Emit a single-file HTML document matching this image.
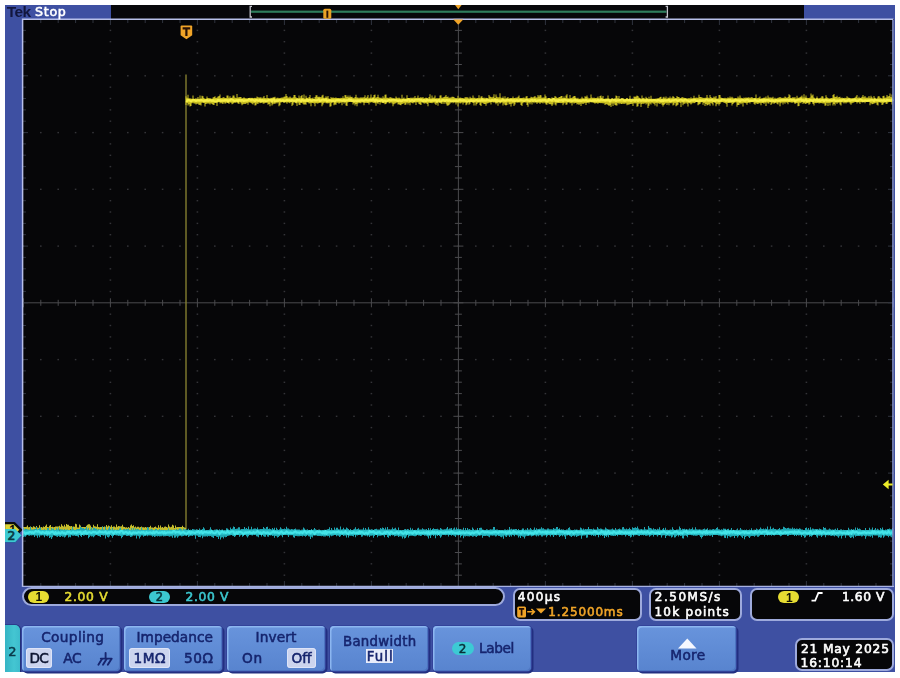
<!DOCTYPE html>
<html><head><meta charset="utf-8"><title>Tek Scope</title>
<style>
html,body{margin:0;padding:0;background:#fff;}
body{width:900px;height:678px;position:relative;overflow:hidden;font-family:"DejaVu Sans","Liberation Sans",sans-serif;}
.abs{position:absolute;}
#frame{left:5px;top:5px;width:890px;height:667px;background:#3e50a2;}
#topblack{left:111px;top:5px;width:693px;height:14px;background:#07070a;}
.plot{position:absolute;left:0;top:0;}
.t{position:absolute;white-space:nowrap;font-weight:normal;line-height:1;-webkit-text-stroke:0.5px currentColor;}
.btn{position:absolute;top:625.6px;height:45.4px;background:linear-gradient(#6894dc,#5884cf);border-radius:4px;box-shadow:inset 1.5px 1.5px 0 #8cb6f0, inset -1px -1px 0 #4c74c0, 0 0 0 1px #33439a, 1.5px 1.5px 0 1px #222f80;box-sizing:border-box;}
.lab{color:#16246a;font-size:14.5px;}
.ro{position:absolute;background:#060608;border:2px solid #9eaadc;box-sizing:border-box;}
.sel{position:absolute;background:#ccd4ee;border-radius:3.5px;box-shadow:inset 0 0 0 1px #dde4f8;}
</style></head><body>
<div class="abs" id="frame"></div>
<div class="abs" id="topblack"></div>

<!-- readout bars -->
<div class="ro" style="left:22px;top:587px;width:483px;height:19px;border-radius:9.5px;"></div>
<div class="ro" style="left:512.8px;top:587.6px;width:129.4px;height:33.2px;border-radius:7px;"></div>
<div class="ro" style="left:648.8px;top:587.6px;width:93px;height:33.2px;border-radius:7px;"></div>
<div class="ro" style="left:749.8px;top:587.6px;width:144px;height:33.2px;border-radius:7px;"></div>
<div class="ro" style="left:794.6px;top:638.2px;width:99.4px;height:32.6px;border-radius:7px;"></div>

<div class="abs" style="left:27.5px;top:591px;width:21.5px;height:12.2px;border-radius:6.1px;background:#e6dc32;"></div>
<div class="abs" style="left:148.7px;top:591px;width:21.5px;height:12.2px;border-radius:6.1px;background:#3cc8d0;"></div>



<div class="abs" style="left:777.8px;top:591.2px;width:21.7px;height:12.2px;border-radius:6.1px;background:#e6dc32;"></div>


<!-- bottom menu -->
<div class="abs" style="left:5px;top:624.6px;width:14.6px;height:47.4px;background:linear-gradient(90deg,#34b4c4,#44c6d2 60%,#3cbccc);border-radius:0 5px 0 0;box-shadow:1.2px 0 0 #22307a, 0 -1px 0 #2c3c8c;"></div>

<div class="btn" style="left:22px;width:98px;"></div>
<div class="btn" style="left:124px;width:98px;"></div>
<div class="btn" style="left:227px;width:98px;"></div>
<div class="btn" style="left:330px;width:98px;"></div>
<div class="btn" style="left:433px;width:98px;"></div>
<div class="btn" style="left:637px;width:99px;"></div>

<div class="sel" style="left:26.2px;top:647.6px;width:26px;height:20.8px;"></div>

<div class="sel" style="left:128.8px;top:647.6px;width:41.4px;height:20.8px;"></div>

<div class="sel" style="left:287.4px;top:647.6px;width:28.6px;height:20.8px;"></div>

<div class="abs" style="left:366px;top:649px;width:27px;height:14px;background:#e8ecfa;"></div>

<div class="abs" style="left:451.5px;top:642px;width:22.5px;height:13.4px;border-radius:6.7px;background:#3ccad4;"></div>

<svg class="abs" style="left:676px;top:636px;" width="24" height="14" viewBox="676 636 24 14"><polygon points="678,648.4 687.3,638.6 696.5,648.4" fill="#f6f8ff"/></svg>

<svg class="abs" style="left:94px;top:650px;" width="22" height="18" viewBox="94 650 22 18"><g stroke="#16256e" stroke-width="1.9" fill="none" stroke-linecap="round"><path d="M105.6 653V658"/><path d="M100.8 658.6H111.6"/><path d="M102 659L98.4 664.8"/><path d="M106.6 659L103 664.8"/><path d="M111.4 659L107.8 664.8"/></g></svg>
<svg class="abs" style="left:808px;top:588px;" width="18" height="16" viewBox="808 588 18 16"><path d="M811.5 600.6H815.2L818.4 593H822.6" stroke="#fff" stroke-width="1.8" fill="none"/></svg>
<svg class="plot" width="900" height="678" viewBox="0 0 900 678">
<rect x="22" y="19" width="872" height="568" fill="#060608"/>
<g fill="#343438"><rect x="22.6" y="75.1" width="1.6" height="1.4" /><rect x="40.0" y="75.1" width="1.6" height="1.4" /><rect x="57.4" y="75.1" width="1.6" height="1.4" /><rect x="74.8" y="75.1" width="1.6" height="1.4" /><rect x="92.2" y="75.1" width="1.6" height="1.4" /><rect x="109.6" y="75.1" width="1.6" height="1.4" /><rect x="127.0" y="75.1" width="1.6" height="1.4" /><rect x="144.4" y="75.1" width="1.6" height="1.4" /><rect x="161.8" y="75.1" width="1.6" height="1.4" /><rect x="179.2" y="75.1" width="1.6" height="1.4" /><rect x="196.6" y="75.1" width="1.6" height="1.4" /><rect x="214.0" y="75.1" width="1.6" height="1.4" /><rect x="231.4" y="75.1" width="1.6" height="1.4" /><rect x="248.8" y="75.1" width="1.6" height="1.4" /><rect x="266.2" y="75.1" width="1.6" height="1.4" /><rect x="283.6" y="75.1" width="1.6" height="1.4" /><rect x="301.0" y="75.1" width="1.6" height="1.4" /><rect x="318.4" y="75.1" width="1.6" height="1.4" /><rect x="335.8" y="75.1" width="1.6" height="1.4" /><rect x="353.2" y="75.1" width="1.6" height="1.4" /><rect x="370.6" y="75.1" width="1.6" height="1.4" /><rect x="388.0" y="75.1" width="1.6" height="1.4" /><rect x="405.4" y="75.1" width="1.6" height="1.4" /><rect x="422.8" y="75.1" width="1.6" height="1.4" /><rect x="440.2" y="75.1" width="1.6" height="1.4" /><rect x="457.6" y="75.1" width="1.6" height="1.4" /><rect x="475.0" y="75.1" width="1.6" height="1.4" /><rect x="492.4" y="75.1" width="1.6" height="1.4" /><rect x="509.8" y="75.1" width="1.6" height="1.4" /><rect x="527.2" y="75.1" width="1.6" height="1.4" /><rect x="544.6" y="75.1" width="1.6" height="1.4" /><rect x="562.0" y="75.1" width="1.6" height="1.4" /><rect x="579.4" y="75.1" width="1.6" height="1.4" /><rect x="596.8" y="75.1" width="1.6" height="1.4" /><rect x="614.2" y="75.1" width="1.6" height="1.4" /><rect x="631.6" y="75.1" width="1.6" height="1.4" /><rect x="649.0" y="75.1" width="1.6" height="1.4" /><rect x="666.4" y="75.1" width="1.6" height="1.4" /><rect x="683.8" y="75.1" width="1.6" height="1.4" /><rect x="701.2" y="75.1" width="1.6" height="1.4" /><rect x="718.6" y="75.1" width="1.6" height="1.4" /><rect x="736.0" y="75.1" width="1.6" height="1.4" /><rect x="753.4" y="75.1" width="1.6" height="1.4" /><rect x="770.8" y="75.1" width="1.6" height="1.4" /><rect x="788.2" y="75.1" width="1.6" height="1.4" /><rect x="805.6" y="75.1" width="1.6" height="1.4" /><rect x="823.0" y="75.1" width="1.6" height="1.4" /><rect x="840.4" y="75.1" width="1.6" height="1.4" /><rect x="857.8" y="75.1" width="1.6" height="1.4" /><rect x="875.2" y="75.1" width="1.6" height="1.4" /><rect x="892.6" y="75.1" width="1.6" height="1.4" /><rect x="22.6" y="131.9" width="1.6" height="1.4" /><rect x="40.0" y="131.9" width="1.6" height="1.4" /><rect x="57.4" y="131.9" width="1.6" height="1.4" /><rect x="74.8" y="131.9" width="1.6" height="1.4" /><rect x="92.2" y="131.9" width="1.6" height="1.4" /><rect x="109.6" y="131.9" width="1.6" height="1.4" /><rect x="127.0" y="131.9" width="1.6" height="1.4" /><rect x="144.4" y="131.9" width="1.6" height="1.4" /><rect x="161.8" y="131.9" width="1.6" height="1.4" /><rect x="179.2" y="131.9" width="1.6" height="1.4" /><rect x="196.6" y="131.9" width="1.6" height="1.4" /><rect x="214.0" y="131.9" width="1.6" height="1.4" /><rect x="231.4" y="131.9" width="1.6" height="1.4" /><rect x="248.8" y="131.9" width="1.6" height="1.4" /><rect x="266.2" y="131.9" width="1.6" height="1.4" /><rect x="283.6" y="131.9" width="1.6" height="1.4" /><rect x="301.0" y="131.9" width="1.6" height="1.4" /><rect x="318.4" y="131.9" width="1.6" height="1.4" /><rect x="335.8" y="131.9" width="1.6" height="1.4" /><rect x="353.2" y="131.9" width="1.6" height="1.4" /><rect x="370.6" y="131.9" width="1.6" height="1.4" /><rect x="388.0" y="131.9" width="1.6" height="1.4" /><rect x="405.4" y="131.9" width="1.6" height="1.4" /><rect x="422.8" y="131.9" width="1.6" height="1.4" /><rect x="440.2" y="131.9" width="1.6" height="1.4" /><rect x="457.6" y="131.9" width="1.6" height="1.4" /><rect x="475.0" y="131.9" width="1.6" height="1.4" /><rect x="492.4" y="131.9" width="1.6" height="1.4" /><rect x="509.8" y="131.9" width="1.6" height="1.4" /><rect x="527.2" y="131.9" width="1.6" height="1.4" /><rect x="544.6" y="131.9" width="1.6" height="1.4" /><rect x="562.0" y="131.9" width="1.6" height="1.4" /><rect x="579.4" y="131.9" width="1.6" height="1.4" /><rect x="596.8" y="131.9" width="1.6" height="1.4" /><rect x="614.2" y="131.9" width="1.6" height="1.4" /><rect x="631.6" y="131.9" width="1.6" height="1.4" /><rect x="649.0" y="131.9" width="1.6" height="1.4" /><rect x="666.4" y="131.9" width="1.6" height="1.4" /><rect x="683.8" y="131.9" width="1.6" height="1.4" /><rect x="701.2" y="131.9" width="1.6" height="1.4" /><rect x="718.6" y="131.9" width="1.6" height="1.4" /><rect x="736.0" y="131.9" width="1.6" height="1.4" /><rect x="753.4" y="131.9" width="1.6" height="1.4" /><rect x="770.8" y="131.9" width="1.6" height="1.4" /><rect x="788.2" y="131.9" width="1.6" height="1.4" /><rect x="805.6" y="131.9" width="1.6" height="1.4" /><rect x="823.0" y="131.9" width="1.6" height="1.4" /><rect x="840.4" y="131.9" width="1.6" height="1.4" /><rect x="857.8" y="131.9" width="1.6" height="1.4" /><rect x="875.2" y="131.9" width="1.6" height="1.4" /><rect x="892.6" y="131.9" width="1.6" height="1.4" /><rect x="22.6" y="188.6" width="1.6" height="1.4" /><rect x="40.0" y="188.6" width="1.6" height="1.4" /><rect x="57.4" y="188.6" width="1.6" height="1.4" /><rect x="74.8" y="188.6" width="1.6" height="1.4" /><rect x="92.2" y="188.6" width="1.6" height="1.4" /><rect x="109.6" y="188.6" width="1.6" height="1.4" /><rect x="127.0" y="188.6" width="1.6" height="1.4" /><rect x="144.4" y="188.6" width="1.6" height="1.4" /><rect x="161.8" y="188.6" width="1.6" height="1.4" /><rect x="179.2" y="188.6" width="1.6" height="1.4" /><rect x="196.6" y="188.6" width="1.6" height="1.4" /><rect x="214.0" y="188.6" width="1.6" height="1.4" /><rect x="231.4" y="188.6" width="1.6" height="1.4" /><rect x="248.8" y="188.6" width="1.6" height="1.4" /><rect x="266.2" y="188.6" width="1.6" height="1.4" /><rect x="283.6" y="188.6" width="1.6" height="1.4" /><rect x="301.0" y="188.6" width="1.6" height="1.4" /><rect x="318.4" y="188.6" width="1.6" height="1.4" /><rect x="335.8" y="188.6" width="1.6" height="1.4" /><rect x="353.2" y="188.6" width="1.6" height="1.4" /><rect x="370.6" y="188.6" width="1.6" height="1.4" /><rect x="388.0" y="188.6" width="1.6" height="1.4" /><rect x="405.4" y="188.6" width="1.6" height="1.4" /><rect x="422.8" y="188.6" width="1.6" height="1.4" /><rect x="440.2" y="188.6" width="1.6" height="1.4" /><rect x="457.6" y="188.6" width="1.6" height="1.4" /><rect x="475.0" y="188.6" width="1.6" height="1.4" /><rect x="492.4" y="188.6" width="1.6" height="1.4" /><rect x="509.8" y="188.6" width="1.6" height="1.4" /><rect x="527.2" y="188.6" width="1.6" height="1.4" /><rect x="544.6" y="188.6" width="1.6" height="1.4" /><rect x="562.0" y="188.6" width="1.6" height="1.4" /><rect x="579.4" y="188.6" width="1.6" height="1.4" /><rect x="596.8" y="188.6" width="1.6" height="1.4" /><rect x="614.2" y="188.6" width="1.6" height="1.4" /><rect x="631.6" y="188.6" width="1.6" height="1.4" /><rect x="649.0" y="188.6" width="1.6" height="1.4" /><rect x="666.4" y="188.6" width="1.6" height="1.4" /><rect x="683.8" y="188.6" width="1.6" height="1.4" /><rect x="701.2" y="188.6" width="1.6" height="1.4" /><rect x="718.6" y="188.6" width="1.6" height="1.4" /><rect x="736.0" y="188.6" width="1.6" height="1.4" /><rect x="753.4" y="188.6" width="1.6" height="1.4" /><rect x="770.8" y="188.6" width="1.6" height="1.4" /><rect x="788.2" y="188.6" width="1.6" height="1.4" /><rect x="805.6" y="188.6" width="1.6" height="1.4" /><rect x="823.0" y="188.6" width="1.6" height="1.4" /><rect x="840.4" y="188.6" width="1.6" height="1.4" /><rect x="857.8" y="188.6" width="1.6" height="1.4" /><rect x="875.2" y="188.6" width="1.6" height="1.4" /><rect x="892.6" y="188.6" width="1.6" height="1.4" /><rect x="22.6" y="245.4" width="1.6" height="1.4" /><rect x="40.0" y="245.4" width="1.6" height="1.4" /><rect x="57.4" y="245.4" width="1.6" height="1.4" /><rect x="74.8" y="245.4" width="1.6" height="1.4" /><rect x="92.2" y="245.4" width="1.6" height="1.4" /><rect x="109.6" y="245.4" width="1.6" height="1.4" /><rect x="127.0" y="245.4" width="1.6" height="1.4" /><rect x="144.4" y="245.4" width="1.6" height="1.4" /><rect x="161.8" y="245.4" width="1.6" height="1.4" /><rect x="179.2" y="245.4" width="1.6" height="1.4" /><rect x="196.6" y="245.4" width="1.6" height="1.4" /><rect x="214.0" y="245.4" width="1.6" height="1.4" /><rect x="231.4" y="245.4" width="1.6" height="1.4" /><rect x="248.8" y="245.4" width="1.6" height="1.4" /><rect x="266.2" y="245.4" width="1.6" height="1.4" /><rect x="283.6" y="245.4" width="1.6" height="1.4" /><rect x="301.0" y="245.4" width="1.6" height="1.4" /><rect x="318.4" y="245.4" width="1.6" height="1.4" /><rect x="335.8" y="245.4" width="1.6" height="1.4" /><rect x="353.2" y="245.4" width="1.6" height="1.4" /><rect x="370.6" y="245.4" width="1.6" height="1.4" /><rect x="388.0" y="245.4" width="1.6" height="1.4" /><rect x="405.4" y="245.4" width="1.6" height="1.4" /><rect x="422.8" y="245.4" width="1.6" height="1.4" /><rect x="440.2" y="245.4" width="1.6" height="1.4" /><rect x="457.6" y="245.4" width="1.6" height="1.4" /><rect x="475.0" y="245.4" width="1.6" height="1.4" /><rect x="492.4" y="245.4" width="1.6" height="1.4" /><rect x="509.8" y="245.4" width="1.6" height="1.4" /><rect x="527.2" y="245.4" width="1.6" height="1.4" /><rect x="544.6" y="245.4" width="1.6" height="1.4" /><rect x="562.0" y="245.4" width="1.6" height="1.4" /><rect x="579.4" y="245.4" width="1.6" height="1.4" /><rect x="596.8" y="245.4" width="1.6" height="1.4" /><rect x="614.2" y="245.4" width="1.6" height="1.4" /><rect x="631.6" y="245.4" width="1.6" height="1.4" /><rect x="649.0" y="245.4" width="1.6" height="1.4" /><rect x="666.4" y="245.4" width="1.6" height="1.4" /><rect x="683.8" y="245.4" width="1.6" height="1.4" /><rect x="701.2" y="245.4" width="1.6" height="1.4" /><rect x="718.6" y="245.4" width="1.6" height="1.4" /><rect x="736.0" y="245.4" width="1.6" height="1.4" /><rect x="753.4" y="245.4" width="1.6" height="1.4" /><rect x="770.8" y="245.4" width="1.6" height="1.4" /><rect x="788.2" y="245.4" width="1.6" height="1.4" /><rect x="805.6" y="245.4" width="1.6" height="1.4" /><rect x="823.0" y="245.4" width="1.6" height="1.4" /><rect x="840.4" y="245.4" width="1.6" height="1.4" /><rect x="857.8" y="245.4" width="1.6" height="1.4" /><rect x="875.2" y="245.4" width="1.6" height="1.4" /><rect x="892.6" y="245.4" width="1.6" height="1.4" /><rect x="22.6" y="358.9" width="1.6" height="1.4" /><rect x="40.0" y="358.9" width="1.6" height="1.4" /><rect x="57.4" y="358.9" width="1.6" height="1.4" /><rect x="74.8" y="358.9" width="1.6" height="1.4" /><rect x="92.2" y="358.9" width="1.6" height="1.4" /><rect x="109.6" y="358.9" width="1.6" height="1.4" /><rect x="127.0" y="358.9" width="1.6" height="1.4" /><rect x="144.4" y="358.9" width="1.6" height="1.4" /><rect x="161.8" y="358.9" width="1.6" height="1.4" /><rect x="179.2" y="358.9" width="1.6" height="1.4" /><rect x="196.6" y="358.9" width="1.6" height="1.4" /><rect x="214.0" y="358.9" width="1.6" height="1.4" /><rect x="231.4" y="358.9" width="1.6" height="1.4" /><rect x="248.8" y="358.9" width="1.6" height="1.4" /><rect x="266.2" y="358.9" width="1.6" height="1.4" /><rect x="283.6" y="358.9" width="1.6" height="1.4" /><rect x="301.0" y="358.9" width="1.6" height="1.4" /><rect x="318.4" y="358.9" width="1.6" height="1.4" /><rect x="335.8" y="358.9" width="1.6" height="1.4" /><rect x="353.2" y="358.9" width="1.6" height="1.4" /><rect x="370.6" y="358.9" width="1.6" height="1.4" /><rect x="388.0" y="358.9" width="1.6" height="1.4" /><rect x="405.4" y="358.9" width="1.6" height="1.4" /><rect x="422.8" y="358.9" width="1.6" height="1.4" /><rect x="440.2" y="358.9" width="1.6" height="1.4" /><rect x="457.6" y="358.9" width="1.6" height="1.4" /><rect x="475.0" y="358.9" width="1.6" height="1.4" /><rect x="492.4" y="358.9" width="1.6" height="1.4" /><rect x="509.8" y="358.9" width="1.6" height="1.4" /><rect x="527.2" y="358.9" width="1.6" height="1.4" /><rect x="544.6" y="358.9" width="1.6" height="1.4" /><rect x="562.0" y="358.9" width="1.6" height="1.4" /><rect x="579.4" y="358.9" width="1.6" height="1.4" /><rect x="596.8" y="358.9" width="1.6" height="1.4" /><rect x="614.2" y="358.9" width="1.6" height="1.4" /><rect x="631.6" y="358.9" width="1.6" height="1.4" /><rect x="649.0" y="358.9" width="1.6" height="1.4" /><rect x="666.4" y="358.9" width="1.6" height="1.4" /><rect x="683.8" y="358.9" width="1.6" height="1.4" /><rect x="701.2" y="358.9" width="1.6" height="1.4" /><rect x="718.6" y="358.9" width="1.6" height="1.4" /><rect x="736.0" y="358.9" width="1.6" height="1.4" /><rect x="753.4" y="358.9" width="1.6" height="1.4" /><rect x="770.8" y="358.9" width="1.6" height="1.4" /><rect x="788.2" y="358.9" width="1.6" height="1.4" /><rect x="805.6" y="358.9" width="1.6" height="1.4" /><rect x="823.0" y="358.9" width="1.6" height="1.4" /><rect x="840.4" y="358.9" width="1.6" height="1.4" /><rect x="857.8" y="358.9" width="1.6" height="1.4" /><rect x="875.2" y="358.9" width="1.6" height="1.4" /><rect x="892.6" y="358.9" width="1.6" height="1.4" /><rect x="22.6" y="415.6" width="1.6" height="1.4" /><rect x="40.0" y="415.6" width="1.6" height="1.4" /><rect x="57.4" y="415.6" width="1.6" height="1.4" /><rect x="74.8" y="415.6" width="1.6" height="1.4" /><rect x="92.2" y="415.6" width="1.6" height="1.4" /><rect x="109.6" y="415.6" width="1.6" height="1.4" /><rect x="127.0" y="415.6" width="1.6" height="1.4" /><rect x="144.4" y="415.6" width="1.6" height="1.4" /><rect x="161.8" y="415.6" width="1.6" height="1.4" /><rect x="179.2" y="415.6" width="1.6" height="1.4" /><rect x="196.6" y="415.6" width="1.6" height="1.4" /><rect x="214.0" y="415.6" width="1.6" height="1.4" /><rect x="231.4" y="415.6" width="1.6" height="1.4" /><rect x="248.8" y="415.6" width="1.6" height="1.4" /><rect x="266.2" y="415.6" width="1.6" height="1.4" /><rect x="283.6" y="415.6" width="1.6" height="1.4" /><rect x="301.0" y="415.6" width="1.6" height="1.4" /><rect x="318.4" y="415.6" width="1.6" height="1.4" /><rect x="335.8" y="415.6" width="1.6" height="1.4" /><rect x="353.2" y="415.6" width="1.6" height="1.4" /><rect x="370.6" y="415.6" width="1.6" height="1.4" /><rect x="388.0" y="415.6" width="1.6" height="1.4" /><rect x="405.4" y="415.6" width="1.6" height="1.4" /><rect x="422.8" y="415.6" width="1.6" height="1.4" /><rect x="440.2" y="415.6" width="1.6" height="1.4" /><rect x="457.6" y="415.6" width="1.6" height="1.4" /><rect x="475.0" y="415.6" width="1.6" height="1.4" /><rect x="492.4" y="415.6" width="1.6" height="1.4" /><rect x="509.8" y="415.6" width="1.6" height="1.4" /><rect x="527.2" y="415.6" width="1.6" height="1.4" /><rect x="544.6" y="415.6" width="1.6" height="1.4" /><rect x="562.0" y="415.6" width="1.6" height="1.4" /><rect x="579.4" y="415.6" width="1.6" height="1.4" /><rect x="596.8" y="415.6" width="1.6" height="1.4" /><rect x="614.2" y="415.6" width="1.6" height="1.4" /><rect x="631.6" y="415.6" width="1.6" height="1.4" /><rect x="649.0" y="415.6" width="1.6" height="1.4" /><rect x="666.4" y="415.6" width="1.6" height="1.4" /><rect x="683.8" y="415.6" width="1.6" height="1.4" /><rect x="701.2" y="415.6" width="1.6" height="1.4" /><rect x="718.6" y="415.6" width="1.6" height="1.4" /><rect x="736.0" y="415.6" width="1.6" height="1.4" /><rect x="753.4" y="415.6" width="1.6" height="1.4" /><rect x="770.8" y="415.6" width="1.6" height="1.4" /><rect x="788.2" y="415.6" width="1.6" height="1.4" /><rect x="805.6" y="415.6" width="1.6" height="1.4" /><rect x="823.0" y="415.6" width="1.6" height="1.4" /><rect x="840.4" y="415.6" width="1.6" height="1.4" /><rect x="857.8" y="415.6" width="1.6" height="1.4" /><rect x="875.2" y="415.6" width="1.6" height="1.4" /><rect x="892.6" y="415.6" width="1.6" height="1.4" /><rect x="22.6" y="472.4" width="1.6" height="1.4" /><rect x="40.0" y="472.4" width="1.6" height="1.4" /><rect x="57.4" y="472.4" width="1.6" height="1.4" /><rect x="74.8" y="472.4" width="1.6" height="1.4" /><rect x="92.2" y="472.4" width="1.6" height="1.4" /><rect x="109.6" y="472.4" width="1.6" height="1.4" /><rect x="127.0" y="472.4" width="1.6" height="1.4" /><rect x="144.4" y="472.4" width="1.6" height="1.4" /><rect x="161.8" y="472.4" width="1.6" height="1.4" /><rect x="179.2" y="472.4" width="1.6" height="1.4" /><rect x="196.6" y="472.4" width="1.6" height="1.4" /><rect x="214.0" y="472.4" width="1.6" height="1.4" /><rect x="231.4" y="472.4" width="1.6" height="1.4" /><rect x="248.8" y="472.4" width="1.6" height="1.4" /><rect x="266.2" y="472.4" width="1.6" height="1.4" /><rect x="283.6" y="472.4" width="1.6" height="1.4" /><rect x="301.0" y="472.4" width="1.6" height="1.4" /><rect x="318.4" y="472.4" width="1.6" height="1.4" /><rect x="335.8" y="472.4" width="1.6" height="1.4" /><rect x="353.2" y="472.4" width="1.6" height="1.4" /><rect x="370.6" y="472.4" width="1.6" height="1.4" /><rect x="388.0" y="472.4" width="1.6" height="1.4" /><rect x="405.4" y="472.4" width="1.6" height="1.4" /><rect x="422.8" y="472.4" width="1.6" height="1.4" /><rect x="440.2" y="472.4" width="1.6" height="1.4" /><rect x="457.6" y="472.4" width="1.6" height="1.4" /><rect x="475.0" y="472.4" width="1.6" height="1.4" /><rect x="492.4" y="472.4" width="1.6" height="1.4" /><rect x="509.8" y="472.4" width="1.6" height="1.4" /><rect x="527.2" y="472.4" width="1.6" height="1.4" /><rect x="544.6" y="472.4" width="1.6" height="1.4" /><rect x="562.0" y="472.4" width="1.6" height="1.4" /><rect x="579.4" y="472.4" width="1.6" height="1.4" /><rect x="596.8" y="472.4" width="1.6" height="1.4" /><rect x="614.2" y="472.4" width="1.6" height="1.4" /><rect x="631.6" y="472.4" width="1.6" height="1.4" /><rect x="649.0" y="472.4" width="1.6" height="1.4" /><rect x="666.4" y="472.4" width="1.6" height="1.4" /><rect x="683.8" y="472.4" width="1.6" height="1.4" /><rect x="701.2" y="472.4" width="1.6" height="1.4" /><rect x="718.6" y="472.4" width="1.6" height="1.4" /><rect x="736.0" y="472.4" width="1.6" height="1.4" /><rect x="753.4" y="472.4" width="1.6" height="1.4" /><rect x="770.8" y="472.4" width="1.6" height="1.4" /><rect x="788.2" y="472.4" width="1.6" height="1.4" /><rect x="805.6" y="472.4" width="1.6" height="1.4" /><rect x="823.0" y="472.4" width="1.6" height="1.4" /><rect x="840.4" y="472.4" width="1.6" height="1.4" /><rect x="857.8" y="472.4" width="1.6" height="1.4" /><rect x="875.2" y="472.4" width="1.6" height="1.4" /><rect x="892.6" y="472.4" width="1.6" height="1.4" /><rect x="22.6" y="529.1" width="1.6" height="1.4" /><rect x="40.0" y="529.1" width="1.6" height="1.4" /><rect x="57.4" y="529.1" width="1.6" height="1.4" /><rect x="74.8" y="529.1" width="1.6" height="1.4" /><rect x="92.2" y="529.1" width="1.6" height="1.4" /><rect x="109.6" y="529.1" width="1.6" height="1.4" /><rect x="127.0" y="529.1" width="1.6" height="1.4" /><rect x="144.4" y="529.1" width="1.6" height="1.4" /><rect x="161.8" y="529.1" width="1.6" height="1.4" /><rect x="179.2" y="529.1" width="1.6" height="1.4" /><rect x="196.6" y="529.1" width="1.6" height="1.4" /><rect x="214.0" y="529.1" width="1.6" height="1.4" /><rect x="231.4" y="529.1" width="1.6" height="1.4" /><rect x="248.8" y="529.1" width="1.6" height="1.4" /><rect x="266.2" y="529.1" width="1.6" height="1.4" /><rect x="283.6" y="529.1" width="1.6" height="1.4" /><rect x="301.0" y="529.1" width="1.6" height="1.4" /><rect x="318.4" y="529.1" width="1.6" height="1.4" /><rect x="335.8" y="529.1" width="1.6" height="1.4" /><rect x="353.2" y="529.1" width="1.6" height="1.4" /><rect x="370.6" y="529.1" width="1.6" height="1.4" /><rect x="388.0" y="529.1" width="1.6" height="1.4" /><rect x="405.4" y="529.1" width="1.6" height="1.4" /><rect x="422.8" y="529.1" width="1.6" height="1.4" /><rect x="440.2" y="529.1" width="1.6" height="1.4" /><rect x="457.6" y="529.1" width="1.6" height="1.4" /><rect x="475.0" y="529.1" width="1.6" height="1.4" /><rect x="492.4" y="529.1" width="1.6" height="1.4" /><rect x="509.8" y="529.1" width="1.6" height="1.4" /><rect x="527.2" y="529.1" width="1.6" height="1.4" /><rect x="544.6" y="529.1" width="1.6" height="1.4" /><rect x="562.0" y="529.1" width="1.6" height="1.4" /><rect x="579.4" y="529.1" width="1.6" height="1.4" /><rect x="596.8" y="529.1" width="1.6" height="1.4" /><rect x="614.2" y="529.1" width="1.6" height="1.4" /><rect x="631.6" y="529.1" width="1.6" height="1.4" /><rect x="649.0" y="529.1" width="1.6" height="1.4" /><rect x="666.4" y="529.1" width="1.6" height="1.4" /><rect x="683.8" y="529.1" width="1.6" height="1.4" /><rect x="701.2" y="529.1" width="1.6" height="1.4" /><rect x="718.6" y="529.1" width="1.6" height="1.4" /><rect x="736.0" y="529.1" width="1.6" height="1.4" /><rect x="753.4" y="529.1" width="1.6" height="1.4" /><rect x="770.8" y="529.1" width="1.6" height="1.4" /><rect x="788.2" y="529.1" width="1.6" height="1.4" /><rect x="805.6" y="529.1" width="1.6" height="1.4" /><rect x="823.0" y="529.1" width="1.6" height="1.4" /><rect x="840.4" y="529.1" width="1.6" height="1.4" /><rect x="857.8" y="529.1" width="1.6" height="1.4" /><rect x="875.2" y="529.1" width="1.6" height="1.4" /><rect x="892.6" y="529.1" width="1.6" height="1.4" /><rect x="109.6" y="29.7" width="1.6" height="1.4" /><rect x="109.6" y="41.0" width="1.6" height="1.4" /><rect x="109.6" y="52.4" width="1.6" height="1.4" /><rect x="109.6" y="63.8" width="1.6" height="1.4" /><rect x="109.6" y="86.5" width="1.6" height="1.4" /><rect x="109.6" y="97.8" width="1.6" height="1.4" /><rect x="109.6" y="109.2" width="1.6" height="1.4" /><rect x="109.6" y="120.5" width="1.6" height="1.4" /><rect x="109.6" y="143.2" width="1.6" height="1.4" /><rect x="109.6" y="154.6" width="1.6" height="1.4" /><rect x="109.6" y="165.9" width="1.6" height="1.4" /><rect x="109.6" y="177.3" width="1.6" height="1.4" /><rect x="109.6" y="200.0" width="1.6" height="1.4" /><rect x="109.6" y="211.3" width="1.6" height="1.4" /><rect x="109.6" y="222.7" width="1.6" height="1.4" /><rect x="109.6" y="234.0" width="1.6" height="1.4" /><rect x="109.6" y="256.7" width="1.6" height="1.4" /><rect x="109.6" y="268.1" width="1.6" height="1.4" /><rect x="109.6" y="279.4" width="1.6" height="1.4" /><rect x="109.6" y="290.8" width="1.6" height="1.4" /><rect x="109.6" y="313.5" width="1.6" height="1.4" /><rect x="109.6" y="324.8" width="1.6" height="1.4" /><rect x="109.6" y="336.2" width="1.6" height="1.4" /><rect x="109.6" y="347.5" width="1.6" height="1.4" /><rect x="109.6" y="370.2" width="1.6" height="1.4" /><rect x="109.6" y="381.6" width="1.6" height="1.4" /><rect x="109.6" y="392.9" width="1.6" height="1.4" /><rect x="109.6" y="404.3" width="1.6" height="1.4" /><rect x="109.6" y="426.9" width="1.6" height="1.4" /><rect x="109.6" y="438.3" width="1.6" height="1.4" /><rect x="109.6" y="449.7" width="1.6" height="1.4" /><rect x="109.6" y="461.0" width="1.6" height="1.4" /><rect x="109.6" y="483.7" width="1.6" height="1.4" /><rect x="109.6" y="495.1" width="1.6" height="1.4" /><rect x="109.6" y="506.4" width="1.6" height="1.4" /><rect x="109.6" y="517.8" width="1.6" height="1.4" /><rect x="109.6" y="540.4" width="1.6" height="1.4" /><rect x="109.6" y="551.8" width="1.6" height="1.4" /><rect x="109.6" y="563.1" width="1.6" height="1.4" /><rect x="109.6" y="574.5" width="1.6" height="1.4" /><rect x="196.6" y="29.7" width="1.6" height="1.4" /><rect x="196.6" y="41.0" width="1.6" height="1.4" /><rect x="196.6" y="52.4" width="1.6" height="1.4" /><rect x="196.6" y="63.8" width="1.6" height="1.4" /><rect x="196.6" y="86.5" width="1.6" height="1.4" /><rect x="196.6" y="97.8" width="1.6" height="1.4" /><rect x="196.6" y="109.2" width="1.6" height="1.4" /><rect x="196.6" y="120.5" width="1.6" height="1.4" /><rect x="196.6" y="143.2" width="1.6" height="1.4" /><rect x="196.6" y="154.6" width="1.6" height="1.4" /><rect x="196.6" y="165.9" width="1.6" height="1.4" /><rect x="196.6" y="177.3" width="1.6" height="1.4" /><rect x="196.6" y="200.0" width="1.6" height="1.4" /><rect x="196.6" y="211.3" width="1.6" height="1.4" /><rect x="196.6" y="222.7" width="1.6" height="1.4" /><rect x="196.6" y="234.0" width="1.6" height="1.4" /><rect x="196.6" y="256.7" width="1.6" height="1.4" /><rect x="196.6" y="268.1" width="1.6" height="1.4" /><rect x="196.6" y="279.4" width="1.6" height="1.4" /><rect x="196.6" y="290.8" width="1.6" height="1.4" /><rect x="196.6" y="313.5" width="1.6" height="1.4" /><rect x="196.6" y="324.8" width="1.6" height="1.4" /><rect x="196.6" y="336.2" width="1.6" height="1.4" /><rect x="196.6" y="347.5" width="1.6" height="1.4" /><rect x="196.6" y="370.2" width="1.6" height="1.4" /><rect x="196.6" y="381.6" width="1.6" height="1.4" /><rect x="196.6" y="392.9" width="1.6" height="1.4" /><rect x="196.6" y="404.3" width="1.6" height="1.4" /><rect x="196.6" y="426.9" width="1.6" height="1.4" /><rect x="196.6" y="438.3" width="1.6" height="1.4" /><rect x="196.6" y="449.7" width="1.6" height="1.4" /><rect x="196.6" y="461.0" width="1.6" height="1.4" /><rect x="196.6" y="483.7" width="1.6" height="1.4" /><rect x="196.6" y="495.1" width="1.6" height="1.4" /><rect x="196.6" y="506.4" width="1.6" height="1.4" /><rect x="196.6" y="517.8" width="1.6" height="1.4" /><rect x="196.6" y="540.4" width="1.6" height="1.4" /><rect x="196.6" y="551.8" width="1.6" height="1.4" /><rect x="196.6" y="563.1" width="1.6" height="1.4" /><rect x="196.6" y="574.5" width="1.6" height="1.4" /><rect x="283.6" y="29.7" width="1.6" height="1.4" /><rect x="283.6" y="41.0" width="1.6" height="1.4" /><rect x="283.6" y="52.4" width="1.6" height="1.4" /><rect x="283.6" y="63.8" width="1.6" height="1.4" /><rect x="283.6" y="86.5" width="1.6" height="1.4" /><rect x="283.6" y="97.8" width="1.6" height="1.4" /><rect x="283.6" y="109.2" width="1.6" height="1.4" /><rect x="283.6" y="120.5" width="1.6" height="1.4" /><rect x="283.6" y="143.2" width="1.6" height="1.4" /><rect x="283.6" y="154.6" width="1.6" height="1.4" /><rect x="283.6" y="165.9" width="1.6" height="1.4" /><rect x="283.6" y="177.3" width="1.6" height="1.4" /><rect x="283.6" y="200.0" width="1.6" height="1.4" /><rect x="283.6" y="211.3" width="1.6" height="1.4" /><rect x="283.6" y="222.7" width="1.6" height="1.4" /><rect x="283.6" y="234.0" width="1.6" height="1.4" /><rect x="283.6" y="256.7" width="1.6" height="1.4" /><rect x="283.6" y="268.1" width="1.6" height="1.4" /><rect x="283.6" y="279.4" width="1.6" height="1.4" /><rect x="283.6" y="290.8" width="1.6" height="1.4" /><rect x="283.6" y="313.5" width="1.6" height="1.4" /><rect x="283.6" y="324.8" width="1.6" height="1.4" /><rect x="283.6" y="336.2" width="1.6" height="1.4" /><rect x="283.6" y="347.5" width="1.6" height="1.4" /><rect x="283.6" y="370.2" width="1.6" height="1.4" /><rect x="283.6" y="381.6" width="1.6" height="1.4" /><rect x="283.6" y="392.9" width="1.6" height="1.4" /><rect x="283.6" y="404.3" width="1.6" height="1.4" /><rect x="283.6" y="426.9" width="1.6" height="1.4" /><rect x="283.6" y="438.3" width="1.6" height="1.4" /><rect x="283.6" y="449.7" width="1.6" height="1.4" /><rect x="283.6" y="461.0" width="1.6" height="1.4" /><rect x="283.6" y="483.7" width="1.6" height="1.4" /><rect x="283.6" y="495.1" width="1.6" height="1.4" /><rect x="283.6" y="506.4" width="1.6" height="1.4" /><rect x="283.6" y="517.8" width="1.6" height="1.4" /><rect x="283.6" y="540.4" width="1.6" height="1.4" /><rect x="283.6" y="551.8" width="1.6" height="1.4" /><rect x="283.6" y="563.1" width="1.6" height="1.4" /><rect x="283.6" y="574.5" width="1.6" height="1.4" /><rect x="370.6" y="29.7" width="1.6" height="1.4" /><rect x="370.6" y="41.0" width="1.6" height="1.4" /><rect x="370.6" y="52.4" width="1.6" height="1.4" /><rect x="370.6" y="63.8" width="1.6" height="1.4" /><rect x="370.6" y="86.5" width="1.6" height="1.4" /><rect x="370.6" y="97.8" width="1.6" height="1.4" /><rect x="370.6" y="109.2" width="1.6" height="1.4" /><rect x="370.6" y="120.5" width="1.6" height="1.4" /><rect x="370.6" y="143.2" width="1.6" height="1.4" /><rect x="370.6" y="154.6" width="1.6" height="1.4" /><rect x="370.6" y="165.9" width="1.6" height="1.4" /><rect x="370.6" y="177.3" width="1.6" height="1.4" /><rect x="370.6" y="200.0" width="1.6" height="1.4" /><rect x="370.6" y="211.3" width="1.6" height="1.4" /><rect x="370.6" y="222.7" width="1.6" height="1.4" /><rect x="370.6" y="234.0" width="1.6" height="1.4" /><rect x="370.6" y="256.7" width="1.6" height="1.4" /><rect x="370.6" y="268.1" width="1.6" height="1.4" /><rect x="370.6" y="279.4" width="1.6" height="1.4" /><rect x="370.6" y="290.8" width="1.6" height="1.4" /><rect x="370.6" y="313.5" width="1.6" height="1.4" /><rect x="370.6" y="324.8" width="1.6" height="1.4" /><rect x="370.6" y="336.2" width="1.6" height="1.4" /><rect x="370.6" y="347.5" width="1.6" height="1.4" /><rect x="370.6" y="370.2" width="1.6" height="1.4" /><rect x="370.6" y="381.6" width="1.6" height="1.4" /><rect x="370.6" y="392.9" width="1.6" height="1.4" /><rect x="370.6" y="404.3" width="1.6" height="1.4" /><rect x="370.6" y="426.9" width="1.6" height="1.4" /><rect x="370.6" y="438.3" width="1.6" height="1.4" /><rect x="370.6" y="449.7" width="1.6" height="1.4" /><rect x="370.6" y="461.0" width="1.6" height="1.4" /><rect x="370.6" y="483.7" width="1.6" height="1.4" /><rect x="370.6" y="495.1" width="1.6" height="1.4" /><rect x="370.6" y="506.4" width="1.6" height="1.4" /><rect x="370.6" y="517.8" width="1.6" height="1.4" /><rect x="370.6" y="540.4" width="1.6" height="1.4" /><rect x="370.6" y="551.8" width="1.6" height="1.4" /><rect x="370.6" y="563.1" width="1.6" height="1.4" /><rect x="370.6" y="574.5" width="1.6" height="1.4" /><rect x="544.6" y="29.7" width="1.6" height="1.4" /><rect x="544.6" y="41.0" width="1.6" height="1.4" /><rect x="544.6" y="52.4" width="1.6" height="1.4" /><rect x="544.6" y="63.8" width="1.6" height="1.4" /><rect x="544.6" y="86.5" width="1.6" height="1.4" /><rect x="544.6" y="97.8" width="1.6" height="1.4" /><rect x="544.6" y="109.2" width="1.6" height="1.4" /><rect x="544.6" y="120.5" width="1.6" height="1.4" /><rect x="544.6" y="143.2" width="1.6" height="1.4" /><rect x="544.6" y="154.6" width="1.6" height="1.4" /><rect x="544.6" y="165.9" width="1.6" height="1.4" /><rect x="544.6" y="177.3" width="1.6" height="1.4" /><rect x="544.6" y="200.0" width="1.6" height="1.4" /><rect x="544.6" y="211.3" width="1.6" height="1.4" /><rect x="544.6" y="222.7" width="1.6" height="1.4" /><rect x="544.6" y="234.0" width="1.6" height="1.4" /><rect x="544.6" y="256.7" width="1.6" height="1.4" /><rect x="544.6" y="268.1" width="1.6" height="1.4" /><rect x="544.6" y="279.4" width="1.6" height="1.4" /><rect x="544.6" y="290.8" width="1.6" height="1.4" /><rect x="544.6" y="313.5" width="1.6" height="1.4" /><rect x="544.6" y="324.8" width="1.6" height="1.4" /><rect x="544.6" y="336.2" width="1.6" height="1.4" /><rect x="544.6" y="347.5" width="1.6" height="1.4" /><rect x="544.6" y="370.2" width="1.6" height="1.4" /><rect x="544.6" y="381.6" width="1.6" height="1.4" /><rect x="544.6" y="392.9" width="1.6" height="1.4" /><rect x="544.6" y="404.3" width="1.6" height="1.4" /><rect x="544.6" y="426.9" width="1.6" height="1.4" /><rect x="544.6" y="438.3" width="1.6" height="1.4" /><rect x="544.6" y="449.7" width="1.6" height="1.4" /><rect x="544.6" y="461.0" width="1.6" height="1.4" /><rect x="544.6" y="483.7" width="1.6" height="1.4" /><rect x="544.6" y="495.1" width="1.6" height="1.4" /><rect x="544.6" y="506.4" width="1.6" height="1.4" /><rect x="544.6" y="517.8" width="1.6" height="1.4" /><rect x="544.6" y="540.4" width="1.6" height="1.4" /><rect x="544.6" y="551.8" width="1.6" height="1.4" /><rect x="544.6" y="563.1" width="1.6" height="1.4" /><rect x="544.6" y="574.5" width="1.6" height="1.4" /><rect x="631.6" y="29.7" width="1.6" height="1.4" /><rect x="631.6" y="41.0" width="1.6" height="1.4" /><rect x="631.6" y="52.4" width="1.6" height="1.4" /><rect x="631.6" y="63.8" width="1.6" height="1.4" /><rect x="631.6" y="86.5" width="1.6" height="1.4" /><rect x="631.6" y="97.8" width="1.6" height="1.4" /><rect x="631.6" y="109.2" width="1.6" height="1.4" /><rect x="631.6" y="120.5" width="1.6" height="1.4" /><rect x="631.6" y="143.2" width="1.6" height="1.4" /><rect x="631.6" y="154.6" width="1.6" height="1.4" /><rect x="631.6" y="165.9" width="1.6" height="1.4" /><rect x="631.6" y="177.3" width="1.6" height="1.4" /><rect x="631.6" y="200.0" width="1.6" height="1.4" /><rect x="631.6" y="211.3" width="1.6" height="1.4" /><rect x="631.6" y="222.7" width="1.6" height="1.4" /><rect x="631.6" y="234.0" width="1.6" height="1.4" /><rect x="631.6" y="256.7" width="1.6" height="1.4" /><rect x="631.6" y="268.1" width="1.6" height="1.4" /><rect x="631.6" y="279.4" width="1.6" height="1.4" /><rect x="631.6" y="290.8" width="1.6" height="1.4" /><rect x="631.6" y="313.5" width="1.6" height="1.4" /><rect x="631.6" y="324.8" width="1.6" height="1.4" /><rect x="631.6" y="336.2" width="1.6" height="1.4" /><rect x="631.6" y="347.5" width="1.6" height="1.4" /><rect x="631.6" y="370.2" width="1.6" height="1.4" /><rect x="631.6" y="381.6" width="1.6" height="1.4" /><rect x="631.6" y="392.9" width="1.6" height="1.4" /><rect x="631.6" y="404.3" width="1.6" height="1.4" /><rect x="631.6" y="426.9" width="1.6" height="1.4" /><rect x="631.6" y="438.3" width="1.6" height="1.4" /><rect x="631.6" y="449.7" width="1.6" height="1.4" /><rect x="631.6" y="461.0" width="1.6" height="1.4" /><rect x="631.6" y="483.7" width="1.6" height="1.4" /><rect x="631.6" y="495.1" width="1.6" height="1.4" /><rect x="631.6" y="506.4" width="1.6" height="1.4" /><rect x="631.6" y="517.8" width="1.6" height="1.4" /><rect x="631.6" y="540.4" width="1.6" height="1.4" /><rect x="631.6" y="551.8" width="1.6" height="1.4" /><rect x="631.6" y="563.1" width="1.6" height="1.4" /><rect x="631.6" y="574.5" width="1.6" height="1.4" /><rect x="718.6" y="29.7" width="1.6" height="1.4" /><rect x="718.6" y="41.0" width="1.6" height="1.4" /><rect x="718.6" y="52.4" width="1.6" height="1.4" /><rect x="718.6" y="63.8" width="1.6" height="1.4" /><rect x="718.6" y="86.5" width="1.6" height="1.4" /><rect x="718.6" y="97.8" width="1.6" height="1.4" /><rect x="718.6" y="109.2" width="1.6" height="1.4" /><rect x="718.6" y="120.5" width="1.6" height="1.4" /><rect x="718.6" y="143.2" width="1.6" height="1.4" /><rect x="718.6" y="154.6" width="1.6" height="1.4" /><rect x="718.6" y="165.9" width="1.6" height="1.4" /><rect x="718.6" y="177.3" width="1.6" height="1.4" /><rect x="718.6" y="200.0" width="1.6" height="1.4" /><rect x="718.6" y="211.3" width="1.6" height="1.4" /><rect x="718.6" y="222.7" width="1.6" height="1.4" /><rect x="718.6" y="234.0" width="1.6" height="1.4" /><rect x="718.6" y="256.7" width="1.6" height="1.4" /><rect x="718.6" y="268.1" width="1.6" height="1.4" /><rect x="718.6" y="279.4" width="1.6" height="1.4" /><rect x="718.6" y="290.8" width="1.6" height="1.4" /><rect x="718.6" y="313.5" width="1.6" height="1.4" /><rect x="718.6" y="324.8" width="1.6" height="1.4" /><rect x="718.6" y="336.2" width="1.6" height="1.4" /><rect x="718.6" y="347.5" width="1.6" height="1.4" /><rect x="718.6" y="370.2" width="1.6" height="1.4" /><rect x="718.6" y="381.6" width="1.6" height="1.4" /><rect x="718.6" y="392.9" width="1.6" height="1.4" /><rect x="718.6" y="404.3" width="1.6" height="1.4" /><rect x="718.6" y="426.9" width="1.6" height="1.4" /><rect x="718.6" y="438.3" width="1.6" height="1.4" /><rect x="718.6" y="449.7" width="1.6" height="1.4" /><rect x="718.6" y="461.0" width="1.6" height="1.4" /><rect x="718.6" y="483.7" width="1.6" height="1.4" /><rect x="718.6" y="495.1" width="1.6" height="1.4" /><rect x="718.6" y="506.4" width="1.6" height="1.4" /><rect x="718.6" y="517.8" width="1.6" height="1.4" /><rect x="718.6" y="540.4" width="1.6" height="1.4" /><rect x="718.6" y="551.8" width="1.6" height="1.4" /><rect x="718.6" y="563.1" width="1.6" height="1.4" /><rect x="718.6" y="574.5" width="1.6" height="1.4" /><rect x="805.6" y="29.7" width="1.6" height="1.4" /><rect x="805.6" y="41.0" width="1.6" height="1.4" /><rect x="805.6" y="52.4" width="1.6" height="1.4" /><rect x="805.6" y="63.8" width="1.6" height="1.4" /><rect x="805.6" y="86.5" width="1.6" height="1.4" /><rect x="805.6" y="97.8" width="1.6" height="1.4" /><rect x="805.6" y="109.2" width="1.6" height="1.4" /><rect x="805.6" y="120.5" width="1.6" height="1.4" /><rect x="805.6" y="143.2" width="1.6" height="1.4" /><rect x="805.6" y="154.6" width="1.6" height="1.4" /><rect x="805.6" y="165.9" width="1.6" height="1.4" /><rect x="805.6" y="177.3" width="1.6" height="1.4" /><rect x="805.6" y="200.0" width="1.6" height="1.4" /><rect x="805.6" y="211.3" width="1.6" height="1.4" /><rect x="805.6" y="222.7" width="1.6" height="1.4" /><rect x="805.6" y="234.0" width="1.6" height="1.4" /><rect x="805.6" y="256.7" width="1.6" height="1.4" /><rect x="805.6" y="268.1" width="1.6" height="1.4" /><rect x="805.6" y="279.4" width="1.6" height="1.4" /><rect x="805.6" y="290.8" width="1.6" height="1.4" /><rect x="805.6" y="313.5" width="1.6" height="1.4" /><rect x="805.6" y="324.8" width="1.6" height="1.4" /><rect x="805.6" y="336.2" width="1.6" height="1.4" /><rect x="805.6" y="347.5" width="1.6" height="1.4" /><rect x="805.6" y="370.2" width="1.6" height="1.4" /><rect x="805.6" y="381.6" width="1.6" height="1.4" /><rect x="805.6" y="392.9" width="1.6" height="1.4" /><rect x="805.6" y="404.3" width="1.6" height="1.4" /><rect x="805.6" y="426.9" width="1.6" height="1.4" /><rect x="805.6" y="438.3" width="1.6" height="1.4" /><rect x="805.6" y="449.7" width="1.6" height="1.4" /><rect x="805.6" y="461.0" width="1.6" height="1.4" /><rect x="805.6" y="483.7" width="1.6" height="1.4" /><rect x="805.6" y="495.1" width="1.6" height="1.4" /><rect x="805.6" y="506.4" width="1.6" height="1.4" /><rect x="805.6" y="517.8" width="1.6" height="1.4" /><rect x="805.6" y="540.4" width="1.6" height="1.4" /><rect x="805.6" y="551.8" width="1.6" height="1.4" /><rect x="805.6" y="563.1" width="1.6" height="1.4" /><rect x="805.6" y="574.5" width="1.6" height="1.4" /></g>
<g stroke="#4a4a4e" stroke-width="1"><line x1="23" y1="302.8" x2="893" y2="302.8"/><line x1="458.4" y1="20" x2="458.4" y2="586"/><line x1="23.4" y1="298.3" x2="23.4" y2="307.3"/><line x1="40.8" y1="299.8" x2="40.8" y2="305.8"/><line x1="58.2" y1="299.8" x2="58.2" y2="305.8"/><line x1="75.6" y1="299.8" x2="75.6" y2="305.8"/><line x1="93.0" y1="299.8" x2="93.0" y2="305.8"/><line x1="110.4" y1="298.3" x2="110.4" y2="307.3"/><line x1="127.8" y1="299.8" x2="127.8" y2="305.8"/><line x1="145.2" y1="299.8" x2="145.2" y2="305.8"/><line x1="162.6" y1="299.8" x2="162.6" y2="305.8"/><line x1="180.0" y1="299.8" x2="180.0" y2="305.8"/><line x1="197.4" y1="298.3" x2="197.4" y2="307.3"/><line x1="214.8" y1="299.8" x2="214.8" y2="305.8"/><line x1="232.2" y1="299.8" x2="232.2" y2="305.8"/><line x1="249.6" y1="299.8" x2="249.6" y2="305.8"/><line x1="267.0" y1="299.8" x2="267.0" y2="305.8"/><line x1="284.4" y1="298.3" x2="284.4" y2="307.3"/><line x1="301.8" y1="299.8" x2="301.8" y2="305.8"/><line x1="319.2" y1="299.8" x2="319.2" y2="305.8"/><line x1="336.6" y1="299.8" x2="336.6" y2="305.8"/><line x1="354.0" y1="299.8" x2="354.0" y2="305.8"/><line x1="371.4" y1="298.3" x2="371.4" y2="307.3"/><line x1="388.8" y1="299.8" x2="388.8" y2="305.8"/><line x1="406.2" y1="299.8" x2="406.2" y2="305.8"/><line x1="423.6" y1="299.8" x2="423.6" y2="305.8"/><line x1="441.0" y1="299.8" x2="441.0" y2="305.8"/><line x1="458.4" y1="298.3" x2="458.4" y2="307.3"/><line x1="475.8" y1="299.8" x2="475.8" y2="305.8"/><line x1="493.2" y1="299.8" x2="493.2" y2="305.8"/><line x1="510.6" y1="299.8" x2="510.6" y2="305.8"/><line x1="528.0" y1="299.8" x2="528.0" y2="305.8"/><line x1="545.4" y1="298.3" x2="545.4" y2="307.3"/><line x1="562.8" y1="299.8" x2="562.8" y2="305.8"/><line x1="580.2" y1="299.8" x2="580.2" y2="305.8"/><line x1="597.6" y1="299.8" x2="597.6" y2="305.8"/><line x1="615.0" y1="299.8" x2="615.0" y2="305.8"/><line x1="632.4" y1="298.3" x2="632.4" y2="307.3"/><line x1="649.8" y1="299.8" x2="649.8" y2="305.8"/><line x1="667.2" y1="299.8" x2="667.2" y2="305.8"/><line x1="684.6" y1="299.8" x2="684.6" y2="305.8"/><line x1="702.0" y1="299.8" x2="702.0" y2="305.8"/><line x1="719.4" y1="298.3" x2="719.4" y2="307.3"/><line x1="736.8" y1="299.8" x2="736.8" y2="305.8"/><line x1="754.2" y1="299.8" x2="754.2" y2="305.8"/><line x1="771.6" y1="299.8" x2="771.6" y2="305.8"/><line x1="789.0" y1="299.8" x2="789.0" y2="305.8"/><line x1="806.4" y1="298.3" x2="806.4" y2="307.3"/><line x1="823.8" y1="299.8" x2="823.8" y2="305.8"/><line x1="841.2" y1="299.8" x2="841.2" y2="305.8"/><line x1="858.6" y1="299.8" x2="858.6" y2="305.8"/><line x1="876.0" y1="299.8" x2="876.0" y2="305.8"/><line x1="893.4" y1="298.3" x2="893.4" y2="307.3"/><line x1="453.4" y1="19.1" x2="463.4" y2="19.1"/><line x1="454.9" y1="30.4" x2="461.9" y2="30.4"/><line x1="454.9" y1="41.8" x2="461.9" y2="41.8"/><line x1="454.9" y1="53.1" x2="461.9" y2="53.1"/><line x1="454.9" y1="64.5" x2="461.9" y2="64.5"/><line x1="453.4" y1="75.8" x2="463.4" y2="75.8"/><line x1="454.9" y1="87.2" x2="461.9" y2="87.2"/><line x1="454.9" y1="98.5" x2="461.9" y2="98.5"/><line x1="454.9" y1="109.9" x2="461.9" y2="109.9"/><line x1="454.9" y1="121.2" x2="461.9" y2="121.2"/><line x1="453.4" y1="132.6" x2="463.4" y2="132.6"/><line x1="454.9" y1="143.9" x2="461.9" y2="143.9"/><line x1="454.9" y1="155.2" x2="461.9" y2="155.2"/><line x1="454.9" y1="166.6" x2="461.9" y2="166.6"/><line x1="454.9" y1="178.0" x2="461.9" y2="178.0"/><line x1="453.4" y1="189.3" x2="463.4" y2="189.3"/><line x1="454.9" y1="200.7" x2="461.9" y2="200.7"/><line x1="454.9" y1="212.0" x2="461.9" y2="212.0"/><line x1="454.9" y1="223.4" x2="461.9" y2="223.4"/><line x1="454.9" y1="234.7" x2="461.9" y2="234.7"/><line x1="453.4" y1="246.1" x2="463.4" y2="246.1"/><line x1="454.9" y1="257.4" x2="461.9" y2="257.4"/><line x1="454.9" y1="268.8" x2="461.9" y2="268.8"/><line x1="454.9" y1="280.1" x2="461.9" y2="280.1"/><line x1="454.9" y1="291.4" x2="461.9" y2="291.4"/><line x1="453.4" y1="302.8" x2="463.4" y2="302.8"/><line x1="454.9" y1="314.2" x2="461.9" y2="314.2"/><line x1="454.9" y1="325.5" x2="461.9" y2="325.5"/><line x1="454.9" y1="336.9" x2="461.9" y2="336.9"/><line x1="454.9" y1="348.2" x2="461.9" y2="348.2"/><line x1="453.4" y1="359.6" x2="463.4" y2="359.6"/><line x1="454.9" y1="370.9" x2="461.9" y2="370.9"/><line x1="454.9" y1="382.2" x2="461.9" y2="382.2"/><line x1="454.9" y1="393.6" x2="461.9" y2="393.6"/><line x1="454.9" y1="405.0" x2="461.9" y2="405.0"/><line x1="453.4" y1="416.3" x2="463.4" y2="416.3"/><line x1="454.9" y1="427.6" x2="461.9" y2="427.6"/><line x1="454.9" y1="439.0" x2="461.9" y2="439.0"/><line x1="454.9" y1="450.4" x2="461.9" y2="450.4"/><line x1="454.9" y1="461.7" x2="461.9" y2="461.7"/><line x1="453.4" y1="473.1" x2="463.4" y2="473.1"/><line x1="454.9" y1="484.4" x2="461.9" y2="484.4"/><line x1="454.9" y1="495.8" x2="461.9" y2="495.8"/><line x1="454.9" y1="507.1" x2="461.9" y2="507.1"/><line x1="454.9" y1="518.5" x2="461.9" y2="518.5"/><line x1="453.4" y1="529.8" x2="463.4" y2="529.8"/><line x1="454.9" y1="541.1" x2="461.9" y2="541.1"/><line x1="454.9" y1="552.5" x2="461.9" y2="552.5"/><line x1="454.9" y1="563.9" x2="461.9" y2="563.9"/><line x1="454.9" y1="575.2" x2="461.9" y2="575.2"/><line x1="453.4" y1="586.5" x2="463.4" y2="586.5"/></g>
<g stroke="#30343f" stroke-width="1"><line x1="40.8" y1="20" x2="40.8" y2="23.0"/><line x1="40.8" y1="586" x2="40.8" y2="583.0"/><line x1="58.2" y1="20" x2="58.2" y2="23.0"/><line x1="58.2" y1="586" x2="58.2" y2="583.0"/><line x1="75.6" y1="20" x2="75.6" y2="23.0"/><line x1="75.6" y1="586" x2="75.6" y2="583.0"/><line x1="93.0" y1="20" x2="93.0" y2="23.0"/><line x1="93.0" y1="586" x2="93.0" y2="583.0"/><line x1="110.4" y1="20" x2="110.4" y2="25.0"/><line x1="110.4" y1="586" x2="110.4" y2="581.0"/><line x1="127.8" y1="20" x2="127.8" y2="23.0"/><line x1="127.8" y1="586" x2="127.8" y2="583.0"/><line x1="145.2" y1="20" x2="145.2" y2="23.0"/><line x1="145.2" y1="586" x2="145.2" y2="583.0"/><line x1="162.6" y1="20" x2="162.6" y2="23.0"/><line x1="162.6" y1="586" x2="162.6" y2="583.0"/><line x1="180.0" y1="20" x2="180.0" y2="23.0"/><line x1="180.0" y1="586" x2="180.0" y2="583.0"/><line x1="197.4" y1="20" x2="197.4" y2="25.0"/><line x1="197.4" y1="586" x2="197.4" y2="581.0"/><line x1="214.8" y1="20" x2="214.8" y2="23.0"/><line x1="214.8" y1="586" x2="214.8" y2="583.0"/><line x1="232.2" y1="20" x2="232.2" y2="23.0"/><line x1="232.2" y1="586" x2="232.2" y2="583.0"/><line x1="249.6" y1="20" x2="249.6" y2="23.0"/><line x1="249.6" y1="586" x2="249.6" y2="583.0"/><line x1="267.0" y1="20" x2="267.0" y2="23.0"/><line x1="267.0" y1="586" x2="267.0" y2="583.0"/><line x1="284.4" y1="20" x2="284.4" y2="25.0"/><line x1="284.4" y1="586" x2="284.4" y2="581.0"/><line x1="301.8" y1="20" x2="301.8" y2="23.0"/><line x1="301.8" y1="586" x2="301.8" y2="583.0"/><line x1="319.2" y1="20" x2="319.2" y2="23.0"/><line x1="319.2" y1="586" x2="319.2" y2="583.0"/><line x1="336.6" y1="20" x2="336.6" y2="23.0"/><line x1="336.6" y1="586" x2="336.6" y2="583.0"/><line x1="354.0" y1="20" x2="354.0" y2="23.0"/><line x1="354.0" y1="586" x2="354.0" y2="583.0"/><line x1="371.4" y1="20" x2="371.4" y2="25.0"/><line x1="371.4" y1="586" x2="371.4" y2="581.0"/><line x1="388.8" y1="20" x2="388.8" y2="23.0"/><line x1="388.8" y1="586" x2="388.8" y2="583.0"/><line x1="406.2" y1="20" x2="406.2" y2="23.0"/><line x1="406.2" y1="586" x2="406.2" y2="583.0"/><line x1="423.6" y1="20" x2="423.6" y2="23.0"/><line x1="423.6" y1="586" x2="423.6" y2="583.0"/><line x1="441.0" y1="20" x2="441.0" y2="23.0"/><line x1="441.0" y1="586" x2="441.0" y2="583.0"/><line x1="458.4" y1="20" x2="458.4" y2="25.0"/><line x1="458.4" y1="586" x2="458.4" y2="581.0"/><line x1="475.8" y1="20" x2="475.8" y2="23.0"/><line x1="475.8" y1="586" x2="475.8" y2="583.0"/><line x1="493.2" y1="20" x2="493.2" y2="23.0"/><line x1="493.2" y1="586" x2="493.2" y2="583.0"/><line x1="510.6" y1="20" x2="510.6" y2="23.0"/><line x1="510.6" y1="586" x2="510.6" y2="583.0"/><line x1="528.0" y1="20" x2="528.0" y2="23.0"/><line x1="528.0" y1="586" x2="528.0" y2="583.0"/><line x1="545.4" y1="20" x2="545.4" y2="25.0"/><line x1="545.4" y1="586" x2="545.4" y2="581.0"/><line x1="562.8" y1="20" x2="562.8" y2="23.0"/><line x1="562.8" y1="586" x2="562.8" y2="583.0"/><line x1="580.2" y1="20" x2="580.2" y2="23.0"/><line x1="580.2" y1="586" x2="580.2" y2="583.0"/><line x1="597.6" y1="20" x2="597.6" y2="23.0"/><line x1="597.6" y1="586" x2="597.6" y2="583.0"/><line x1="615.0" y1="20" x2="615.0" y2="23.0"/><line x1="615.0" y1="586" x2="615.0" y2="583.0"/><line x1="632.4" y1="20" x2="632.4" y2="25.0"/><line x1="632.4" y1="586" x2="632.4" y2="581.0"/><line x1="649.8" y1="20" x2="649.8" y2="23.0"/><line x1="649.8" y1="586" x2="649.8" y2="583.0"/><line x1="667.2" y1="20" x2="667.2" y2="23.0"/><line x1="667.2" y1="586" x2="667.2" y2="583.0"/><line x1="684.6" y1="20" x2="684.6" y2="23.0"/><line x1="684.6" y1="586" x2="684.6" y2="583.0"/><line x1="702.0" y1="20" x2="702.0" y2="23.0"/><line x1="702.0" y1="586" x2="702.0" y2="583.0"/><line x1="719.4" y1="20" x2="719.4" y2="25.0"/><line x1="719.4" y1="586" x2="719.4" y2="581.0"/><line x1="736.8" y1="20" x2="736.8" y2="23.0"/><line x1="736.8" y1="586" x2="736.8" y2="583.0"/><line x1="754.2" y1="20" x2="754.2" y2="23.0"/><line x1="754.2" y1="586" x2="754.2" y2="583.0"/><line x1="771.6" y1="20" x2="771.6" y2="23.0"/><line x1="771.6" y1="586" x2="771.6" y2="583.0"/><line x1="789.0" y1="20" x2="789.0" y2="23.0"/><line x1="789.0" y1="586" x2="789.0" y2="583.0"/><line x1="806.4" y1="20" x2="806.4" y2="25.0"/><line x1="806.4" y1="586" x2="806.4" y2="581.0"/><line x1="823.8" y1="20" x2="823.8" y2="23.0"/><line x1="823.8" y1="586" x2="823.8" y2="583.0"/><line x1="841.2" y1="20" x2="841.2" y2="23.0"/><line x1="841.2" y1="586" x2="841.2" y2="583.0"/><line x1="858.6" y1="20" x2="858.6" y2="23.0"/><line x1="858.6" y1="586" x2="858.6" y2="583.0"/><line x1="876.0" y1="20" x2="876.0" y2="23.0"/><line x1="876.0" y1="586" x2="876.0" y2="583.0"/><line x1="23" y1="30.4" x2="26.0" y2="30.4"/><line x1="893" y1="30.4" x2="890.0" y2="30.4"/><line x1="23" y1="41.8" x2="26.0" y2="41.8"/><line x1="893" y1="41.8" x2="890.0" y2="41.8"/><line x1="23" y1="53.1" x2="26.0" y2="53.1"/><line x1="893" y1="53.1" x2="890.0" y2="53.1"/><line x1="23" y1="64.5" x2="26.0" y2="64.5"/><line x1="893" y1="64.5" x2="890.0" y2="64.5"/><line x1="23" y1="75.8" x2="28.0" y2="75.8"/><line x1="893" y1="75.8" x2="888.0" y2="75.8"/><line x1="23" y1="87.2" x2="26.0" y2="87.2"/><line x1="893" y1="87.2" x2="890.0" y2="87.2"/><line x1="23" y1="98.5" x2="26.0" y2="98.5"/><line x1="893" y1="98.5" x2="890.0" y2="98.5"/><line x1="23" y1="109.9" x2="26.0" y2="109.9"/><line x1="893" y1="109.9" x2="890.0" y2="109.9"/><line x1="23" y1="121.2" x2="26.0" y2="121.2"/><line x1="893" y1="121.2" x2="890.0" y2="121.2"/><line x1="23" y1="132.6" x2="28.0" y2="132.6"/><line x1="893" y1="132.6" x2="888.0" y2="132.6"/><line x1="23" y1="143.9" x2="26.0" y2="143.9"/><line x1="893" y1="143.9" x2="890.0" y2="143.9"/><line x1="23" y1="155.2" x2="26.0" y2="155.2"/><line x1="893" y1="155.2" x2="890.0" y2="155.2"/><line x1="23" y1="166.6" x2="26.0" y2="166.6"/><line x1="893" y1="166.6" x2="890.0" y2="166.6"/><line x1="23" y1="178.0" x2="26.0" y2="178.0"/><line x1="893" y1="178.0" x2="890.0" y2="178.0"/><line x1="23" y1="189.3" x2="28.0" y2="189.3"/><line x1="893" y1="189.3" x2="888.0" y2="189.3"/><line x1="23" y1="200.7" x2="26.0" y2="200.7"/><line x1="893" y1="200.7" x2="890.0" y2="200.7"/><line x1="23" y1="212.0" x2="26.0" y2="212.0"/><line x1="893" y1="212.0" x2="890.0" y2="212.0"/><line x1="23" y1="223.4" x2="26.0" y2="223.4"/><line x1="893" y1="223.4" x2="890.0" y2="223.4"/><line x1="23" y1="234.7" x2="26.0" y2="234.7"/><line x1="893" y1="234.7" x2="890.0" y2="234.7"/><line x1="23" y1="246.1" x2="28.0" y2="246.1"/><line x1="893" y1="246.1" x2="888.0" y2="246.1"/><line x1="23" y1="257.4" x2="26.0" y2="257.4"/><line x1="893" y1="257.4" x2="890.0" y2="257.4"/><line x1="23" y1="268.8" x2="26.0" y2="268.8"/><line x1="893" y1="268.8" x2="890.0" y2="268.8"/><line x1="23" y1="280.1" x2="26.0" y2="280.1"/><line x1="893" y1="280.1" x2="890.0" y2="280.1"/><line x1="23" y1="291.4" x2="26.0" y2="291.4"/><line x1="893" y1="291.4" x2="890.0" y2="291.4"/><line x1="23" y1="302.8" x2="28.0" y2="302.8"/><line x1="893" y1="302.8" x2="888.0" y2="302.8"/><line x1="23" y1="314.2" x2="26.0" y2="314.2"/><line x1="893" y1="314.2" x2="890.0" y2="314.2"/><line x1="23" y1="325.5" x2="26.0" y2="325.5"/><line x1="893" y1="325.5" x2="890.0" y2="325.5"/><line x1="23" y1="336.9" x2="26.0" y2="336.9"/><line x1="893" y1="336.9" x2="890.0" y2="336.9"/><line x1="23" y1="348.2" x2="26.0" y2="348.2"/><line x1="893" y1="348.2" x2="890.0" y2="348.2"/><line x1="23" y1="359.6" x2="28.0" y2="359.6"/><line x1="893" y1="359.6" x2="888.0" y2="359.6"/><line x1="23" y1="370.9" x2="26.0" y2="370.9"/><line x1="893" y1="370.9" x2="890.0" y2="370.9"/><line x1="23" y1="382.2" x2="26.0" y2="382.2"/><line x1="893" y1="382.2" x2="890.0" y2="382.2"/><line x1="23" y1="393.6" x2="26.0" y2="393.6"/><line x1="893" y1="393.6" x2="890.0" y2="393.6"/><line x1="23" y1="405.0" x2="26.0" y2="405.0"/><line x1="893" y1="405.0" x2="890.0" y2="405.0"/><line x1="23" y1="416.3" x2="28.0" y2="416.3"/><line x1="893" y1="416.3" x2="888.0" y2="416.3"/><line x1="23" y1="427.6" x2="26.0" y2="427.6"/><line x1="893" y1="427.6" x2="890.0" y2="427.6"/><line x1="23" y1="439.0" x2="26.0" y2="439.0"/><line x1="893" y1="439.0" x2="890.0" y2="439.0"/><line x1="23" y1="450.4" x2="26.0" y2="450.4"/><line x1="893" y1="450.4" x2="890.0" y2="450.4"/><line x1="23" y1="461.7" x2="26.0" y2="461.7"/><line x1="893" y1="461.7" x2="890.0" y2="461.7"/><line x1="23" y1="473.1" x2="28.0" y2="473.1"/><line x1="893" y1="473.1" x2="888.0" y2="473.1"/><line x1="23" y1="484.4" x2="26.0" y2="484.4"/><line x1="893" y1="484.4" x2="890.0" y2="484.4"/><line x1="23" y1="495.8" x2="26.0" y2="495.8"/><line x1="893" y1="495.8" x2="890.0" y2="495.8"/><line x1="23" y1="507.1" x2="26.0" y2="507.1"/><line x1="893" y1="507.1" x2="890.0" y2="507.1"/><line x1="23" y1="518.5" x2="26.0" y2="518.5"/><line x1="893" y1="518.5" x2="890.0" y2="518.5"/><line x1="23" y1="529.8" x2="28.0" y2="529.8"/><line x1="893" y1="529.8" x2="888.0" y2="529.8"/><line x1="23" y1="541.1" x2="26.0" y2="541.1"/><line x1="893" y1="541.1" x2="890.0" y2="541.1"/><line x1="23" y1="552.5" x2="26.0" y2="552.5"/><line x1="893" y1="552.5" x2="890.0" y2="552.5"/><line x1="23" y1="563.9" x2="26.0" y2="563.9"/><line x1="893" y1="563.9" x2="890.0" y2="563.9"/><line x1="23" y1="575.2" x2="26.0" y2="575.2"/><line x1="893" y1="575.2" x2="890.0" y2="575.2"/></g>
<rect x="185.35" y="74.5" width="1.3" height="454.5" fill="#8c8634"/>
<path d="M23.0 527.1 L24.0 527.1 L24.0 526.9 L25.0 526.9 L25.0 527.1 L26.0 527.1 L26.0 526.7 L27.0 526.7 L27.0 525.6 L28.0 525.6 L28.0 527.2 L29.0 527.2 L29.0 526.9 L30.0 526.9 L30.0 526.5 L31.0 526.5 L31.0 527.1 L32.0 527.1 L32.0 527.5 L33.0 527.5 L33.0 526.2 L34.0 526.2 L34.0 526.8 L35.0 526.8 L35.0 527.4 L36.0 527.4 L36.0 526.1 L37.0 526.1 L37.0 527.6 L38.0 527.6 L38.0 527.7 L39.0 527.7 L39.0 525.3 L40.0 525.3 L40.0 527.5 L41.0 527.5 L41.0 527.0 L42.0 527.0 L42.0 527.6 L43.0 527.6 L43.0 526.4 L44.0 526.4 L44.0 527.1 L45.0 527.1 L45.0 525.7 L46.0 525.7 L46.0 524.6 L47.0 524.6 L47.0 527.0 L48.0 527.0 L48.0 527.3 L49.0 527.3 L49.0 525.7 L50.0 525.7 L50.0 524.9 L51.0 524.9 L51.0 526.9 L52.0 526.9 L52.0 526.7 L53.0 526.7 L53.0 527.3 L54.0 527.3 L54.0 526.9 L55.0 526.9 L55.0 526.6 L56.0 526.6 L56.0 526.4 L57.0 526.4 L57.0 526.6 L58.0 526.6 L58.0 526.5 L59.0 526.5 L59.0 525.8 L60.0 525.8 L60.0 526.7 L61.0 526.7 L61.0 524.3 L62.0 524.3 L62.0 525.8 L63.0 525.8 L63.0 526.6 L64.0 526.6 L64.0 524.7 L65.0 524.7 L65.0 526.4 L66.0 526.4 L66.0 524.1 L67.0 524.1 L67.0 524.7 L68.0 524.7 L68.0 524.7 L69.0 524.7 L69.0 526.1 L70.0 526.1 L70.0 526.3 L71.0 526.3 L71.0 526.1 L72.0 526.1 L72.0 526.8 L73.0 526.8 L73.0 526.6 L74.0 526.6 L74.0 526.7 L75.0 526.7 L75.0 523.7 L76.0 523.7 L76.0 524.2 L77.0 524.2 L77.0 527.6 L78.0 527.6 L78.0 527.4 L79.0 527.4 L79.0 524.4 L80.0 524.4 L80.0 525.6 L81.0 525.6 L81.0 526.9 L82.0 526.9 L82.0 527.1 L83.0 527.1 L83.0 527.1 L84.0 527.1 L84.0 526.9 L85.0 526.9 L85.0 526.9 L86.0 526.9 L86.0 525.7 L87.0 525.7 L87.0 524.7 L88.0 524.7 L88.0 524.2 L89.0 524.2 L89.0 524.3 L90.0 524.3 L90.0 525.5 L91.0 525.5 L91.0 527.0 L92.0 527.0 L92.0 527.4 L93.0 527.4 L93.0 524.7 L94.0 524.7 L94.0 526.2 L95.0 526.2 L95.0 526.4 L96.0 526.4 L96.0 526.7 L97.0 526.7 L97.0 524.3 L98.0 524.3 L98.0 527.0 L99.0 527.0 L99.0 527.2 L100.0 527.2 L100.0 526.9 L101.0 526.9 L101.0 526.9 L102.0 526.9 L102.0 526.6 L103.0 526.6 L103.0 527.0 L104.0 527.0 L104.0 526.4 L105.0 526.4 L105.0 527.3 L106.0 527.3 L106.0 525.0 L107.0 525.0 L107.0 526.5 L108.0 526.5 L108.0 525.5 L109.0 525.5 L109.0 526.2 L110.0 526.2 L110.0 526.7 L111.0 526.7 L111.0 525.3 L112.0 525.3 L112.0 527.0 L113.0 527.0 L113.0 526.5 L114.0 526.5 L114.0 526.6 L115.0 526.6 L115.0 527.3 L116.0 527.3 L116.0 524.5 L117.0 524.5 L117.0 526.8 L118.0 526.8 L118.0 526.0 L119.0 526.0 L119.0 526.3 L120.0 526.3 L120.0 526.5 L121.0 526.5 L121.0 526.2 L122.0 526.2 L122.0 524.7 L123.0 524.7 L123.0 526.8 L124.0 526.8 L124.0 526.9 L125.0 526.9 L125.0 527.4 L126.0 527.4 L126.0 527.2 L127.0 527.2 L127.0 527.7 L128.0 527.7 L128.0 526.9 L129.0 526.9 L129.0 527.8 L130.0 527.8 L130.0 525.5 L131.0 525.5 L131.0 524.6 L132.0 524.6 L132.0 526.1 L133.0 526.1 L133.0 525.2 L134.0 525.2 L134.0 527.2 L135.0 527.2 L135.0 526.4 L136.0 526.4 L136.0 527.5 L137.0 527.5 L137.0 526.8 L138.0 526.8 L138.0 526.8 L139.0 526.8 L139.0 527.4 L140.0 527.4 L140.0 527.0 L141.0 527.0 L141.0 526.5 L142.0 526.5 L142.0 527.3 L143.0 527.3 L143.0 527.2 L144.0 527.2 L144.0 527.5 L145.0 527.5 L145.0 527.1 L146.0 527.1 L146.0 527.5 L147.0 527.5 L147.0 527.2 L148.0 527.2 L148.0 527.4 L149.0 527.4 L149.0 527.0 L150.0 527.0 L150.0 525.7 L151.0 525.7 L151.0 527.4 L152.0 527.4 L152.0 527.6 L153.0 527.6 L153.0 527.8 L154.0 527.8 L154.0 527.1 L155.0 527.1 L155.0 526.6 L156.0 526.6 L156.0 527.4 L157.0 527.4 L157.0 527.7 L158.0 527.7 L158.0 525.2 L159.0 525.2 L159.0 527.6 L160.0 527.6 L160.0 525.4 L161.0 525.4 L161.0 527.5 L162.0 527.5 L162.0 526.9 L163.0 526.9 L163.0 527.7 L164.0 527.7 L164.0 526.8 L165.0 526.8 L165.0 526.6 L166.0 526.6 L166.0 526.9 L167.0 526.9 L167.0 527.4 L168.0 527.4 L168.0 524.6 L169.0 524.6 L169.0 526.6 L170.0 526.6 L170.0 527.2 L171.0 527.2 L171.0 526.8 L172.0 526.8 L172.0 524.8 L173.0 524.8 L173.0 525.4 L174.0 525.4 L174.0 527.9 L175.0 527.9 L175.0 525.4 L176.0 525.4 L176.0 527.2 L177.0 527.2 L177.0 526.9 L178.0 526.9 L178.0 527.1 L179.0 527.1 L179.0 526.9 L180.0 526.9 L180.0 527.0 L181.0 527.0 L181.0 526.9 L182.0 526.9 L182.0 525.8 L183.0 525.8 L183.0 527.1 L184.0 527.1 L184.0 527.5 L185.0 527.5 L185.0 527.8 L186.0 527.8 L186.0 531.4 L185.0 531.4 L185.0 531.3 L184.0 531.3 L184.0 531.3 L183.0 531.3 L183.0 532.2 L182.0 532.2 L182.0 530.5 L181.0 530.5 L181.0 531.9 L180.0 531.9 L180.0 530.3 L179.0 530.3 L179.0 530.8 L178.0 530.8 L178.0 530.7 L177.0 530.7 L177.0 533.8 L176.0 533.8 L176.0 530.9 L175.0 530.9 L175.0 533.3 L174.0 533.3 L174.0 531.1 L173.0 531.1 L173.0 531.3 L172.0 531.3 L172.0 530.8 L171.0 530.8 L171.0 531.1 L170.0 531.1 L170.0 531.7 L169.0 531.7 L169.0 534.6 L168.0 534.6 L168.0 530.9 L167.0 530.9 L167.0 531.4 L166.0 531.4 L166.0 531.5 L165.0 531.5 L165.0 531.2 L164.0 531.2 L164.0 533.5 L163.0 533.5 L163.0 533.8 L162.0 533.8 L162.0 530.9 L161.0 530.9 L161.0 531.2 L160.0 531.2 L160.0 532.8 L159.0 532.8 L159.0 531.0 L158.0 531.0 L158.0 533.7 L157.0 533.7 L157.0 533.5 L156.0 533.5 L156.0 531.5 L155.0 531.5 L155.0 531.3 L154.0 531.3 L154.0 531.0 L153.0 531.0 L153.0 531.4 L152.0 531.4 L152.0 531.0 L151.0 531.0 L151.0 534.5 L150.0 534.5 L150.0 532.7 L149.0 532.7 L149.0 531.2 L148.0 531.2 L148.0 532.4 L147.0 532.4 L147.0 531.5 L146.0 531.5 L146.0 531.1 L145.0 531.1 L145.0 531.3 L144.0 531.3 L144.0 531.4 L143.0 531.4 L143.0 530.7 L142.0 530.7 L142.0 530.4 L141.0 530.4 L141.0 532.1 L140.0 532.1 L140.0 533.5 L139.0 533.5 L139.0 533.3 L138.0 533.3 L138.0 530.9 L137.0 530.9 L137.0 533.5 L136.0 533.5 L136.0 530.8 L135.0 530.8 L135.0 532.6 L134.0 532.6 L134.0 530.8 L133.0 530.8 L133.0 530.8 L132.0 530.8 L132.0 530.8 L131.0 530.8 L131.0 531.5 L130.0 531.5 L130.0 531.1 L129.0 531.1 L129.0 531.3 L128.0 531.3 L128.0 533.6 L127.0 533.6 L127.0 532.5 L126.0 532.5 L126.0 532.4 L125.0 532.4 L125.0 532.8 L124.0 532.8 L124.0 534.7 L123.0 534.7 L123.0 530.3 L122.0 530.3 L122.0 531.6 L121.0 531.6 L121.0 530.5 L120.0 530.5 L120.0 532.9 L119.0 532.9 L119.0 532.7 L118.0 532.7 L118.0 531.6 L117.0 531.6 L117.0 530.5 L116.0 530.5 L116.0 531.8 L115.0 531.8 L115.0 530.9 L114.0 530.9 L114.0 530.9 L113.0 530.9 L113.0 530.6 L112.0 530.6 L112.0 530.5 L111.0 530.5 L111.0 531.1 L110.0 531.1 L110.0 530.5 L109.0 530.5 L109.0 532.9 L108.0 532.9 L108.0 530.9 L107.0 530.9 L107.0 533.1 L106.0 533.1 L106.0 530.6 L105.0 530.6 L105.0 530.2 L104.0 530.2 L104.0 530.7 L103.0 530.7 L103.0 531.1 L102.0 531.1 L102.0 532.0 L101.0 532.0 L101.0 531.7 L100.0 531.7 L100.0 532.7 L99.0 532.7 L99.0 530.4 L98.0 530.4 L98.0 530.2 L97.0 530.2 L97.0 530.2 L96.0 530.2 L96.0 530.9 L95.0 530.9 L95.0 530.5 L94.0 530.5 L94.0 530.7 L93.0 530.7 L93.0 530.8 L92.0 530.8 L92.0 532.6 L91.0 532.6 L91.0 533.6 L90.0 533.6 L90.0 531.1 L89.0 531.1 L89.0 532.6 L88.0 532.6 L88.0 531.3 L87.0 531.3 L87.0 530.6 L86.0 530.6 L86.0 530.3 L85.0 530.3 L85.0 530.5 L84.0 530.5 L84.0 530.8 L83.0 530.8 L83.0 530.7 L82.0 530.7 L82.0 532.8 L81.0 532.8 L81.0 530.9 L80.0 530.9 L80.0 533.2 L79.0 533.2 L79.0 530.7 L78.0 530.7 L78.0 530.8 L77.0 530.8 L77.0 531.2 L76.0 531.2 L76.0 531.2 L75.0 531.2 L75.0 530.5 L74.0 530.5 L74.0 530.3 L73.0 530.3 L73.0 530.5 L72.0 530.5 L72.0 530.1 L71.0 530.1 L71.0 529.4 L70.0 529.4 L70.0 532.1 L69.0 532.1 L69.0 530.2 L68.0 530.2 L68.0 532.3 L67.0 532.3 L67.0 532.2 L66.0 532.2 L66.0 530.3 L65.0 530.3 L65.0 531.5 L64.0 531.5 L64.0 531.0 L63.0 531.0 L63.0 530.5 L62.0 530.5 L62.0 529.9 L61.0 529.9 L61.0 530.2 L60.0 530.2 L60.0 529.7 L59.0 529.7 L59.0 530.0 L58.0 530.0 L58.0 532.2 L57.0 532.2 L57.0 530.7 L56.0 530.7 L56.0 530.3 L55.0 530.3 L55.0 531.4 L54.0 531.4 L54.0 531.1 L53.0 531.1 L53.0 531.0 L52.0 531.0 L52.0 530.7 L51.0 530.7 L51.0 531.9 L50.0 531.9 L50.0 530.8 L49.0 530.8 L49.0 531.1 L48.0 531.1 L48.0 531.0 L47.0 531.0 L47.0 532.4 L46.0 532.4 L46.0 530.9 L45.0 530.9 L45.0 533.2 L44.0 533.2 L44.0 532.4 L43.0 532.4 L43.0 531.0 L42.0 531.0 L42.0 530.7 L41.0 530.7 L41.0 531.4 L40.0 531.4 L40.0 533.0 L39.0 533.0 L39.0 532.6 L38.0 532.6 L38.0 531.3 L37.0 531.3 L37.0 531.5 L36.0 531.5 L36.0 533.6 L35.0 533.6 L35.0 533.7 L34.0 533.7 L34.0 531.3 L33.0 531.3 L33.0 531.4 L32.0 531.4 L32.0 533.3 L31.0 533.3 L31.0 534.0 L30.0 534.0 L30.0 530.9 L29.0 530.9 L29.0 531.2 L28.0 531.2 L28.0 530.7 L27.0 530.7 L27.0 531.8 L26.0 531.8 L26.0 534.1 L25.0 534.1 L25.0 530.9 L24.0 530.9 L24.0 530.9 L23.0 530.9Z" fill="#c4bc2c"/>
<path d="M185.5 96.2 L186.5 96.2 L186.5 97.8 L187.5 97.8 L187.5 94.8 L188.5 94.8 L188.5 98.3 L189.5 98.3 L189.5 98.4 L190.5 98.4 L190.5 98.6 L191.5 98.6 L191.5 99.0 L192.5 99.0 L192.5 95.5 L193.5 95.5 L193.5 99.0 L194.5 99.0 L194.5 98.8 L195.5 98.8 L195.5 98.3 L196.5 98.3 L196.5 99.1 L197.5 99.1 L197.5 97.1 L198.5 97.1 L198.5 99.3 L199.5 99.3 L199.5 95.6 L200.5 95.6 L200.5 98.4 L201.5 98.4 L201.5 95.8 L202.5 95.8 L202.5 96.2 L203.5 96.2 L203.5 98.0 L204.5 98.0 L204.5 99.0 L205.5 99.0 L205.5 98.7 L206.5 98.7 L206.5 96.4 L207.5 96.4 L207.5 98.0 L208.5 98.0 L208.5 98.2 L209.5 98.2 L209.5 98.3 L210.5 98.3 L210.5 98.5 L211.5 98.5 L211.5 99.0 L212.5 99.0 L212.5 97.5 L213.5 97.5 L213.5 97.0 L214.5 97.0 L214.5 96.3 L215.5 96.3 L215.5 98.0 L216.5 98.0 L216.5 97.5 L217.5 97.5 L217.5 96.5 L218.5 96.5 L218.5 96.1 L219.5 96.1 L219.5 94.6 L220.5 94.6 L220.5 98.1 L221.5 98.1 L221.5 98.0 L222.5 98.0 L222.5 97.3 L223.5 97.3 L223.5 97.2 L224.5 97.2 L224.5 98.1 L225.5 98.1 L225.5 97.9 L226.5 97.9 L226.5 95.4 L227.5 95.4 L227.5 95.4 L228.5 95.4 L228.5 97.7 L229.5 97.7 L229.5 96.2 L230.5 96.2 L230.5 98.0 L231.5 98.0 L231.5 97.4 L232.5 97.4 L232.5 95.4 L233.5 95.4 L233.5 95.4 L234.5 95.4 L234.5 97.4 L235.5 97.4 L235.5 98.1 L236.5 98.1 L236.5 93.9 L237.5 93.9 L237.5 97.4 L238.5 97.4 L238.5 97.3 L239.5 97.3 L239.5 97.0 L240.5 97.0 L240.5 96.9 L241.5 96.9 L241.5 98.4 L242.5 98.4 L242.5 98.0 L243.5 98.0 L243.5 97.3 L244.5 97.3 L244.5 97.9 L245.5 97.9 L245.5 98.6 L246.5 98.6 L246.5 98.2 L247.5 98.2 L247.5 98.4 L248.5 98.4 L248.5 98.0 L249.5 98.0 L249.5 97.7 L250.5 97.7 L250.5 97.9 L251.5 97.9 L251.5 97.8 L252.5 97.8 L252.5 98.3 L253.5 98.3 L253.5 98.1 L254.5 98.1 L254.5 97.8 L255.5 97.8 L255.5 98.3 L256.5 98.3 L256.5 96.4 L257.5 96.4 L257.5 97.2 L258.5 97.2 L258.5 97.5 L259.5 97.5 L259.5 97.6 L260.5 97.6 L260.5 97.2 L261.5 97.2 L261.5 98.3 L262.5 98.3 L262.5 97.5 L263.5 97.5 L263.5 95.9 L264.5 95.9 L264.5 98.0 L265.5 98.0 L265.5 98.3 L266.5 98.3 L266.5 95.1 L267.5 95.1 L267.5 98.1 L268.5 98.1 L268.5 98.2 L269.5 98.2 L269.5 98.6 L270.5 98.6 L270.5 97.7 L271.5 97.7 L271.5 98.1 L272.5 98.1 L272.5 97.2 L273.5 97.2 L273.5 97.2 L274.5 97.2 L274.5 96.8 L275.5 96.8 L275.5 98.4 L276.5 98.4 L276.5 97.8 L277.5 97.8 L277.5 97.7 L278.5 97.7 L278.5 98.3 L279.5 98.3 L279.5 98.1 L280.5 98.1 L280.5 97.7 L281.5 97.7 L281.5 97.4 L282.5 97.4 L282.5 97.5 L283.5 97.5 L283.5 96.7 L284.5 96.7 L284.5 96.5 L285.5 96.5 L285.5 94.0 L286.5 94.0 L286.5 96.0 L287.5 96.0 L287.5 97.4 L288.5 97.4 L288.5 97.4 L289.5 97.4 L289.5 96.6 L290.5 96.6 L290.5 97.5 L291.5 97.5 L291.5 98.1 L292.5 98.1 L292.5 97.2 L293.5 97.2 L293.5 95.1 L294.5 95.1 L294.5 94.9 L295.5 94.9 L295.5 97.3 L296.5 97.3 L296.5 98.3 L297.5 98.3 L297.5 98.3 L298.5 98.3 L298.5 95.5 L299.5 95.5 L299.5 97.8 L300.5 97.8 L300.5 96.1 L301.5 96.1 L301.5 95.0 L302.5 95.0 L302.5 97.9 L303.5 97.9 L303.5 94.5 L304.5 94.5 L304.5 98.8 L305.5 98.8 L305.5 95.8 L306.5 95.8 L306.5 97.7 L307.5 97.7 L307.5 98.2 L308.5 98.2 L308.5 97.1 L309.5 97.1 L309.5 95.1 L310.5 95.1 L310.5 98.3 L311.5 98.3 L311.5 98.3 L312.5 98.3 L312.5 97.4 L313.5 97.4 L313.5 98.9 L314.5 98.9 L314.5 97.1 L315.5 97.1 L315.5 95.3 L316.5 95.3 L316.5 95.2 L317.5 95.2 L317.5 97.1 L318.5 97.1 L318.5 96.6 L319.5 96.6 L319.5 97.0 L320.5 97.0 L320.5 97.3 L321.5 97.3 L321.5 95.6 L322.5 95.6 L322.5 94.7 L323.5 94.7 L323.5 97.7 L324.5 97.7 L324.5 97.8 L325.5 97.8 L325.5 96.3 L326.5 96.3 L326.5 97.6 L327.5 97.6 L327.5 95.9 L328.5 95.9 L328.5 98.5 L329.5 98.5 L329.5 99.0 L330.5 99.0 L330.5 97.1 L331.5 97.1 L331.5 98.1 L332.5 98.1 L332.5 97.2 L333.5 97.2 L333.5 97.9 L334.5 97.9 L334.5 97.7 L335.5 97.7 L335.5 97.6 L336.5 97.6 L336.5 98.0 L337.5 98.0 L337.5 97.9 L338.5 97.9 L338.5 98.1 L339.5 98.1 L339.5 98.2 L340.5 98.2 L340.5 97.7 L341.5 97.7 L341.5 98.0 L342.5 98.0 L342.5 96.3 L343.5 96.3 L343.5 98.1 L344.5 98.1 L344.5 95.1 L345.5 95.1 L345.5 95.2 L346.5 95.2 L346.5 97.1 L347.5 97.1 L347.5 95.4 L348.5 95.4 L348.5 97.2 L349.5 97.2 L349.5 95.5 L350.5 95.5 L350.5 97.0 L351.5 97.0 L351.5 96.8 L352.5 96.8 L352.5 97.8 L353.5 97.8 L353.5 98.2 L354.5 98.2 L354.5 96.9 L355.5 96.9 L355.5 94.8 L356.5 94.8 L356.5 97.5 L357.5 97.5 L357.5 97.5 L358.5 97.5 L358.5 98.3 L359.5 98.3 L359.5 97.4 L360.5 97.4 L360.5 97.5 L361.5 97.5 L361.5 97.5 L362.5 97.5 L362.5 97.4 L363.5 97.4 L363.5 97.3 L364.5 97.3 L364.5 95.2 L365.5 95.2 L365.5 98.1 L366.5 98.1 L366.5 96.7 L367.5 96.7 L367.5 95.1 L368.5 95.1 L368.5 98.3 L369.5 98.3 L369.5 97.6 L370.5 97.6 L370.5 94.6 L371.5 94.6 L371.5 97.8 L372.5 97.8 L372.5 96.9 L373.5 96.9 L373.5 94.9 L374.5 94.9 L374.5 94.5 L375.5 94.5 L375.5 97.8 L376.5 97.8 L376.5 96.9 L377.5 96.9 L377.5 94.7 L378.5 94.7 L378.5 97.3 L379.5 97.3 L379.5 97.9 L380.5 97.9 L380.5 97.4 L381.5 97.4 L381.5 98.4 L382.5 98.4 L382.5 96.2 L383.5 96.2 L383.5 97.7 L384.5 97.7 L384.5 94.8 L385.5 94.8 L385.5 94.4 L386.5 94.4 L386.5 97.7 L387.5 97.7 L387.5 97.7 L388.5 97.7 L388.5 98.2 L389.5 98.2 L389.5 97.1 L390.5 97.1 L390.5 97.5 L391.5 97.5 L391.5 97.7 L392.5 97.7 L392.5 98.2 L393.5 98.2 L393.5 98.3 L394.5 98.3 L394.5 98.6 L395.5 98.6 L395.5 96.5 L396.5 96.5 L396.5 97.8 L397.5 97.8 L397.5 98.2 L398.5 98.2 L398.5 97.5 L399.5 97.5 L399.5 98.3 L400.5 98.3 L400.5 98.8 L401.5 98.8 L401.5 94.8 L402.5 94.8 L402.5 98.9 L403.5 98.9 L403.5 97.4 L404.5 97.4 L404.5 98.8 L405.5 98.8 L405.5 98.6 L406.5 98.6 L406.5 95.2 L407.5 95.2 L407.5 97.9 L408.5 97.9 L408.5 98.0 L409.5 98.0 L409.5 97.9 L410.5 97.9 L410.5 97.6 L411.5 97.6 L411.5 98.6 L412.5 98.6 L412.5 97.6 L413.5 97.6 L413.5 97.8 L414.5 97.8 L414.5 95.9 L415.5 95.9 L415.5 97.9 L416.5 97.9 L416.5 97.8 L417.5 97.8 L417.5 95.6 L418.5 95.6 L418.5 98.1 L419.5 98.1 L419.5 97.6 L420.5 97.6 L420.5 97.3 L421.5 97.3 L421.5 97.8 L422.5 97.8 L422.5 96.9 L423.5 96.9 L423.5 98.5 L424.5 98.5 L424.5 98.1 L425.5 98.1 L425.5 97.5 L426.5 97.5 L426.5 98.6 L427.5 98.6 L427.5 98.6 L428.5 98.6 L428.5 97.0 L429.5 97.0 L429.5 94.3 L430.5 94.3 L430.5 98.5 L431.5 98.5 L431.5 95.6 L432.5 95.6 L432.5 97.8 L433.5 97.8 L433.5 97.5 L434.5 97.5 L434.5 95.5 L435.5 95.5 L435.5 98.4 L436.5 98.4 L436.5 98.1 L437.5 98.1 L437.5 98.5 L438.5 98.5 L438.5 97.9 L439.5 97.9 L439.5 95.5 L440.5 95.5 L440.5 95.2 L441.5 95.2 L441.5 97.7 L442.5 97.7 L442.5 97.5 L443.5 97.5 L443.5 97.0 L444.5 97.0 L444.5 96.5 L445.5 96.5 L445.5 95.1 L446.5 95.1 L446.5 97.0 L447.5 97.0 L447.5 96.4 L448.5 96.4 L448.5 97.8 L449.5 97.8 L449.5 97.6 L450.5 97.6 L450.5 97.6 L451.5 97.6 L451.5 96.7 L452.5 96.7 L452.5 96.7 L453.5 96.7 L453.5 97.1 L454.5 97.1 L454.5 98.1 L455.5 98.1 L455.5 98.3 L456.5 98.3 L456.5 98.2 L457.5 98.2 L457.5 95.7 L458.5 95.7 L458.5 98.2 L459.5 98.2 L459.5 97.4 L460.5 97.4 L460.5 97.8 L461.5 97.8 L461.5 98.0 L462.5 98.0 L462.5 98.1 L463.5 98.1 L463.5 98.4 L464.5 98.4 L464.5 97.3 L465.5 97.3 L465.5 97.3 L466.5 97.3 L466.5 97.2 L467.5 97.2 L467.5 97.6 L468.5 97.6 L468.5 98.4 L469.5 98.4 L469.5 96.8 L470.5 96.8 L470.5 97.8 L471.5 97.8 L471.5 98.1 L472.5 98.1 L472.5 95.6 L473.5 95.6 L473.5 97.8 L474.5 97.8 L474.5 97.7 L475.5 97.7 L475.5 98.4 L476.5 98.4 L476.5 98.1 L477.5 98.1 L477.5 98.1 L478.5 98.1 L478.5 95.2 L479.5 95.2 L479.5 98.0 L480.5 98.0 L480.5 96.4 L481.5 96.4 L481.5 96.3 L482.5 96.3 L482.5 98.0 L483.5 98.0 L483.5 97.4 L484.5 97.4 L484.5 98.3 L485.5 98.3 L485.5 97.7 L486.5 97.7 L486.5 98.6 L487.5 98.6 L487.5 98.5 L488.5 98.5 L488.5 95.0 L489.5 95.0 L489.5 96.6 L490.5 96.6 L490.5 97.0 L491.5 97.0 L491.5 97.4 L492.5 97.4 L492.5 96.7 L493.5 96.7 L493.5 94.3 L494.5 94.3 L494.5 98.0 L495.5 98.0 L495.5 94.4 L496.5 94.4 L496.5 96.8 L497.5 96.8 L497.5 97.4 L498.5 97.4 L498.5 97.2 L499.5 97.2 L499.5 93.3 L500.5 93.3 L500.5 97.4 L501.5 97.4 L501.5 98.0 L502.5 98.0 L502.5 96.4 L503.5 96.4 L503.5 98.5 L504.5 98.5 L504.5 96.3 L505.5 96.3 L505.5 98.5 L506.5 98.5 L506.5 97.8 L507.5 97.8 L507.5 97.1 L508.5 97.1 L508.5 98.6 L509.5 98.6 L509.5 98.0 L510.5 98.0 L510.5 97.9 L511.5 97.9 L511.5 98.0 L512.5 98.0 L512.5 96.4 L513.5 96.4 L513.5 98.1 L514.5 98.1 L514.5 98.0 L515.5 98.0 L515.5 97.5 L516.5 97.5 L516.5 97.8 L517.5 97.8 L517.5 96.8 L518.5 96.8 L518.5 95.6 L519.5 95.6 L519.5 98.1 L520.5 98.1 L520.5 98.1 L521.5 98.1 L521.5 98.0 L522.5 98.0 L522.5 97.7 L523.5 97.7 L523.5 97.5 L524.5 97.5 L524.5 98.3 L525.5 98.3 L525.5 96.5 L526.5 96.5 L526.5 95.9 L527.5 95.9 L527.5 98.3 L528.5 98.3 L528.5 98.2 L529.5 98.2 L529.5 98.0 L530.5 98.0 L530.5 96.8 L531.5 96.8 L531.5 97.2 L532.5 97.2 L532.5 97.6 L533.5 97.6 L533.5 96.8 L534.5 96.8 L534.5 96.0 L535.5 96.0 L535.5 97.6 L536.5 97.6 L536.5 97.6 L537.5 97.6 L537.5 95.0 L538.5 95.0 L538.5 96.6 L539.5 96.6 L539.5 95.1 L540.5 95.1 L540.5 95.2 L541.5 95.2 L541.5 97.8 L542.5 97.8 L542.5 97.5 L543.5 97.5 L543.5 97.5 L544.5 97.5 L544.5 94.5 L545.5 94.5 L545.5 96.3 L546.5 96.3 L546.5 98.4 L547.5 98.4 L547.5 98.1 L548.5 98.1 L548.5 98.0 L549.5 98.0 L549.5 98.3 L550.5 98.3 L550.5 98.5 L551.5 98.5 L551.5 97.2 L552.5 97.2 L552.5 98.2 L553.5 98.2 L553.5 97.8 L554.5 97.8 L554.5 96.1 L555.5 96.1 L555.5 96.8 L556.5 96.8 L556.5 97.7 L557.5 97.7 L557.5 97.9 L558.5 97.9 L558.5 96.9 L559.5 96.9 L559.5 97.0 L560.5 97.0 L560.5 96.0 L561.5 96.0 L561.5 96.1 L562.5 96.1 L562.5 98.0 L563.5 98.0 L563.5 96.5 L564.5 96.5 L564.5 97.9 L565.5 97.9 L565.5 95.4 L566.5 95.4 L566.5 94.3 L567.5 94.3 L567.5 98.2 L568.5 98.2 L568.5 98.6 L569.5 98.6 L569.5 95.1 L570.5 95.1 L570.5 97.9 L571.5 97.9 L571.5 97.7 L572.5 97.7 L572.5 96.7 L573.5 96.7 L573.5 95.9 L574.5 95.9 L574.5 96.0 L575.5 96.0 L575.5 97.7 L576.5 97.7 L576.5 98.4 L577.5 98.4 L577.5 97.8 L578.5 97.8 L578.5 98.9 L579.5 98.9 L579.5 98.8 L580.5 98.8 L580.5 98.6 L581.5 98.6 L581.5 96.8 L582.5 96.8 L582.5 98.3 L583.5 98.3 L583.5 98.4 L584.5 98.4 L584.5 96.3 L585.5 96.3 L585.5 96.8 L586.5 96.8 L586.5 95.5 L587.5 95.5 L587.5 97.4 L588.5 97.4 L588.5 98.4 L589.5 98.4 L589.5 98.1 L590.5 98.1 L590.5 94.6 L591.5 94.6 L591.5 97.4 L592.5 97.4 L592.5 97.9 L593.5 97.9 L593.5 97.6 L594.5 97.6 L594.5 97.9 L595.5 97.9 L595.5 97.9 L596.5 97.9 L596.5 97.8 L597.5 97.8 L597.5 96.5 L598.5 96.5 L598.5 98.2 L599.5 98.2 L599.5 95.9 L600.5 95.9 L600.5 95.5 L601.5 95.5 L601.5 97.7 L602.5 97.7 L602.5 95.9 L603.5 95.9 L603.5 99.0 L604.5 99.0 L604.5 98.7 L605.5 98.7 L605.5 98.6 L606.5 98.6 L606.5 98.5 L607.5 98.5 L607.5 95.6 L608.5 95.6 L608.5 98.5 L609.5 98.5 L609.5 98.9 L610.5 98.9 L610.5 99.4 L611.5 99.4 L611.5 98.2 L612.5 98.2 L612.5 98.8 L613.5 98.8 L613.5 99.2 L614.5 99.2 L614.5 98.8 L615.5 98.8 L615.5 95.6 L616.5 95.6 L616.5 96.1 L617.5 96.1 L617.5 98.3 L618.5 98.3 L618.5 95.9 L619.5 95.9 L619.5 99.4 L620.5 99.4 L620.5 98.8 L621.5 98.8 L621.5 99.0 L622.5 99.0 L622.5 98.6 L623.5 98.6 L623.5 99.2 L624.5 99.2 L624.5 99.3 L625.5 99.3 L625.5 99.3 L626.5 99.3 L626.5 98.3 L627.5 98.3 L627.5 99.0 L628.5 99.0 L628.5 99.5 L629.5 99.5 L629.5 95.8 L630.5 95.8 L630.5 99.0 L631.5 99.0 L631.5 99.2 L632.5 99.2 L632.5 99.3 L633.5 99.3 L633.5 96.4 L634.5 96.4 L634.5 96.8 L635.5 96.8 L635.5 96.5 L636.5 96.5 L636.5 95.5 L637.5 95.5 L637.5 96.0 L638.5 96.0 L638.5 97.6 L639.5 97.6 L639.5 98.0 L640.5 98.0 L640.5 98.8 L641.5 98.8 L641.5 95.5 L642.5 95.5 L642.5 98.6 L643.5 98.6 L643.5 97.8 L644.5 97.8 L644.5 98.8 L645.5 98.8 L645.5 96.8 L646.5 96.8 L646.5 98.3 L647.5 98.3 L647.5 99.2 L648.5 99.2 L648.5 96.8 L649.5 96.8 L649.5 99.0 L650.5 99.0 L650.5 95.8 L651.5 95.8 L651.5 98.7 L652.5 98.7 L652.5 99.0 L653.5 99.0 L653.5 98.7 L654.5 98.7 L654.5 99.0 L655.5 99.0 L655.5 98.4 L656.5 98.4 L656.5 98.7 L657.5 98.7 L657.5 99.0 L658.5 99.0 L658.5 98.1 L659.5 98.1 L659.5 97.0 L660.5 97.0 L660.5 96.7 L661.5 96.7 L661.5 98.9 L662.5 98.9 L662.5 97.5 L663.5 97.5 L663.5 96.8 L664.5 96.8 L664.5 98.2 L665.5 98.2 L665.5 96.6 L666.5 96.6 L666.5 98.8 L667.5 98.8 L667.5 97.5 L668.5 97.5 L668.5 98.1 L669.5 98.1 L669.5 96.6 L670.5 96.6 L670.5 98.3 L671.5 98.3 L671.5 97.4 L672.5 97.4 L672.5 96.1 L673.5 96.1 L673.5 96.9 L674.5 96.9 L674.5 98.4 L675.5 98.4 L675.5 97.9 L676.5 97.9 L676.5 95.9 L677.5 95.9 L677.5 97.0 L678.5 97.0 L678.5 96.9 L679.5 96.9 L679.5 98.2 L680.5 98.2 L680.5 97.9 L681.5 97.9 L681.5 97.1 L682.5 97.1 L682.5 97.6 L683.5 97.6 L683.5 97.7 L684.5 97.7 L684.5 97.9 L685.5 97.9 L685.5 98.3 L686.5 98.3 L686.5 98.6 L687.5 98.6 L687.5 98.6 L688.5 98.6 L688.5 98.1 L689.5 98.1 L689.5 98.4 L690.5 98.4 L690.5 97.3 L691.5 97.3 L691.5 98.4 L692.5 98.4 L692.5 98.0 L693.5 98.0 L693.5 95.7 L694.5 95.7 L694.5 97.9 L695.5 97.9 L695.5 97.4 L696.5 97.4 L696.5 97.7 L697.5 97.7 L697.5 97.7 L698.5 97.7 L698.5 94.7 L699.5 94.7 L699.5 97.1 L700.5 97.1 L700.5 97.0 L701.5 97.0 L701.5 97.5 L702.5 97.5 L702.5 97.7 L703.5 97.7 L703.5 98.1 L704.5 98.1 L704.5 97.8 L705.5 97.8 L705.5 97.7 L706.5 97.7 L706.5 95.1 L707.5 95.1 L707.5 97.6 L708.5 97.6 L708.5 97.9 L709.5 97.9 L709.5 94.9 L710.5 94.9 L710.5 97.1 L711.5 97.1 L711.5 98.1 L712.5 98.1 L712.5 97.7 L713.5 97.7 L713.5 96.4 L714.5 96.4 L714.5 97.6 L715.5 97.6 L715.5 96.1 L716.5 96.1 L716.5 98.7 L717.5 98.7 L717.5 98.4 L718.5 98.4 L718.5 95.1 L719.5 95.1 L719.5 95.1 L720.5 95.1 L720.5 97.5 L721.5 97.5 L721.5 98.1 L722.5 98.1 L722.5 98.3 L723.5 98.3 L723.5 98.5 L724.5 98.5 L724.5 97.8 L725.5 97.8 L725.5 98.3 L726.5 98.3 L726.5 98.3 L727.5 98.3 L727.5 97.3 L728.5 97.3 L728.5 98.1 L729.5 98.1 L729.5 96.4 L730.5 96.4 L730.5 97.7 L731.5 97.7 L731.5 96.7 L732.5 96.7 L732.5 97.7 L733.5 97.7 L733.5 98.4 L734.5 98.4 L734.5 98.0 L735.5 98.0 L735.5 98.0 L736.5 98.0 L736.5 98.2 L737.5 98.2 L737.5 96.5 L738.5 96.5 L738.5 97.8 L739.5 97.8 L739.5 95.4 L740.5 95.4 L740.5 97.7 L741.5 97.7 L741.5 98.1 L742.5 98.1 L742.5 98.6 L743.5 98.6 L743.5 97.5 L744.5 97.5 L744.5 98.1 L745.5 98.1 L745.5 97.3 L746.5 97.3 L746.5 97.9 L747.5 97.9 L747.5 97.3 L748.5 97.3 L748.5 97.4 L749.5 97.4 L749.5 97.7 L750.5 97.7 L750.5 97.5 L751.5 97.5 L751.5 97.1 L752.5 97.1 L752.5 97.9 L753.5 97.9 L753.5 98.0 L754.5 98.0 L754.5 98.1 L755.5 98.1 L755.5 94.6 L756.5 94.6 L756.5 98.3 L757.5 98.3 L757.5 98.0 L758.5 98.0 L758.5 97.6 L759.5 97.6 L759.5 96.5 L760.5 96.5 L760.5 98.7 L761.5 98.7 L761.5 98.6 L762.5 98.6 L762.5 97.9 L763.5 97.9 L763.5 97.4 L764.5 97.4 L764.5 97.8 L765.5 97.8 L765.5 96.4 L766.5 96.4 L766.5 98.3 L767.5 98.3 L767.5 95.4 L768.5 95.4 L768.5 97.4 L769.5 97.4 L769.5 97.5 L770.5 97.5 L770.5 97.5 L771.5 97.5 L771.5 97.8 L772.5 97.8 L772.5 96.8 L773.5 96.8 L773.5 98.7 L774.5 98.7 L774.5 97.8 L775.5 97.8 L775.5 98.8 L776.5 98.8 L776.5 98.3 L777.5 98.3 L777.5 97.7 L778.5 97.7 L778.5 97.5 L779.5 97.5 L779.5 96.9 L780.5 96.9 L780.5 97.5 L781.5 97.5 L781.5 98.1 L782.5 98.1 L782.5 97.8 L783.5 97.8 L783.5 97.7 L784.5 97.7 L784.5 96.5 L785.5 96.5 L785.5 97.2 L786.5 97.2 L786.5 98.0 L787.5 98.0 L787.5 97.1 L788.5 97.1 L788.5 94.3 L789.5 94.3 L789.5 95.3 L790.5 95.3 L790.5 97.9 L791.5 97.9 L791.5 97.8 L792.5 97.8 L792.5 97.0 L793.5 97.0 L793.5 97.7 L794.5 97.7 L794.5 97.1 L795.5 97.1 L795.5 98.4 L796.5 98.4 L796.5 95.7 L797.5 95.7 L797.5 97.7 L798.5 97.7 L798.5 97.7 L799.5 97.7 L799.5 97.0 L800.5 97.0 L800.5 96.6 L801.5 96.6 L801.5 95.6 L802.5 95.6 L802.5 97.4 L803.5 97.4 L803.5 94.3 L804.5 94.3 L804.5 97.6 L805.5 97.6 L805.5 95.6 L806.5 95.6 L806.5 97.7 L807.5 97.7 L807.5 98.1 L808.5 98.1 L808.5 97.9 L809.5 97.9 L809.5 97.5 L810.5 97.5 L810.5 93.6 L811.5 93.6 L811.5 95.6 L812.5 95.6 L812.5 94.5 L813.5 94.5 L813.5 97.6 L814.5 97.6 L814.5 98.6 L815.5 98.6 L815.5 98.5 L816.5 98.5 L816.5 96.6 L817.5 96.6 L817.5 98.2 L818.5 98.2 L818.5 98.6 L819.5 98.6 L819.5 98.1 L820.5 98.1 L820.5 97.5 L821.5 97.5 L821.5 96.1 L822.5 96.1 L822.5 96.5 L823.5 96.5 L823.5 98.6 L824.5 98.6 L824.5 98.2 L825.5 98.2 L825.5 95.2 L826.5 95.2 L826.5 97.2 L827.5 97.2 L827.5 98.1 L828.5 98.1 L828.5 98.4 L829.5 98.4 L829.5 98.4 L830.5 98.4 L830.5 97.9 L831.5 97.9 L831.5 98.0 L832.5 98.0 L832.5 94.9 L833.5 94.9 L833.5 93.9 L834.5 93.9 L834.5 96.7 L835.5 96.7 L835.5 97.1 L836.5 97.1 L836.5 95.8 L837.5 95.8 L837.5 97.5 L838.5 97.5 L838.5 97.0 L839.5 97.0 L839.5 96.7 L840.5 96.7 L840.5 97.9 L841.5 97.9 L841.5 97.6 L842.5 97.6 L842.5 98.0 L843.5 98.0 L843.5 98.2 L844.5 98.2 L844.5 97.8 L845.5 97.8 L845.5 98.0 L846.5 98.0 L846.5 96.3 L847.5 96.3 L847.5 97.6 L848.5 97.6 L848.5 97.8 L849.5 97.8 L849.5 97.9 L850.5 97.9 L850.5 98.2 L851.5 98.2 L851.5 98.2 L852.5 98.2 L852.5 98.0 L853.5 98.0 L853.5 97.9 L854.5 97.9 L854.5 97.5 L855.5 97.5 L855.5 96.6 L856.5 96.6 L856.5 95.1 L857.5 95.1 L857.5 98.1 L858.5 98.1 L858.5 96.7 L859.5 96.7 L859.5 98.0 L860.5 98.0 L860.5 97.7 L861.5 97.7 L861.5 96.8 L862.5 96.8 L862.5 95.1 L863.5 95.1 L863.5 97.3 L864.5 97.3 L864.5 95.9 L865.5 95.9 L865.5 97.4 L866.5 97.4 L866.5 97.7 L867.5 97.7 L867.5 97.5 L868.5 97.5 L868.5 96.1 L869.5 96.1 L869.5 97.7 L870.5 97.7 L870.5 95.7 L871.5 95.7 L871.5 97.3 L872.5 97.3 L872.5 98.6 L873.5 98.6 L873.5 96.0 L874.5 96.0 L874.5 97.8 L875.5 97.8 L875.5 98.9 L876.5 98.9 L876.5 98.3 L877.5 98.3 L877.5 96.5 L878.5 96.5 L878.5 95.9 L879.5 95.9 L879.5 97.6 L880.5 97.6 L880.5 98.0 L881.5 98.0 L881.5 98.4 L882.5 98.4 L882.5 95.9 L883.5 95.9 L883.5 95.8 L884.5 95.8 L884.5 97.7 L885.5 97.7 L885.5 97.4 L886.5 97.4 L886.5 95.0 L887.5 95.0 L887.5 96.6 L888.5 96.6 L888.5 95.9 L889.5 95.9 L889.5 93.6 L890.5 93.6 L890.5 97.0 L891.5 97.0 L891.5 94.6 L892.5 94.6 L892.5 104.4 L891.5 104.4 L891.5 101.7 L890.5 101.7 L890.5 101.9 L889.5 101.9 L889.5 102.1 L888.5 102.1 L888.5 102.4 L887.5 102.4 L887.5 104.0 L886.5 104.0 L886.5 103.7 L885.5 103.7 L885.5 102.3 L884.5 102.3 L884.5 102.9 L883.5 102.9 L883.5 104.4 L882.5 104.4 L882.5 105.0 L881.5 105.0 L881.5 102.7 L880.5 102.7 L880.5 102.4 L879.5 102.4 L879.5 102.3 L878.5 102.3 L878.5 105.4 L877.5 105.4 L877.5 104.7 L876.5 104.7 L876.5 102.8 L875.5 102.8 L875.5 103.3 L874.5 103.3 L874.5 103.5 L873.5 103.5 L873.5 104.1 L872.5 104.1 L872.5 104.2 L871.5 104.2 L871.5 103.3 L870.5 103.3 L870.5 105.2 L869.5 105.2 L869.5 101.8 L868.5 101.8 L868.5 102.0 L867.5 102.0 L867.5 101.7 L866.5 101.7 L866.5 101.9 L865.5 101.9 L865.5 103.2 L864.5 103.2 L864.5 101.4 L863.5 101.4 L863.5 102.1 L862.5 102.1 L862.5 102.5 L861.5 102.5 L861.5 102.1 L860.5 102.1 L860.5 104.1 L859.5 104.1 L859.5 102.5 L858.5 102.5 L858.5 102.3 L857.5 102.3 L857.5 103.4 L856.5 103.4 L856.5 102.1 L855.5 102.1 L855.5 101.8 L854.5 101.8 L854.5 102.5 L853.5 102.5 L853.5 102.7 L852.5 102.7 L852.5 103.3 L851.5 103.3 L851.5 104.8 L850.5 104.8 L850.5 103.5 L849.5 103.5 L849.5 102.3 L848.5 102.3 L848.5 102.5 L847.5 102.5 L847.5 102.4 L846.5 102.4 L846.5 103.5 L845.5 103.5 L845.5 102.6 L844.5 102.6 L844.5 103.6 L843.5 103.6 L843.5 102.4 L842.5 102.4 L842.5 102.3 L841.5 102.3 L841.5 105.5 L840.5 105.5 L840.5 104.4 L839.5 104.4 L839.5 102.5 L838.5 102.5 L838.5 102.8 L837.5 102.8 L837.5 103.9 L836.5 103.9 L836.5 102.6 L835.5 102.6 L835.5 105.4 L834.5 105.4 L834.5 103.9 L833.5 103.9 L833.5 105.5 L832.5 105.5 L832.5 102.3 L831.5 102.3 L831.5 102.7 L830.5 102.7 L830.5 105.4 L829.5 105.4 L829.5 103.0 L828.5 103.0 L828.5 105.9 L827.5 105.9 L827.5 103.1 L826.5 103.1 L826.5 105.6 L825.5 105.6 L825.5 105.7 L824.5 105.7 L824.5 103.6 L823.5 103.6 L823.5 103.4 L822.5 103.4 L822.5 103.2 L821.5 103.2 L821.5 103.0 L820.5 103.0 L820.5 103.2 L819.5 103.2 L819.5 103.5 L818.5 103.5 L818.5 102.8 L817.5 102.8 L817.5 103.1 L816.5 103.1 L816.5 103.3 L815.5 103.3 L815.5 103.1 L814.5 103.1 L814.5 105.6 L813.5 105.6 L813.5 103.9 L812.5 103.9 L812.5 101.9 L811.5 101.9 L811.5 102.0 L810.5 102.0 L810.5 103.7 L809.5 103.7 L809.5 104.7 L808.5 104.7 L808.5 103.3 L807.5 103.3 L807.5 103.1 L806.5 103.1 L806.5 104.1 L805.5 104.1 L805.5 103.7 L804.5 103.7 L804.5 103.1 L803.5 103.1 L803.5 104.0 L802.5 104.0 L802.5 102.0 L801.5 102.0 L801.5 103.2 L800.5 103.2 L800.5 102.7 L799.5 102.7 L799.5 106.0 L798.5 106.0 L798.5 106.3 L797.5 106.3 L797.5 103.0 L796.5 103.0 L796.5 103.3 L795.5 103.3 L795.5 104.1 L794.5 104.1 L794.5 102.4 L793.5 102.4 L793.5 102.2 L792.5 102.2 L792.5 103.0 L791.5 103.0 L791.5 102.2 L790.5 102.2 L790.5 102.4 L789.5 102.4 L789.5 102.0 L788.5 102.0 L788.5 104.2 L787.5 104.2 L787.5 102.7 L786.5 102.7 L786.5 102.2 L785.5 102.2 L785.5 103.8 L784.5 103.8 L784.5 102.5 L783.5 102.5 L783.5 104.6 L782.5 104.6 L782.5 102.5 L781.5 102.5 L781.5 103.2 L780.5 103.2 L780.5 106.2 L779.5 106.2 L779.5 102.5 L778.5 102.5 L778.5 104.6 L777.5 104.6 L777.5 103.7 L776.5 103.7 L776.5 102.8 L775.5 102.8 L775.5 102.8 L774.5 102.8 L774.5 103.9 L773.5 103.9 L773.5 102.8 L772.5 102.8 L772.5 103.7 L771.5 103.7 L771.5 105.0 L770.5 105.0 L770.5 102.1 L769.5 102.1 L769.5 103.4 L768.5 103.4 L768.5 103.5 L767.5 103.5 L767.5 102.4 L766.5 102.4 L766.5 106.0 L765.5 106.0 L765.5 102.7 L764.5 102.7 L764.5 103.9 L763.5 103.9 L763.5 102.9 L762.5 102.9 L762.5 102.9 L761.5 102.9 L761.5 105.2 L760.5 105.2 L760.5 103.3 L759.5 103.3 L759.5 103.2 L758.5 103.2 L758.5 104.1 L757.5 104.1 L757.5 103.8 L756.5 103.8 L756.5 103.3 L755.5 103.3 L755.5 104.8 L754.5 104.8 L754.5 103.7 L753.5 103.7 L753.5 101.9 L752.5 101.9 L752.5 102.3 L751.5 102.3 L751.5 102.1 L750.5 102.1 L750.5 103.5 L749.5 103.5 L749.5 102.4 L748.5 102.4 L748.5 102.9 L747.5 102.9 L747.5 104.7 L746.5 104.7 L746.5 103.2 L745.5 103.2 L745.5 103.0 L744.5 103.0 L744.5 102.8 L743.5 102.8 L743.5 106.4 L742.5 106.4 L742.5 103.2 L741.5 103.2 L741.5 104.3 L740.5 104.3 L740.5 103.3 L739.5 103.3 L739.5 105.1 L738.5 105.1 L738.5 104.9 L737.5 104.9 L737.5 106.7 L736.5 106.7 L736.5 102.4 L735.5 102.4 L735.5 102.3 L734.5 102.3 L734.5 103.1 L733.5 103.1 L733.5 104.1 L732.5 104.1 L732.5 105.4 L731.5 105.4 L731.5 102.8 L730.5 102.8 L730.5 103.1 L729.5 103.1 L729.5 102.4 L728.5 102.4 L728.5 103.0 L727.5 103.0 L727.5 106.8 L726.5 106.8 L726.5 103.8 L725.5 103.8 L725.5 102.9 L724.5 102.9 L724.5 102.7 L723.5 102.7 L723.5 102.2 L722.5 102.2 L722.5 102.1 L721.5 102.1 L721.5 102.5 L720.5 102.5 L720.5 104.0 L719.5 104.0 L719.5 105.6 L718.5 105.6 L718.5 103.7 L717.5 103.7 L717.5 104.2 L716.5 104.2 L716.5 106.3 L715.5 106.3 L715.5 103.0 L714.5 103.0 L714.5 102.0 L713.5 102.0 L713.5 105.5 L712.5 105.5 L712.5 103.8 L711.5 103.8 L711.5 103.1 L710.5 103.1 L710.5 105.7 L709.5 105.7 L709.5 104.2 L708.5 104.2 L708.5 104.9 L707.5 104.9 L707.5 105.6 L706.5 105.6 L706.5 103.9 L705.5 103.9 L705.5 106.0 L704.5 106.0 L704.5 103.0 L703.5 103.0 L703.5 104.8 L702.5 104.8 L702.5 102.0 L701.5 102.0 L701.5 102.4 L700.5 102.4 L700.5 104.1 L699.5 104.1 L699.5 104.5 L698.5 104.5 L698.5 105.3 L697.5 105.3 L697.5 102.1 L696.5 102.1 L696.5 101.9 L695.5 101.9 L695.5 102.9 L694.5 102.9 L694.5 103.2 L693.5 103.2 L693.5 102.8 L692.5 102.8 L692.5 103.6 L691.5 103.6 L691.5 104.6 L690.5 104.6 L690.5 103.6 L689.5 103.6 L689.5 102.8 L688.5 102.8 L688.5 106.4 L687.5 106.4 L687.5 103.8 L686.5 103.8 L686.5 102.8 L685.5 102.8 L685.5 103.8 L684.5 103.8 L684.5 103.8 L683.5 103.8 L683.5 105.2 L682.5 105.2 L682.5 102.5 L681.5 102.5 L681.5 107.1 L680.5 107.1 L680.5 103.0 L679.5 103.0 L679.5 102.3 L678.5 102.3 L678.5 104.8 L677.5 104.8 L677.5 105.4 L676.5 105.4 L676.5 106.3 L675.5 106.3 L675.5 103.0 L674.5 103.0 L674.5 104.7 L673.5 104.7 L673.5 105.4 L672.5 105.4 L672.5 102.8 L671.5 102.8 L671.5 103.6 L670.5 103.6 L670.5 103.1 L669.5 103.1 L669.5 105.2 L668.5 105.2 L668.5 103.3 L667.5 103.3 L667.5 105.0 L666.5 105.0 L666.5 103.0 L665.5 103.0 L665.5 104.0 L664.5 104.0 L664.5 105.0 L663.5 105.0 L663.5 106.4 L662.5 106.4 L662.5 104.7 L661.5 104.7 L661.5 103.2 L660.5 103.2 L660.5 104.1 L659.5 104.1 L659.5 103.5 L658.5 103.5 L658.5 103.3 L657.5 103.3 L657.5 106.5 L656.5 106.5 L656.5 103.1 L655.5 103.1 L655.5 105.6 L654.5 105.6 L654.5 103.7 L653.5 103.7 L653.5 103.5 L652.5 103.5 L652.5 102.7 L651.5 102.7 L651.5 104.6 L650.5 104.6 L650.5 103.5 L649.5 103.5 L649.5 105.8 L648.5 105.8 L648.5 107.9 L647.5 107.9 L647.5 103.5 L646.5 103.5 L646.5 104.5 L645.5 104.5 L645.5 103.1 L644.5 103.1 L644.5 104.0 L643.5 104.0 L643.5 103.4 L642.5 103.4 L642.5 103.9 L641.5 103.9 L641.5 107.0 L640.5 107.0 L640.5 103.6 L639.5 103.6 L639.5 103.7 L638.5 103.7 L638.5 106.2 L637.5 106.2 L637.5 106.7 L636.5 106.7 L636.5 103.3 L635.5 103.3 L635.5 103.6 L634.5 103.6 L634.5 103.3 L633.5 103.3 L633.5 106.1 L632.5 106.1 L632.5 103.7 L631.5 103.7 L631.5 104.0 L630.5 104.0 L630.5 103.9 L629.5 103.9 L629.5 104.8 L628.5 104.8 L628.5 104.4 L627.5 104.4 L627.5 105.3 L626.5 105.3 L626.5 103.4 L625.5 103.4 L625.5 103.5 L624.5 103.5 L624.5 104.1 L623.5 104.1 L623.5 103.6 L622.5 103.6 L622.5 104.1 L621.5 104.1 L621.5 103.9 L620.5 103.9 L620.5 103.2 L619.5 103.2 L619.5 104.3 L618.5 104.3 L618.5 103.1 L617.5 103.1 L617.5 105.4 L616.5 105.4 L616.5 105.5 L615.5 105.5 L615.5 104.9 L614.5 104.9 L614.5 103.5 L613.5 103.5 L613.5 106.1 L612.5 106.1 L612.5 103.6 L611.5 103.6 L611.5 107.1 L610.5 107.1 L610.5 105.3 L609.5 105.3 L609.5 105.9 L608.5 105.9 L608.5 105.0 L607.5 105.0 L607.5 104.3 L606.5 104.3 L606.5 104.2 L605.5 104.2 L605.5 105.1 L604.5 105.1 L604.5 103.2 L603.5 103.2 L603.5 103.6 L602.5 103.6 L602.5 103.1 L601.5 103.1 L601.5 103.2 L600.5 103.2 L600.5 102.9 L599.5 102.9 L599.5 103.1 L598.5 103.1 L598.5 103.7 L597.5 103.7 L597.5 103.2 L596.5 103.2 L596.5 103.1 L595.5 103.1 L595.5 103.8 L594.5 103.8 L594.5 102.9 L593.5 102.9 L593.5 102.5 L592.5 102.5 L592.5 102.6 L591.5 102.6 L591.5 102.3 L590.5 102.3 L590.5 102.2 L589.5 102.2 L589.5 103.6 L588.5 103.6 L588.5 102.5 L587.5 102.5 L587.5 103.0 L586.5 103.0 L586.5 104.9 L585.5 104.9 L585.5 103.1 L584.5 103.1 L584.5 103.5 L583.5 103.5 L583.5 104.1 L582.5 104.1 L582.5 103.6 L581.5 103.6 L581.5 106.1 L580.5 106.1 L580.5 103.7 L579.5 103.7 L579.5 105.1 L578.5 105.1 L578.5 103.8 L577.5 103.8 L577.5 104.6 L576.5 104.6 L576.5 102.9 L575.5 102.9 L575.5 102.9 L574.5 102.9 L574.5 103.7 L573.5 103.7 L573.5 102.8 L572.5 102.8 L572.5 105.4 L571.5 105.4 L571.5 103.1 L570.5 103.1 L570.5 103.4 L569.5 103.4 L569.5 102.6 L568.5 102.6 L568.5 102.5 L567.5 102.5 L567.5 104.5 L566.5 104.5 L566.5 104.7 L565.5 104.7 L565.5 102.7 L564.5 102.7 L564.5 103.4 L563.5 103.4 L563.5 105.3 L562.5 105.3 L562.5 102.9 L561.5 102.9 L561.5 103.2 L560.5 103.2 L560.5 103.1 L559.5 103.1 L559.5 103.0 L558.5 103.0 L558.5 102.6 L557.5 102.6 L557.5 103.3 L556.5 103.3 L556.5 105.6 L555.5 105.6 L555.5 104.4 L554.5 104.4 L554.5 102.4 L553.5 102.4 L553.5 104.5 L552.5 104.5 L552.5 106.0 L551.5 106.0 L551.5 104.5 L550.5 104.5 L550.5 103.9 L549.5 103.9 L549.5 104.3 L548.5 104.3 L548.5 103.0 L547.5 103.0 L547.5 104.7 L546.5 104.7 L546.5 104.5 L545.5 104.5 L545.5 103.3 L544.5 103.3 L544.5 102.6 L543.5 102.6 L543.5 103.5 L542.5 103.5 L542.5 102.7 L541.5 102.7 L541.5 102.7 L540.5 102.7 L540.5 104.0 L539.5 104.0 L539.5 102.8 L538.5 102.8 L538.5 102.8 L537.5 102.8 L537.5 103.9 L536.5 103.9 L536.5 102.2 L535.5 102.2 L535.5 102.3 L534.5 102.3 L534.5 103.2 L533.5 103.2 L533.5 102.2 L532.5 102.2 L532.5 104.4 L531.5 104.4 L531.5 102.5 L530.5 102.5 L530.5 104.2 L529.5 104.2 L529.5 102.8 L528.5 102.8 L528.5 106.7 L527.5 106.7 L527.5 105.0 L526.5 105.0 L526.5 102.5 L525.5 102.5 L525.5 102.4 L524.5 102.4 L524.5 102.3 L523.5 102.3 L523.5 103.2 L522.5 103.2 L522.5 106.1 L521.5 106.1 L521.5 104.9 L520.5 104.9 L520.5 102.4 L519.5 102.4 L519.5 102.5 L518.5 102.5 L518.5 102.6 L517.5 102.6 L517.5 102.8 L516.5 102.8 L516.5 102.2 L515.5 102.2 L515.5 104.5 L514.5 104.5 L514.5 106.1 L513.5 106.1 L513.5 103.3 L512.5 103.3 L512.5 103.7 L511.5 103.7 L511.5 106.4 L510.5 106.4 L510.5 104.0 L509.5 104.0 L509.5 104.6 L508.5 104.6 L508.5 102.4 L507.5 102.4 L507.5 105.1 L506.5 105.1 L506.5 105.5 L505.5 105.5 L505.5 104.9 L504.5 104.9 L504.5 103.4 L503.5 103.4 L503.5 105.6 L502.5 105.6 L502.5 102.6 L501.5 102.6 L501.5 102.8 L500.5 102.8 L500.5 103.8 L499.5 103.8 L499.5 102.3 L498.5 102.3 L498.5 105.7 L497.5 105.7 L497.5 103.0 L496.5 103.0 L496.5 104.3 L495.5 104.3 L495.5 102.6 L494.5 102.6 L494.5 102.4 L493.5 102.4 L493.5 102.5 L492.5 102.5 L492.5 101.9 L491.5 101.9 L491.5 104.4 L490.5 104.4 L490.5 102.6 L489.5 102.6 L489.5 102.8 L488.5 102.8 L488.5 103.3 L487.5 103.3 L487.5 103.4 L486.5 103.4 L486.5 105.8 L485.5 105.8 L485.5 104.0 L484.5 104.0 L484.5 103.9 L483.5 103.9 L483.5 103.3 L482.5 103.3 L482.5 102.7 L481.5 102.7 L481.5 106.0 L480.5 106.0 L480.5 105.1 L479.5 105.1 L479.5 102.6 L478.5 102.6 L478.5 102.7 L477.5 102.7 L477.5 103.9 L476.5 103.9 L476.5 105.5 L475.5 105.5 L475.5 102.6 L474.5 102.6 L474.5 105.5 L473.5 105.5 L473.5 102.9 L472.5 102.9 L472.5 102.3 L471.5 102.3 L471.5 102.1 L470.5 102.1 L470.5 103.8 L469.5 103.8 L469.5 104.8 L468.5 104.8 L468.5 102.1 L467.5 102.1 L467.5 104.5 L466.5 104.5 L466.5 105.3 L465.5 105.3 L465.5 102.8 L464.5 102.8 L464.5 102.7 L463.5 102.7 L463.5 104.6 L462.5 104.6 L462.5 102.5 L461.5 102.5 L461.5 103.3 L460.5 103.3 L460.5 103.5 L459.5 103.5 L459.5 102.8 L458.5 102.8 L458.5 106.6 L457.5 106.6 L457.5 102.7 L456.5 102.7 L456.5 104.5 L455.5 104.5 L455.5 102.5 L454.5 102.5 L454.5 102.6 L453.5 102.6 L453.5 103.2 L452.5 103.2 L452.5 102.1 L451.5 102.1 L451.5 102.1 L450.5 102.1 L450.5 103.7 L449.5 103.7 L449.5 104.9 L448.5 104.9 L448.5 105.7 L447.5 105.7 L447.5 105.5 L446.5 105.5 L446.5 103.7 L445.5 103.7 L445.5 102.3 L444.5 102.3 L444.5 104.1 L443.5 104.1 L443.5 102.3 L442.5 102.3 L442.5 104.1 L441.5 104.1 L441.5 103.6 L440.5 103.6 L440.5 102.2 L439.5 102.2 L439.5 102.6 L438.5 102.6 L438.5 105.7 L437.5 105.7 L437.5 103.3 L436.5 103.3 L436.5 105.1 L435.5 105.1 L435.5 103.8 L434.5 103.8 L434.5 102.6 L433.5 102.6 L433.5 102.7 L432.5 102.7 L432.5 103.2 L431.5 103.2 L431.5 103.0 L430.5 103.0 L430.5 102.9 L429.5 102.9 L429.5 102.7 L428.5 102.7 L428.5 106.2 L427.5 106.2 L427.5 104.0 L426.5 104.0 L426.5 103.1 L425.5 103.1 L425.5 103.6 L424.5 103.6 L424.5 103.4 L423.5 103.4 L423.5 102.3 L422.5 102.3 L422.5 102.2 L421.5 102.2 L421.5 104.9 L420.5 104.9 L420.5 104.5 L419.5 104.5 L419.5 103.9 L418.5 103.9 L418.5 102.6 L417.5 102.6 L417.5 102.2 L416.5 102.2 L416.5 105.0 L415.5 105.0 L415.5 102.5 L414.5 102.5 L414.5 102.6 L413.5 102.6 L413.5 103.6 L412.5 103.6 L412.5 103.1 L411.5 103.1 L411.5 102.6 L410.5 102.6 L410.5 105.3 L409.5 105.3 L409.5 103.1 L408.5 103.1 L408.5 104.4 L407.5 104.4 L407.5 102.7 L406.5 102.7 L406.5 104.4 L405.5 104.4 L405.5 104.9 L404.5 104.9 L404.5 103.2 L403.5 103.2 L403.5 103.7 L402.5 103.7 L402.5 104.1 L401.5 104.1 L401.5 105.2 L400.5 105.2 L400.5 105.0 L399.5 105.0 L399.5 104.3 L398.5 104.3 L398.5 104.4 L397.5 104.4 L397.5 102.4 L396.5 102.4 L396.5 103.3 L395.5 103.3 L395.5 103.5 L394.5 103.5 L394.5 104.3 L393.5 104.3 L393.5 106.2 L392.5 106.2 L392.5 103.6 L391.5 103.6 L391.5 102.6 L390.5 102.6 L390.5 103.2 L389.5 103.2 L389.5 103.2 L388.5 103.2 L388.5 102.0 L387.5 102.0 L387.5 102.8 L386.5 102.8 L386.5 104.0 L385.5 104.0 L385.5 104.2 L384.5 104.2 L384.5 103.2 L383.5 103.2 L383.5 103.1 L382.5 103.1 L382.5 102.8 L381.5 102.8 L381.5 102.5 L380.5 102.5 L380.5 104.5 L379.5 104.5 L379.5 101.9 L378.5 101.9 L378.5 104.1 L377.5 104.1 L377.5 102.8 L376.5 102.8 L376.5 105.8 L375.5 105.8 L375.5 103.3 L374.5 103.3 L374.5 102.7 L373.5 102.7 L373.5 102.9 L372.5 102.9 L372.5 102.0 L371.5 102.0 L371.5 102.5 L370.5 102.5 L370.5 102.5 L369.5 102.5 L369.5 104.4 L368.5 104.4 L368.5 102.9 L367.5 102.9 L367.5 103.0 L366.5 103.0 L366.5 102.7 L365.5 102.7 L365.5 103.0 L364.5 103.0 L364.5 105.3 L363.5 105.3 L363.5 102.7 L362.5 102.7 L362.5 102.2 L361.5 102.2 L361.5 103.3 L360.5 103.3 L360.5 103.3 L359.5 103.3 L359.5 102.6 L358.5 102.6 L358.5 103.4 L357.5 103.4 L357.5 106.2 L356.5 106.2 L356.5 104.1 L355.5 104.1 L355.5 105.5 L354.5 105.5 L354.5 103.3 L353.5 103.3 L353.5 104.5 L352.5 104.5 L352.5 101.8 L351.5 101.8 L351.5 101.7 L350.5 101.7 L350.5 101.5 L349.5 101.5 L349.5 102.1 L348.5 102.1 L348.5 102.6 L347.5 102.6 L347.5 105.9 L346.5 105.9 L346.5 105.5 L345.5 105.5 L345.5 102.6 L344.5 102.6 L344.5 103.8 L343.5 103.8 L343.5 102.2 L342.5 102.2 L342.5 105.2 L341.5 105.2 L341.5 102.6 L340.5 102.6 L340.5 102.9 L339.5 102.9 L339.5 103.8 L338.5 103.8 L338.5 102.7 L337.5 102.7 L337.5 102.7 L336.5 102.7 L336.5 104.7 L335.5 104.7 L335.5 104.6 L334.5 104.6 L334.5 105.2 L333.5 105.2 L333.5 102.2 L332.5 102.2 L332.5 102.9 L331.5 102.9 L331.5 106.2 L330.5 106.2 L330.5 106.7 L329.5 106.7 L329.5 102.9 L328.5 102.9 L328.5 103.5 L327.5 103.5 L327.5 103.2 L326.5 103.2 L326.5 103.3 L325.5 103.3 L325.5 102.6 L324.5 102.6 L324.5 103.1 L323.5 103.1 L323.5 104.6 L322.5 104.6 L322.5 106.3 L321.5 106.3 L321.5 102.8 L320.5 102.8 L320.5 102.7 L319.5 102.7 L319.5 103.0 L318.5 103.0 L318.5 103.4 L317.5 103.4 L317.5 103.4 L316.5 103.4 L316.5 103.0 L315.5 103.0 L315.5 106.2 L314.5 106.2 L314.5 103.4 L313.5 103.4 L313.5 103.1 L312.5 103.1 L312.5 102.9 L311.5 102.9 L311.5 106.3 L310.5 106.3 L310.5 103.3 L309.5 103.3 L309.5 103.4 L308.5 103.4 L308.5 102.6 L307.5 102.6 L307.5 102.3 L306.5 102.3 L306.5 104.7 L305.5 104.7 L305.5 104.3 L304.5 104.3 L304.5 104.8 L303.5 104.8 L303.5 103.7 L302.5 103.7 L302.5 102.8 L301.5 102.8 L301.5 102.8 L300.5 102.8 L300.5 104.9 L299.5 104.9 L299.5 104.7 L298.5 104.7 L298.5 102.8 L297.5 102.8 L297.5 105.9 L296.5 105.9 L296.5 103.3 L295.5 103.3 L295.5 102.4 L294.5 102.4 L294.5 102.5 L293.5 102.5 L293.5 104.8 L292.5 104.8 L292.5 106.0 L291.5 106.0 L291.5 101.9 L290.5 101.9 L290.5 103.3 L289.5 103.3 L289.5 102.7 L288.5 102.7 L288.5 102.3 L287.5 102.3 L287.5 103.7 L286.5 103.7 L286.5 102.4 L285.5 102.4 L285.5 102.3 L284.5 102.3 L284.5 103.0 L283.5 103.0 L283.5 101.7 L282.5 101.7 L282.5 102.2 L281.5 102.2 L281.5 102.5 L280.5 102.5 L280.5 105.3 L279.5 105.3 L279.5 106.3 L278.5 106.3 L278.5 102.6 L277.5 102.6 L277.5 103.6 L276.5 103.6 L276.5 102.6 L275.5 102.6 L275.5 103.9 L274.5 103.9 L274.5 103.6 L273.5 103.6 L273.5 104.2 L272.5 104.2 L272.5 105.4 L271.5 105.4 L271.5 102.6 L270.5 102.6 L270.5 106.3 L269.5 106.3 L269.5 104.0 L268.5 104.0 L268.5 104.8 L267.5 104.8 L267.5 102.8 L266.5 102.8 L266.5 102.5 L265.5 102.5 L265.5 102.9 L264.5 102.9 L264.5 103.7 L263.5 103.7 L263.5 103.4 L262.5 103.4 L262.5 102.6 L261.5 102.6 L261.5 102.8 L260.5 102.8 L260.5 103.3 L259.5 103.3 L259.5 102.5 L258.5 102.5 L258.5 103.9 L257.5 103.9 L257.5 103.5 L256.5 103.5 L256.5 105.3 L255.5 105.3 L255.5 105.5 L254.5 105.5 L254.5 103.1 L253.5 103.1 L253.5 104.5 L252.5 104.5 L252.5 103.8 L251.5 103.8 L251.5 103.1 L250.5 103.1 L250.5 102.5 L249.5 102.5 L249.5 102.4 L248.5 102.4 L248.5 104.8 L247.5 104.8 L247.5 103.1 L246.5 103.1 L246.5 103.7 L245.5 103.7 L245.5 104.0 L244.5 104.0 L244.5 103.7 L243.5 103.7 L243.5 104.3 L242.5 104.3 L242.5 105.2 L241.5 105.2 L241.5 103.6 L240.5 103.6 L240.5 102.3 L239.5 102.3 L239.5 104.1 L238.5 104.1 L238.5 103.4 L237.5 103.4 L237.5 102.1 L236.5 102.1 L236.5 103.0 L235.5 103.0 L235.5 102.5 L234.5 102.5 L234.5 103.1 L233.5 103.1 L233.5 103.7 L232.5 103.7 L232.5 104.3 L231.5 104.3 L231.5 102.8 L230.5 102.8 L230.5 102.4 L229.5 102.4 L229.5 104.1 L228.5 104.1 L228.5 102.9 L227.5 102.9 L227.5 102.6 L226.5 102.6 L226.5 103.3 L225.5 103.3 L225.5 103.8 L224.5 103.8 L224.5 102.4 L223.5 102.4 L223.5 104.0 L222.5 104.0 L222.5 103.6 L221.5 103.6 L221.5 102.7 L220.5 102.7 L220.5 103.4 L219.5 103.4 L219.5 102.1 L218.5 102.1 L218.5 102.6 L217.5 102.6 L217.5 106.0 L216.5 106.0 L216.5 102.8 L215.5 102.8 L215.5 103.0 L214.5 103.0 L214.5 105.0 L213.5 105.0 L213.5 104.8 L212.5 104.8 L212.5 104.1 L211.5 104.1 L211.5 103.3 L210.5 103.3 L210.5 104.4 L209.5 104.4 L209.5 103.5 L208.5 103.5 L208.5 103.6 L207.5 103.6 L207.5 103.5 L206.5 103.5 L206.5 103.9 L205.5 103.9 L205.5 106.5 L204.5 106.5 L204.5 102.9 L203.5 102.9 L203.5 102.7 L202.5 102.7 L202.5 102.7 L201.5 102.7 L201.5 105.6 L200.5 105.6 L200.5 104.7 L199.5 104.7 L199.5 105.1 L198.5 105.1 L198.5 103.7 L197.5 103.7 L197.5 103.8 L196.5 103.8 L196.5 104.5 L195.5 104.5 L195.5 103.4 L194.5 103.4 L194.5 103.4 L193.5 103.4 L193.5 102.8 L192.5 102.8 L192.5 103.3 L191.5 103.3 L191.5 106.0 L190.5 106.0 L190.5 106.6 L189.5 106.6 L189.5 104.3 L188.5 104.3 L188.5 105.6 L187.5 105.6 L187.5 103.0 L186.5 103.0 L186.5 105.0 L185.5 105.0Z" fill="#c6bc22"/>
<rect x="186.0" y="98.9" width="707.0" height="3.0" fill="#e2d82e"/>
<path d="M186.0 100.9 L187.0 101.3 L188.0 99.9 L189.0 99.8 L190.0 100.7 L191.0 101.6 L192.0 100.7 L193.0 99.6 L194.0 99.9 L195.0 100.4 L196.0 101.1 L197.0 100.4 L198.0 100.2 L199.0 100.3 L200.0 100.5 L201.0 99.9 L202.0 100.4 L203.0 100.6 L204.0 101.5 L205.0 100.4 L206.0 101.1 L207.0 99.7 L208.0 101.0 L209.0 100.5 L210.0 100.1 L211.0 100.4 L212.0 101.0 L213.0 100.2 L214.0 101.1 L215.0 101.5 L216.0 101.5 L217.0 101.5 L218.0 99.6 L219.0 100.7 L220.0 100.0 L221.0 101.1 L222.0 100.5 L223.0 100.6 L224.0 100.7 L225.0 100.0 L226.0 100.5 L227.0 99.9 L228.0 101.8 L229.0 100.1 L230.0 100.4 L231.0 99.2 L232.0 99.4 L233.0 99.8 L234.0 101.0 L235.0 101.0 L236.0 100.6 L237.0 100.0 L238.0 101.7 L239.0 99.7 L240.0 99.8 L241.0 100.8 L242.0 99.7 L243.0 100.6 L244.0 101.1 L245.0 100.4 L246.0 100.7 L247.0 100.5 L248.0 100.0 L249.0 99.0 L250.0 99.6 L251.0 100.4 L252.0 99.3 L253.0 100.0 L254.0 100.6 L255.0 101.3 L256.0 99.5 L257.0 100.1 L258.0 100.6 L259.0 100.8 L260.0 99.5 L261.0 101.7 L262.0 99.9 L263.0 101.2 L264.0 100.3 L265.0 100.7 L266.0 101.6 L267.0 100.9 L268.0 100.5 L269.0 99.7 L270.0 100.0 L271.0 99.4 L272.0 101.8 L273.0 99.4 L274.0 99.0 L275.0 101.6 L276.0 101.3 L277.0 100.2 L278.0 101.0 L279.0 99.9 L280.0 100.0 L281.0 100.8 L282.0 100.7 L283.0 100.1 L284.0 101.5 L285.0 100.9 L286.0 100.5 L287.0 99.6 L288.0 100.5 L289.0 100.2 L290.0 100.4 L291.0 101.0 L292.0 100.0 L293.0 100.6 L294.0 101.0 L295.0 100.7 L296.0 101.8 L297.0 99.2 L298.0 100.4 L299.0 99.6 L300.0 100.4 L301.0 101.8 L302.0 99.3 L303.0 100.2 L304.0 100.9 L305.0 100.5 L306.0 101.1 L307.0 99.3 L308.0 101.1 L309.0 99.8 L310.0 99.6 L311.0 100.8 L312.0 100.8 L313.0 99.9 L314.0 99.9 L315.0 100.3 L316.0 100.4 L317.0 100.3 L318.0 99.7 L319.0 99.0 L320.0 101.3 L321.0 100.5 L322.0 99.6 L323.0 99.3 L324.0 99.9 L325.0 100.1 L326.0 99.0 L327.0 101.4 L328.0 100.7 L329.0 100.2 L330.0 100.7 L331.0 100.6 L332.0 101.2 L333.0 100.5 L334.0 101.3 L335.0 101.5 L336.0 100.2 L337.0 100.1 L338.0 99.8 L339.0 100.3 L340.0 99.9 L341.0 100.4 L342.0 100.6 L343.0 100.8 L344.0 99.6 L345.0 101.2 L346.0 100.2 L347.0 100.3 L348.0 100.1 L349.0 99.0 L350.0 100.6 L351.0 99.2 L352.0 101.2 L353.0 100.4 L354.0 101.5 L355.0 100.9 L356.0 100.9 L357.0 101.4 L358.0 100.4 L359.0 101.5 L360.0 100.3 L361.0 100.6 L362.0 99.9 L363.0 100.8 L364.0 100.9 L365.0 100.1 L366.0 99.5 L367.0 100.4 L368.0 100.7 L369.0 100.3 L370.0 99.7 L371.0 99.9 L372.0 100.2 L373.0 99.0 L374.0 100.0 L375.0 101.4 L376.0 99.5 L377.0 100.3 L378.0 101.6 L379.0 100.9 L380.0 101.0 L381.0 100.3 L382.0 99.5 L383.0 101.8 L384.0 100.6 L385.0 100.6 L386.0 101.6 L387.0 101.0 L388.0 100.4 L389.0 99.6 L390.0 100.3 L391.0 100.3 L392.0 99.9 L393.0 99.8 L394.0 99.7 L395.0 100.3 L396.0 100.0 L397.0 100.7 L398.0 101.1 L399.0 100.6 L400.0 100.4 L401.0 101.5 L402.0 100.9 L403.0 99.4 L404.0 99.9 L405.0 100.5 L406.0 99.8 L407.0 100.9 L408.0 99.2 L409.0 99.1 L410.0 101.1 L411.0 100.8 L412.0 99.3 L413.0 100.5 L414.0 101.3 L415.0 99.6 L416.0 99.6 L417.0 99.6 L418.0 99.7 L419.0 99.2 L420.0 100.1 L421.0 99.4 L422.0 100.4 L423.0 101.8 L424.0 99.7 L425.0 101.0 L426.0 101.2 L427.0 99.0 L428.0 100.5 L429.0 100.4 L430.0 100.2 L431.0 101.0 L432.0 100.1 L433.0 100.6 L434.0 100.1 L435.0 100.3 L436.0 99.9 L437.0 101.8 L438.0 100.4 L439.0 99.6 L440.0 101.8 L441.0 101.5 L442.0 100.3 L443.0 99.9 L444.0 99.9 L445.0 101.3 L446.0 100.2 L447.0 99.9 L448.0 101.0 L449.0 100.2 L450.0 100.4 L451.0 101.8 L452.0 101.0 L453.0 101.3 L454.0 100.7 L455.0 101.3 L456.0 100.3 L457.0 101.1 L458.0 101.1 L459.0 100.1 L460.0 99.5 L461.0 100.8 L462.0 100.3 L463.0 100.8 L464.0 100.0 L465.0 100.8 L466.0 101.1 L467.0 101.8 L468.0 101.6 L469.0 100.7 L470.0 101.4 L471.0 100.0 L472.0 101.2 L473.0 100.5 L474.0 101.3 L475.0 100.6 L476.0 100.2 L477.0 99.9 L478.0 101.3 L479.0 100.4 L480.0 100.9 L481.0 100.7 L482.0 99.0 L483.0 100.8 L484.0 100.1 L485.0 100.7 L486.0 100.7 L487.0 99.1 L488.0 100.2 L489.0 100.4 L490.0 100.7 L491.0 101.1 L492.0 99.9 L493.0 100.2 L494.0 100.8 L495.0 99.1 L496.0 101.7 L497.0 99.7 L498.0 101.3 L499.0 100.5 L500.0 101.7 L501.0 101.1 L502.0 100.4 L503.0 99.2 L504.0 100.5 L505.0 100.6 L506.0 100.8 L507.0 99.5 L508.0 99.8 L509.0 99.9 L510.0 100.6 L511.0 99.8 L512.0 100.3 L513.0 101.0 L514.0 100.1 L515.0 101.3 L516.0 100.6 L517.0 100.2 L518.0 101.2 L519.0 100.7 L520.0 100.2 L521.0 100.0 L522.0 100.4 L523.0 100.6 L524.0 101.2 L525.0 100.6 L526.0 100.0 L527.0 99.5 L528.0 100.6 L529.0 100.7 L530.0 101.2 L531.0 100.0 L532.0 99.5 L533.0 101.0 L534.0 100.3 L535.0 99.6 L536.0 101.6 L537.0 101.0 L538.0 100.4 L539.0 100.6 L540.0 99.9 L541.0 101.1 L542.0 100.1 L543.0 100.1 L544.0 100.2 L545.0 99.6 L546.0 101.1 L547.0 101.6 L548.0 100.9 L549.0 99.0 L550.0 100.2 L551.0 100.0 L552.0 100.7 L553.0 99.0 L554.0 99.0 L555.0 100.1 L556.0 101.1 L557.0 100.3 L558.0 101.8 L559.0 99.8 L560.0 100.4 L561.0 100.3 L562.0 99.8 L563.0 101.2 L564.0 99.5 L565.0 99.7 L566.0 100.1 L567.0 100.1 L568.0 101.2 L569.0 100.0 L570.0 100.8 L571.0 100.1 L572.0 101.3 L573.0 100.4 L574.0 100.6 L575.0 99.3 L576.0 100.9 L577.0 100.0 L578.0 101.0 L579.0 100.8 L580.0 100.8 L581.0 101.2 L582.0 100.7 L583.0 99.8 L584.0 100.5 L585.0 100.5 L586.0 99.6 L587.0 100.8 L588.0 101.4 L589.0 100.6 L590.0 100.5 L591.0 100.7 L592.0 101.2 L593.0 100.0 L594.0 101.1 L595.0 99.9 L596.0 100.8 L597.0 100.8 L598.0 99.5 L599.0 100.9 L600.0 100.6 L601.0 99.2 L602.0 100.1 L603.0 100.0 L604.0 99.8 L605.0 100.7 L606.0 99.9 L607.0 100.4 L608.0 99.6 L609.0 100.2 L610.0 101.7 L611.0 100.7 L612.0 99.3 L613.0 99.7 L614.0 100.3 L615.0 99.3 L616.0 101.1 L617.0 100.4 L618.0 100.4 L619.0 100.4 L620.0 99.9 L621.0 99.6 L622.0 99.0 L623.0 99.3 L624.0 100.6 L625.0 100.9 L626.0 100.3 L627.0 99.1 L628.0 100.2 L629.0 100.4 L630.0 99.5 L631.0 101.4 L632.0 99.6 L633.0 100.4 L634.0 99.6 L635.0 101.0 L636.0 99.5 L637.0 99.8 L638.0 101.2 L639.0 99.5 L640.0 100.0 L641.0 100.8 L642.0 100.6 L643.0 99.2 L644.0 100.8 L645.0 100.2 L646.0 101.2 L647.0 99.2 L648.0 100.9 L649.0 100.7 L650.0 100.1 L651.0 100.1 L652.0 100.7 L653.0 99.9 L654.0 100.2 L655.0 99.9 L656.0 100.5 L657.0 100.9 L658.0 99.3 L659.0 100.4 L660.0 100.6 L661.0 101.4 L662.0 99.9 L663.0 101.3 L664.0 100.1 L665.0 100.7 L666.0 100.6 L667.0 100.6 L668.0 100.2 L669.0 99.7 L670.0 101.4 L671.0 101.4 L672.0 100.3 L673.0 100.3 L674.0 100.3 L675.0 99.5 L676.0 99.6 L677.0 100.7 L678.0 101.1 L679.0 100.2 L680.0 99.7 L681.0 99.6 L682.0 100.0 L683.0 100.9 L684.0 100.4 L685.0 99.4 L686.0 99.6 L687.0 100.6 L688.0 100.6 L689.0 101.6 L690.0 101.4 L691.0 100.5 L692.0 99.9 L693.0 100.5 L694.0 99.6 L695.0 99.9 L696.0 101.1 L697.0 100.8 L698.0 101.0 L699.0 101.5 L700.0 100.1 L701.0 101.0 L702.0 100.4 L703.0 100.6 L704.0 100.6 L705.0 100.8 L706.0 99.4 L707.0 99.4 L708.0 100.5 L709.0 100.7 L710.0 100.1 L711.0 100.3 L712.0 99.4 L713.0 101.1 L714.0 100.7 L715.0 101.4 L716.0 100.1 L717.0 100.3 L718.0 100.4 L719.0 101.3 L720.0 100.8 L721.0 100.7 L722.0 99.3 L723.0 99.8 L724.0 99.4 L725.0 100.3 L726.0 101.0 L727.0 100.4 L728.0 99.8 L729.0 101.8 L730.0 99.6 L731.0 101.4 L732.0 101.2 L733.0 100.6 L734.0 101.3 L735.0 99.6 L736.0 100.0 L737.0 100.2 L738.0 100.7 L739.0 100.3 L740.0 101.6 L741.0 100.1 L742.0 100.2 L743.0 99.6 L744.0 100.7 L745.0 100.9 L746.0 99.9 L747.0 99.5 L748.0 99.4 L749.0 101.2 L750.0 100.9 L751.0 100.6 L752.0 100.9 L753.0 100.7 L754.0 100.7 L755.0 99.3 L756.0 100.8 L757.0 100.9 L758.0 101.2 L759.0 101.1 L760.0 99.9 L761.0 100.6 L762.0 99.4 L763.0 101.4 L764.0 99.4 L765.0 100.9 L766.0 99.8 L767.0 99.8 L768.0 99.8 L769.0 100.2 L770.0 100.7 L771.0 101.2 L772.0 100.2 L773.0 101.0 L774.0 101.0 L775.0 101.8 L776.0 100.0 L777.0 100.6 L778.0 100.9 L779.0 100.5 L780.0 100.8 L781.0 99.9 L782.0 100.1 L783.0 100.0 L784.0 100.0 L785.0 99.8 L786.0 100.3 L787.0 99.5 L788.0 100.0 L789.0 100.8 L790.0 99.3 L791.0 99.7 L792.0 100.1 L793.0 99.7 L794.0 99.7 L795.0 101.7 L796.0 100.6 L797.0 100.1 L798.0 99.9 L799.0 99.3 L800.0 99.6 L801.0 99.0 L802.0 100.8 L803.0 100.0 L804.0 101.0 L805.0 100.4 L806.0 99.0 L807.0 101.7 L808.0 100.7 L809.0 101.0 L810.0 100.0 L811.0 100.0 L812.0 100.3 L813.0 101.6 L814.0 99.5 L815.0 99.6 L816.0 100.8 L817.0 99.0 L818.0 101.4 L819.0 99.6 L820.0 101.2 L821.0 100.3 L822.0 100.1 L823.0 99.6 L824.0 101.4 L825.0 100.2 L826.0 99.5 L827.0 100.8 L828.0 100.3 L829.0 100.8 L830.0 100.1 L831.0 100.6 L832.0 100.7 L833.0 100.4 L834.0 99.3 L835.0 100.7 L836.0 101.4 L837.0 100.7 L838.0 101.0 L839.0 100.9 L840.0 100.2 L841.0 101.1 L842.0 100.2 L843.0 99.7 L844.0 99.5 L845.0 101.1 L846.0 100.9 L847.0 100.8 L848.0 100.0 L849.0 99.1 L850.0 100.9 L851.0 100.3 L852.0 100.0 L853.0 100.0 L854.0 100.0 L855.0 99.1 L856.0 100.8 L857.0 100.9 L858.0 101.0 L859.0 100.1 L860.0 99.5 L861.0 99.4 L862.0 100.2 L863.0 101.6 L864.0 101.0 L865.0 100.4 L866.0 100.7 L867.0 101.0 L868.0 100.4 L869.0 100.6 L870.0 100.5 L871.0 100.0 L872.0 99.6 L873.0 100.0 L874.0 101.2 L875.0 99.3 L876.0 100.1 L877.0 100.1 L878.0 100.4 L879.0 100.1 L880.0 100.9 L881.0 100.1 L882.0 100.4 L883.0 100.9 L884.0 99.4 L885.0 101.2 L886.0 101.1 L887.0 99.5 L888.0 100.3 L889.0 99.9 L890.0 100.1 L891.0 100.9 L892.0 99.1 L893.0 101.0" fill="none" stroke="#f6ee48" stroke-width="1.8" stroke-linejoin="round"/>
<path d="M23.0 527.7 L24.0 527.7 L24.0 529.5 L25.0 529.5 L25.0 528.8 L26.0 528.8 L26.0 528.9 L27.0 528.9 L27.0 529.4 L28.0 529.4 L28.0 529.5 L29.0 529.5 L29.0 529.7 L30.0 529.7 L30.0 526.8 L31.0 526.8 L31.0 529.4 L32.0 529.4 L32.0 529.5 L33.0 529.5 L33.0 529.4 L34.0 529.4 L34.0 529.1 L35.0 529.1 L35.0 528.9 L36.0 528.9 L36.0 526.9 L37.0 526.9 L37.0 529.6 L38.0 529.6 L38.0 529.1 L39.0 529.1 L39.0 528.0 L40.0 528.0 L40.0 527.7 L41.0 527.7 L41.0 530.0 L42.0 530.0 L42.0 529.8 L43.0 529.8 L43.0 529.9 L44.0 529.9 L44.0 529.3 L45.0 529.3 L45.0 529.9 L46.0 529.9 L46.0 530.1 L47.0 530.1 L47.0 528.0 L48.0 528.0 L48.0 527.9 L49.0 527.9 L49.0 530.0 L50.0 530.0 L50.0 530.3 L51.0 530.3 L51.0 528.0 L52.0 528.0 L52.0 529.3 L53.0 529.3 L53.0 528.6 L54.0 528.6 L54.0 529.9 L55.0 529.9 L55.0 529.9 L56.0 529.9 L56.0 528.2 L57.0 528.2 L57.0 529.5 L58.0 529.5 L58.0 527.6 L59.0 527.6 L59.0 530.8 L60.0 530.8 L60.0 529.2 L61.0 529.2 L61.0 529.5 L62.0 529.5 L62.0 529.6 L63.0 529.6 L63.0 529.9 L64.0 529.9 L64.0 529.1 L65.0 529.1 L65.0 530.1 L66.0 530.1 L66.0 529.7 L67.0 529.7 L67.0 529.6 L68.0 529.6 L68.0 530.0 L69.0 530.0 L69.0 529.9 L70.0 529.9 L70.0 529.7 L71.0 529.7 L71.0 529.5 L72.0 529.5 L72.0 527.0 L73.0 527.0 L73.0 529.2 L74.0 529.2 L74.0 529.9 L75.0 529.9 L75.0 529.9 L76.0 529.9 L76.0 529.2 L77.0 529.2 L77.0 528.9 L78.0 528.9 L78.0 529.0 L79.0 529.0 L79.0 529.0 L80.0 529.0 L80.0 526.8 L81.0 526.8 L81.0 527.5 L82.0 527.5 L82.0 528.2 L83.0 528.2 L83.0 527.9 L84.0 527.9 L84.0 529.0 L85.0 529.0 L85.0 528.6 L86.0 528.6 L86.0 526.8 L87.0 526.8 L87.0 529.5 L88.0 529.5 L88.0 527.9 L89.0 527.9 L89.0 530.0 L90.0 530.0 L90.0 529.2 L91.0 529.2 L91.0 527.2 L92.0 527.2 L92.0 529.7 L93.0 529.7 L93.0 527.8 L94.0 527.8 L94.0 528.0 L95.0 528.0 L95.0 528.7 L96.0 528.7 L96.0 528.4 L97.0 528.4 L97.0 529.7 L98.0 529.7 L98.0 529.1 L99.0 529.1 L99.0 529.4 L100.0 529.4 L100.0 529.4 L101.0 529.4 L101.0 529.5 L102.0 529.5 L102.0 526.5 L103.0 526.5 L103.0 529.6 L104.0 529.6 L104.0 529.8 L105.0 529.8 L105.0 526.7 L106.0 526.7 L106.0 529.5 L107.0 529.5 L107.0 530.0 L108.0 530.0 L108.0 528.6 L109.0 528.6 L109.0 526.8 L110.0 526.8 L110.0 529.1 L111.0 529.1 L111.0 529.9 L112.0 529.9 L112.0 527.7 L113.0 527.7 L113.0 530.1 L114.0 530.1 L114.0 529.6 L115.0 529.6 L115.0 529.7 L116.0 529.7 L116.0 529.9 L117.0 529.9 L117.0 529.5 L118.0 529.5 L118.0 529.9 L119.0 529.9 L119.0 528.6 L120.0 528.6 L120.0 527.8 L121.0 527.8 L121.0 529.8 L122.0 529.8 L122.0 529.9 L123.0 529.9 L123.0 529.3 L124.0 529.3 L124.0 528.9 L125.0 528.9 L125.0 529.8 L126.0 529.8 L126.0 529.0 L127.0 529.0 L127.0 529.3 L128.0 529.3 L128.0 528.5 L129.0 528.5 L129.0 529.9 L130.0 529.9 L130.0 530.2 L131.0 530.2 L131.0 528.3 L132.0 528.3 L132.0 529.9 L133.0 529.9 L133.0 528.0 L134.0 528.0 L134.0 530.0 L135.0 530.0 L135.0 528.4 L136.0 528.4 L136.0 529.6 L137.0 529.6 L137.0 528.9 L138.0 528.9 L138.0 529.3 L139.0 529.3 L139.0 530.1 L140.0 530.1 L140.0 529.9 L141.0 529.9 L141.0 527.6 L142.0 527.6 L142.0 529.7 L143.0 529.7 L143.0 530.0 L144.0 530.0 L144.0 530.1 L145.0 530.1 L145.0 529.8 L146.0 529.8 L146.0 529.8 L147.0 529.8 L147.0 526.9 L148.0 526.9 L148.0 527.8 L149.0 527.8 L149.0 529.9 L150.0 529.9 L150.0 529.6 L151.0 529.6 L151.0 528.7 L152.0 528.7 L152.0 529.6 L153.0 529.6 L153.0 530.2 L154.0 530.2 L154.0 530.3 L155.0 530.3 L155.0 528.9 L156.0 528.9 L156.0 529.1 L157.0 529.1 L157.0 530.3 L158.0 530.3 L158.0 530.0 L159.0 530.0 L159.0 529.1 L160.0 529.1 L160.0 530.3 L161.0 530.3 L161.0 529.8 L162.0 529.8 L162.0 530.2 L163.0 530.2 L163.0 530.1 L164.0 530.1 L164.0 530.3 L165.0 530.3 L165.0 530.2 L166.0 530.2 L166.0 530.3 L167.0 530.3 L167.0 530.2 L168.0 530.2 L168.0 528.5 L169.0 528.5 L169.0 530.4 L170.0 530.4 L170.0 529.8 L171.0 529.8 L171.0 529.8 L172.0 529.8 L172.0 530.0 L173.0 530.0 L173.0 529.7 L174.0 529.7 L174.0 529.6 L175.0 529.6 L175.0 529.9 L176.0 529.9 L176.0 529.0 L177.0 529.0 L177.0 529.9 L178.0 529.9 L178.0 529.6 L179.0 529.6 L179.0 528.6 L180.0 528.6 L180.0 528.6 L181.0 528.6 L181.0 529.2 L182.0 529.2 L182.0 530.7 L183.0 530.7 L183.0 528.4 L184.0 528.4 L184.0 529.6 L185.0 529.6 L185.0 529.3 L186.0 529.3 L186.0 529.4 L187.0 529.4 L187.0 529.7 L188.0 529.7 L188.0 528.8 L189.0 528.8 L189.0 529.9 L190.0 529.9 L190.0 529.8 L191.0 529.8 L191.0 530.0 L192.0 530.0 L192.0 528.9 L193.0 528.9 L193.0 529.3 L194.0 529.3 L194.0 529.6 L195.0 529.6 L195.0 529.7 L196.0 529.7 L196.0 529.3 L197.0 529.3 L197.0 529.8 L198.0 529.8 L198.0 529.9 L199.0 529.9 L199.0 528.5 L200.0 528.5 L200.0 529.8 L201.0 529.8 L201.0 529.8 L202.0 529.8 L202.0 529.0 L203.0 529.0 L203.0 527.3 L204.0 527.3 L204.0 528.4 L205.0 528.4 L205.0 530.5 L206.0 530.5 L206.0 530.1 L207.0 530.1 L207.0 530.1 L208.0 530.1 L208.0 530.0 L209.0 530.0 L209.0 529.4 L210.0 529.4 L210.0 527.3 L211.0 527.3 L211.0 529.6 L212.0 529.6 L212.0 530.2 L213.0 530.2 L213.0 530.7 L214.0 530.7 L214.0 530.1 L215.0 530.1 L215.0 529.7 L216.0 529.7 L216.0 529.3 L217.0 529.3 L217.0 529.4 L218.0 529.4 L218.0 530.5 L219.0 530.5 L219.0 529.3 L220.0 529.3 L220.0 530.0 L221.0 530.0 L221.0 529.8 L222.0 529.8 L222.0 529.5 L223.0 529.5 L223.0 531.0 L224.0 531.0 L224.0 530.5 L225.0 530.5 L225.0 530.8 L226.0 530.8 L226.0 528.3 L227.0 528.3 L227.0 528.5 L228.0 528.5 L228.0 529.5 L229.0 529.5 L229.0 530.0 L230.0 530.0 L230.0 527.5 L231.0 527.5 L231.0 529.1 L232.0 529.1 L232.0 528.6 L233.0 528.6 L233.0 526.6 L234.0 526.6 L234.0 527.1 L235.0 527.1 L235.0 529.0 L236.0 529.0 L236.0 528.7 L237.0 528.7 L237.0 528.6 L238.0 528.6 L238.0 527.3 L239.0 527.3 L239.0 527.2 L240.0 527.2 L240.0 529.4 L241.0 529.4 L241.0 529.0 L242.0 529.0 L242.0 529.1 L243.0 529.1 L243.0 529.1 L244.0 529.1 L244.0 526.9 L245.0 526.9 L245.0 528.7 L246.0 528.7 L246.0 528.0 L247.0 528.0 L247.0 529.0 L248.0 529.0 L248.0 526.6 L249.0 526.6 L249.0 529.6 L250.0 529.6 L250.0 529.3 L251.0 529.3 L251.0 526.8 L252.0 526.8 L252.0 529.2 L253.0 529.2 L253.0 528.8 L254.0 528.8 L254.0 528.6 L255.0 528.6 L255.0 528.4 L256.0 528.4 L256.0 529.0 L257.0 529.0 L257.0 527.4 L258.0 527.4 L258.0 529.2 L259.0 529.2 L259.0 529.2 L260.0 529.2 L260.0 528.9 L261.0 528.9 L261.0 529.0 L262.0 529.0 L262.0 528.9 L263.0 528.9 L263.0 527.0 L264.0 527.0 L264.0 528.3 L265.0 528.3 L265.0 528.7 L266.0 528.7 L266.0 526.9 L267.0 526.9 L267.0 526.8 L268.0 526.8 L268.0 529.1 L269.0 529.1 L269.0 528.5 L270.0 528.5 L270.0 529.0 L271.0 529.0 L271.0 529.6 L272.0 529.6 L272.0 528.0 L273.0 528.0 L273.0 529.2 L274.0 529.2 L274.0 527.8 L275.0 527.8 L275.0 530.0 L276.0 530.0 L276.0 527.7 L277.0 527.7 L277.0 529.2 L278.0 529.2 L278.0 530.1 L279.0 530.1 L279.0 529.3 L280.0 529.3 L280.0 527.3 L281.0 527.3 L281.0 528.4 L282.0 528.4 L282.0 528.9 L283.0 528.9 L283.0 528.9 L284.0 528.9 L284.0 528.6 L285.0 528.6 L285.0 528.9 L286.0 528.9 L286.0 526.8 L287.0 526.8 L287.0 528.4 L288.0 528.4 L288.0 528.5 L289.0 528.5 L289.0 529.2 L290.0 529.2 L290.0 529.4 L291.0 529.4 L291.0 529.0 L292.0 529.0 L292.0 529.3 L293.0 529.3 L293.0 529.5 L294.0 529.5 L294.0 529.0 L295.0 529.0 L295.0 528.4 L296.0 528.4 L296.0 529.4 L297.0 529.4 L297.0 529.6 L298.0 529.6 L298.0 529.4 L299.0 529.4 L299.0 529.6 L300.0 529.6 L300.0 530.5 L301.0 530.5 L301.0 530.2 L302.0 530.2 L302.0 529.8 L303.0 529.8 L303.0 527.6 L304.0 527.6 L304.0 528.6 L305.0 528.6 L305.0 529.8 L306.0 529.8 L306.0 529.7 L307.0 529.7 L307.0 529.2 L308.0 529.2 L308.0 529.9 L309.0 529.9 L309.0 530.1 L310.0 530.1 L310.0 529.9 L311.0 529.9 L311.0 529.0 L312.0 529.0 L312.0 530.1 L313.0 530.1 L313.0 529.5 L314.0 529.5 L314.0 527.9 L315.0 527.9 L315.0 529.3 L316.0 529.3 L316.0 529.8 L317.0 529.8 L317.0 530.0 L318.0 530.0 L318.0 529.7 L319.0 529.7 L319.0 529.8 L320.0 529.8 L320.0 530.2 L321.0 530.2 L321.0 530.5 L322.0 530.5 L322.0 529.9 L323.0 529.9 L323.0 530.4 L324.0 530.4 L324.0 529.8 L325.0 529.8 L325.0 530.0 L326.0 530.0 L326.0 529.8 L327.0 529.8 L327.0 529.2 L328.0 529.2 L328.0 529.1 L329.0 529.1 L329.0 527.2 L330.0 527.2 L330.0 530.0 L331.0 530.0 L331.0 528.1 L332.0 528.1 L332.0 529.7 L333.0 529.7 L333.0 529.9 L334.0 529.9 L334.0 527.6 L335.0 527.6 L335.0 529.4 L336.0 529.4 L336.0 527.8 L337.0 527.8 L337.0 527.7 L338.0 527.7 L338.0 529.3 L339.0 529.3 L339.0 529.6 L340.0 529.6 L340.0 526.6 L341.0 526.6 L341.0 529.5 L342.0 529.5 L342.0 529.3 L343.0 529.3 L343.0 527.7 L344.0 527.7 L344.0 529.3 L345.0 529.3 L345.0 529.3 L346.0 529.3 L346.0 527.4 L347.0 527.4 L347.0 528.2 L348.0 528.2 L348.0 529.0 L349.0 529.0 L349.0 529.9 L350.0 529.9 L350.0 529.0 L351.0 529.0 L351.0 530.0 L352.0 530.0 L352.0 530.0 L353.0 530.0 L353.0 529.6 L354.0 529.6 L354.0 528.8 L355.0 528.8 L355.0 527.3 L356.0 527.3 L356.0 529.2 L357.0 529.2 L357.0 528.9 L358.0 528.9 L358.0 528.2 L359.0 528.2 L359.0 529.5 L360.0 529.5 L360.0 529.5 L361.0 529.5 L361.0 529.4 L362.0 529.4 L362.0 529.5 L363.0 529.5 L363.0 527.7 L364.0 527.7 L364.0 529.8 L365.0 529.8 L365.0 528.1 L366.0 528.1 L366.0 529.6 L367.0 529.6 L367.0 529.4 L368.0 529.4 L368.0 527.2 L369.0 527.2 L369.0 529.6 L370.0 529.6 L370.0 529.8 L371.0 529.8 L371.0 529.2 L372.0 529.2 L372.0 529.5 L373.0 529.5 L373.0 529.9 L374.0 529.9 L374.0 529.3 L375.0 529.3 L375.0 529.1 L376.0 529.1 L376.0 528.8 L377.0 528.8 L377.0 529.6 L378.0 529.6 L378.0 529.4 L379.0 529.4 L379.0 529.5 L380.0 529.5 L380.0 527.9 L381.0 527.9 L381.0 528.8 L382.0 528.8 L382.0 527.4 L383.0 527.4 L383.0 528.1 L384.0 528.1 L384.0 529.3 L385.0 529.3 L385.0 527.6 L386.0 527.6 L386.0 529.4 L387.0 529.4 L387.0 527.0 L388.0 527.0 L388.0 529.4 L389.0 529.4 L389.0 529.3 L390.0 529.3 L390.0 529.5 L391.0 529.5 L391.0 529.2 L392.0 529.2 L392.0 527.4 L393.0 527.4 L393.0 529.1 L394.0 529.1 L394.0 528.5 L395.0 528.5 L395.0 527.8 L396.0 527.8 L396.0 529.4 L397.0 529.4 L397.0 530.0 L398.0 530.0 L398.0 527.6 L399.0 527.6 L399.0 530.3 L400.0 530.3 L400.0 530.1 L401.0 530.1 L401.0 530.4 L402.0 530.4 L402.0 529.9 L403.0 529.9 L403.0 529.9 L404.0 529.9 L404.0 529.2 L405.0 529.2 L405.0 529.1 L406.0 529.1 L406.0 530.0 L407.0 530.0 L407.0 529.1 L408.0 529.1 L408.0 529.2 L409.0 529.2 L409.0 530.0 L410.0 530.0 L410.0 527.7 L411.0 527.7 L411.0 529.8 L412.0 529.8 L412.0 528.6 L413.0 528.6 L413.0 530.0 L414.0 530.0 L414.0 530.2 L415.0 530.2 L415.0 529.8 L416.0 529.8 L416.0 529.9 L417.0 529.9 L417.0 528.5 L418.0 528.5 L418.0 527.8 L419.0 527.8 L419.0 529.6 L420.0 529.6 L420.0 529.4 L421.0 529.4 L421.0 529.4 L422.0 529.4 L422.0 528.2 L423.0 528.2 L423.0 529.2 L424.0 529.2 L424.0 529.4 L425.0 529.4 L425.0 529.5 L426.0 529.5 L426.0 529.1 L427.0 529.1 L427.0 529.9 L428.0 529.9 L428.0 528.1 L429.0 528.1 L429.0 529.7 L430.0 529.7 L430.0 528.2 L431.0 528.2 L431.0 529.9 L432.0 529.9 L432.0 528.9 L433.0 528.9 L433.0 528.3 L434.0 528.3 L434.0 528.9 L435.0 528.9 L435.0 529.0 L436.0 529.0 L436.0 529.0 L437.0 529.0 L437.0 528.7 L438.0 528.7 L438.0 529.4 L439.0 529.4 L439.0 529.7 L440.0 529.7 L440.0 528.1 L441.0 528.1 L441.0 528.7 L442.0 528.7 L442.0 529.4 L443.0 529.4 L443.0 529.4 L444.0 529.4 L444.0 529.2 L445.0 529.2 L445.0 529.2 L446.0 529.2 L446.0 528.6 L447.0 528.6 L447.0 527.1 L448.0 527.1 L448.0 529.3 L449.0 529.3 L449.0 528.4 L450.0 528.4 L450.0 528.4 L451.0 528.4 L451.0 528.1 L452.0 528.1 L452.0 529.8 L453.0 529.8 L453.0 528.6 L454.0 528.6 L454.0 527.4 L455.0 527.4 L455.0 529.8 L456.0 529.8 L456.0 527.5 L457.0 527.5 L457.0 529.0 L458.0 529.0 L458.0 528.5 L459.0 528.5 L459.0 529.2 L460.0 529.2 L460.0 529.0 L461.0 529.0 L461.0 529.8 L462.0 529.8 L462.0 530.1 L463.0 530.1 L463.0 527.7 L464.0 527.7 L464.0 530.2 L465.0 530.2 L465.0 527.9 L466.0 527.9 L466.0 529.9 L467.0 529.9 L467.0 528.0 L468.0 528.0 L468.0 529.4 L469.0 529.4 L469.0 529.0 L470.0 529.0 L470.0 529.7 L471.0 529.7 L471.0 529.9 L472.0 529.9 L472.0 527.4 L473.0 527.4 L473.0 528.7 L474.0 528.7 L474.0 530.2 L475.0 530.2 L475.0 530.2 L476.0 530.2 L476.0 530.3 L477.0 530.3 L477.0 528.0 L478.0 528.0 L478.0 529.9 L479.0 529.9 L479.0 527.9 L480.0 527.9 L480.0 527.8 L481.0 527.8 L481.0 527.7 L482.0 527.7 L482.0 529.6 L483.0 529.6 L483.0 529.8 L484.0 529.8 L484.0 529.9 L485.0 529.9 L485.0 529.9 L486.0 529.9 L486.0 529.3 L487.0 529.3 L487.0 529.4 L488.0 529.4 L488.0 529.9 L489.0 529.9 L489.0 529.7 L490.0 529.7 L490.0 529.3 L491.0 529.3 L491.0 529.4 L492.0 529.4 L492.0 529.4 L493.0 529.4 L493.0 527.1 L494.0 527.1 L494.0 527.1 L495.0 527.1 L495.0 529.7 L496.0 529.7 L496.0 529.4 L497.0 529.4 L497.0 529.6 L498.0 529.6 L498.0 530.0 L499.0 530.0 L499.0 530.0 L500.0 530.0 L500.0 530.4 L501.0 530.4 L501.0 530.0 L502.0 530.0 L502.0 530.5 L503.0 530.5 L503.0 530.5 L504.0 530.5 L504.0 529.6 L505.0 529.6 L505.0 529.6 L506.0 529.6 L506.0 530.1 L507.0 530.1 L507.0 529.6 L508.0 529.6 L508.0 529.7 L509.0 529.7 L509.0 526.9 L510.0 526.9 L510.0 529.5 L511.0 529.5 L511.0 528.8 L512.0 528.8 L512.0 529.4 L513.0 529.4 L513.0 529.3 L514.0 529.3 L514.0 529.3 L515.0 529.3 L515.0 529.1 L516.0 529.1 L516.0 529.0 L517.0 529.0 L517.0 529.9 L518.0 529.9 L518.0 529.0 L519.0 529.0 L519.0 530.1 L520.0 530.1 L520.0 530.1 L521.0 530.1 L521.0 529.7 L522.0 529.7 L522.0 528.6 L523.0 528.6 L523.0 528.4 L524.0 528.4 L524.0 530.2 L525.0 530.2 L525.0 529.6 L526.0 529.6 L526.0 529.8 L527.0 529.8 L527.0 528.1 L528.0 528.1 L528.0 529.8 L529.0 529.8 L529.0 529.6 L530.0 529.6 L530.0 528.1 L531.0 528.1 L531.0 529.3 L532.0 529.3 L532.0 529.9 L533.0 529.9 L533.0 529.5 L534.0 529.5 L534.0 527.5 L535.0 527.5 L535.0 529.8 L536.0 529.8 L536.0 528.2 L537.0 528.2 L537.0 529.2 L538.0 529.2 L538.0 528.9 L539.0 528.9 L539.0 528.8 L540.0 528.8 L540.0 528.7 L541.0 528.7 L541.0 527.3 L542.0 527.3 L542.0 528.6 L543.0 528.6 L543.0 528.3 L544.0 528.3 L544.0 529.3 L545.0 529.3 L545.0 529.6 L546.0 529.6 L546.0 529.5 L547.0 529.5 L547.0 528.5 L548.0 528.5 L548.0 528.6 L549.0 528.6 L549.0 529.2 L550.0 529.2 L550.0 529.3 L551.0 529.3 L551.0 529.2 L552.0 529.2 L552.0 529.6 L553.0 529.6 L553.0 528.0 L554.0 528.0 L554.0 528.8 L555.0 528.8 L555.0 528.7 L556.0 528.7 L556.0 526.9 L557.0 526.9 L557.0 527.0 L558.0 527.0 L558.0 529.1 L559.0 529.1 L559.0 528.2 L560.0 528.2 L560.0 529.7 L561.0 529.7 L561.0 529.2 L562.0 529.2 L562.0 530.0 L563.0 530.0 L563.0 529.4 L564.0 529.4 L564.0 530.1 L565.0 530.1 L565.0 529.9 L566.0 529.9 L566.0 529.6 L567.0 529.6 L567.0 529.6 L568.0 529.6 L568.0 528.0 L569.0 528.0 L569.0 527.3 L570.0 527.3 L570.0 529.6 L571.0 529.6 L571.0 530.2 L572.0 530.2 L572.0 530.2 L573.0 530.2 L573.0 530.1 L574.0 530.1 L574.0 529.5 L575.0 529.5 L575.0 529.7 L576.0 529.7 L576.0 529.4 L577.0 529.4 L577.0 529.7 L578.0 529.7 L578.0 530.1 L579.0 530.1 L579.0 529.9 L580.0 529.9 L580.0 527.5 L581.0 527.5 L581.0 528.3 L582.0 528.3 L582.0 529.6 L583.0 529.6 L583.0 528.4 L584.0 528.4 L584.0 529.6 L585.0 529.6 L585.0 529.0 L586.0 529.0 L586.0 529.3 L587.0 529.3 L587.0 529.1 L588.0 529.1 L588.0 527.0 L589.0 527.0 L589.0 528.9 L590.0 528.9 L590.0 529.0 L591.0 529.0 L591.0 529.0 L592.0 529.0 L592.0 529.5 L593.0 529.5 L593.0 528.6 L594.0 528.6 L594.0 529.4 L595.0 529.4 L595.0 529.6 L596.0 529.6 L596.0 529.4 L597.0 529.4 L597.0 526.9 L598.0 526.9 L598.0 528.6 L599.0 528.6 L599.0 529.1 L600.0 529.1 L600.0 528.5 L601.0 528.5 L601.0 528.8 L602.0 528.8 L602.0 529.2 L603.0 529.2 L603.0 529.4 L604.0 529.4 L604.0 529.6 L605.0 529.6 L605.0 527.5 L606.0 527.5 L606.0 528.4 L607.0 528.4 L607.0 529.1 L608.0 529.1 L608.0 529.4 L609.0 529.4 L609.0 529.6 L610.0 529.6 L610.0 529.5 L611.0 529.5 L611.0 529.2 L612.0 529.2 L612.0 528.4 L613.0 528.4 L613.0 529.6 L614.0 529.6 L614.0 530.0 L615.0 530.0 L615.0 528.0 L616.0 528.0 L616.0 529.4 L617.0 529.4 L617.0 529.5 L618.0 529.5 L618.0 529.0 L619.0 529.0 L619.0 528.6 L620.0 528.6 L620.0 529.2 L621.0 529.2 L621.0 529.6 L622.0 529.6 L622.0 527.2 L623.0 527.2 L623.0 527.1 L624.0 527.1 L624.0 528.8 L625.0 528.8 L625.0 529.3 L626.0 529.3 L626.0 528.6 L627.0 528.6 L627.0 529.3 L628.0 529.3 L628.0 529.0 L629.0 529.0 L629.0 527.8 L630.0 527.8 L630.0 529.0 L631.0 529.0 L631.0 529.7 L632.0 529.7 L632.0 527.3 L633.0 527.3 L633.0 527.9 L634.0 527.9 L634.0 527.7 L635.0 527.7 L635.0 527.2 L636.0 527.2 L636.0 528.1 L637.0 528.1 L637.0 526.6 L638.0 526.6 L638.0 528.6 L639.0 528.6 L639.0 529.4 L640.0 529.4 L640.0 529.2 L641.0 529.2 L641.0 528.9 L642.0 528.9 L642.0 529.5 L643.0 529.5 L643.0 529.4 L644.0 529.4 L644.0 527.0 L645.0 527.0 L645.0 529.3 L646.0 529.3 L646.0 529.5 L647.0 529.5 L647.0 529.5 L648.0 529.5 L648.0 526.0 L649.0 526.0 L649.0 527.7 L650.0 527.7 L650.0 527.9 L651.0 527.9 L651.0 528.6 L652.0 528.6 L652.0 529.5 L653.0 529.5 L653.0 528.2 L654.0 528.2 L654.0 529.3 L655.0 529.3 L655.0 529.0 L656.0 529.0 L656.0 529.7 L657.0 529.7 L657.0 528.8 L658.0 528.8 L658.0 529.3 L659.0 529.3 L659.0 527.3 L660.0 527.3 L660.0 529.7 L661.0 529.7 L661.0 530.3 L662.0 530.3 L662.0 529.3 L663.0 529.3 L663.0 528.0 L664.0 528.0 L664.0 529.8 L665.0 529.8 L665.0 527.7 L666.0 527.7 L666.0 530.0 L667.0 530.0 L667.0 529.9 L668.0 529.9 L668.0 530.3 L669.0 530.3 L669.0 529.7 L670.0 529.7 L670.0 529.6 L671.0 529.6 L671.0 529.7 L672.0 529.7 L672.0 527.2 L673.0 527.2 L673.0 529.2 L674.0 529.2 L674.0 529.9 L675.0 529.9 L675.0 530.0 L676.0 530.0 L676.0 529.5 L677.0 529.5 L677.0 529.6 L678.0 529.6 L678.0 529.4 L679.0 529.4 L679.0 526.4 L680.0 526.4 L680.0 527.9 L681.0 527.9 L681.0 529.8 L682.0 529.8 L682.0 528.7 L683.0 528.7 L683.0 529.0 L684.0 529.0 L684.0 528.8 L685.0 528.8 L685.0 529.6 L686.0 529.6 L686.0 528.9 L687.0 528.9 L687.0 529.6 L688.0 529.6 L688.0 529.4 L689.0 529.4 L689.0 528.5 L690.0 528.5 L690.0 529.2 L691.0 529.2 L691.0 529.0 L692.0 529.0 L692.0 527.4 L693.0 527.4 L693.0 529.6 L694.0 529.6 L694.0 529.5 L695.0 529.5 L695.0 527.2 L696.0 527.2 L696.0 529.2 L697.0 529.2 L697.0 529.4 L698.0 529.4 L698.0 529.4 L699.0 529.4 L699.0 529.2 L700.0 529.2 L700.0 529.4 L701.0 529.4 L701.0 529.9 L702.0 529.9 L702.0 529.7 L703.0 529.7 L703.0 529.1 L704.0 529.1 L704.0 528.4 L705.0 528.4 L705.0 529.6 L706.0 529.6 L706.0 529.3 L707.0 529.3 L707.0 528.2 L708.0 528.2 L708.0 529.9 L709.0 529.9 L709.0 529.4 L710.0 529.4 L710.0 529.4 L711.0 529.4 L711.0 529.8 L712.0 529.8 L712.0 529.2 L713.0 529.2 L713.0 528.9 L714.0 528.9 L714.0 529.4 L715.0 529.4 L715.0 529.2 L716.0 529.2 L716.0 528.1 L717.0 528.1 L717.0 527.2 L718.0 527.2 L718.0 529.3 L719.0 529.3 L719.0 529.6 L720.0 529.6 L720.0 530.0 L721.0 530.0 L721.0 529.2 L722.0 529.2 L722.0 529.8 L723.0 529.8 L723.0 528.5 L724.0 528.5 L724.0 528.8 L725.0 528.8 L725.0 528.8 L726.0 528.8 L726.0 529.8 L727.0 529.8 L727.0 529.1 L728.0 529.1 L728.0 528.7 L729.0 528.7 L729.0 530.3 L730.0 530.3 L730.0 529.7 L731.0 529.7 L731.0 528.1 L732.0 528.1 L732.0 530.3 L733.0 530.3 L733.0 530.3 L734.0 530.3 L734.0 530.2 L735.0 530.2 L735.0 530.0 L736.0 530.0 L736.0 529.7 L737.0 529.7 L737.0 528.5 L738.0 528.5 L738.0 530.4 L739.0 530.4 L739.0 529.7 L740.0 529.7 L740.0 527.9 L741.0 527.9 L741.0 529.4 L742.0 529.4 L742.0 529.7 L743.0 529.7 L743.0 530.1 L744.0 530.1 L744.0 529.8 L745.0 529.8 L745.0 530.6 L746.0 530.6 L746.0 529.5 L747.0 529.5 L747.0 530.3 L748.0 530.3 L748.0 530.1 L749.0 530.1 L749.0 529.4 L750.0 529.4 L750.0 529.9 L751.0 529.9 L751.0 528.3 L752.0 528.3 L752.0 530.4 L753.0 530.4 L753.0 530.3 L754.0 530.3 L754.0 530.3 L755.0 530.3 L755.0 530.0 L756.0 530.0 L756.0 528.6 L757.0 528.6 L757.0 529.2 L758.0 529.2 L758.0 529.8 L759.0 529.8 L759.0 529.0 L760.0 529.0 L760.0 527.5 L761.0 527.5 L761.0 528.8 L762.0 528.8 L762.0 529.0 L763.0 529.0 L763.0 528.6 L764.0 528.6 L764.0 529.2 L765.0 529.2 L765.0 528.6 L766.0 528.6 L766.0 529.0 L767.0 529.0 L767.0 526.5 L768.0 526.5 L768.0 529.5 L769.0 529.5 L769.0 529.2 L770.0 529.2 L770.0 526.6 L771.0 526.6 L771.0 529.1 L772.0 529.1 L772.0 528.6 L773.0 528.6 L773.0 527.7 L774.0 527.7 L774.0 529.1 L775.0 529.1 L775.0 529.0 L776.0 529.0 L776.0 529.4 L777.0 529.4 L777.0 529.4 L778.0 529.4 L778.0 529.1 L779.0 529.1 L779.0 528.1 L780.0 528.1 L780.0 529.5 L781.0 529.5 L781.0 529.3 L782.0 529.3 L782.0 528.9 L783.0 528.9 L783.0 526.8 L784.0 526.8 L784.0 527.3 L785.0 527.3 L785.0 528.0 L786.0 528.0 L786.0 528.5 L787.0 528.5 L787.0 528.1 L788.0 528.1 L788.0 527.7 L789.0 527.7 L789.0 528.5 L790.0 528.5 L790.0 528.5 L791.0 528.5 L791.0 528.8 L792.0 528.8 L792.0 527.5 L793.0 527.5 L793.0 528.7 L794.0 528.7 L794.0 528.2 L795.0 528.2 L795.0 529.0 L796.0 529.0 L796.0 528.6 L797.0 528.6 L797.0 528.8 L798.0 528.8 L798.0 529.1 L799.0 529.1 L799.0 528.2 L800.0 528.2 L800.0 528.8 L801.0 528.8 L801.0 529.6 L802.0 529.6 L802.0 529.5 L803.0 529.5 L803.0 530.0 L804.0 530.0 L804.0 529.9 L805.0 529.9 L805.0 527.9 L806.0 527.9 L806.0 527.5 L807.0 527.5 L807.0 529.4 L808.0 529.4 L808.0 528.0 L809.0 528.0 L809.0 529.7 L810.0 529.7 L810.0 527.3 L811.0 527.3 L811.0 529.6 L812.0 529.6 L812.0 528.6 L813.0 528.6 L813.0 528.8 L814.0 528.8 L814.0 529.2 L815.0 529.2 L815.0 529.1 L816.0 529.1 L816.0 529.1 L817.0 529.1 L817.0 528.9 L818.0 528.9 L818.0 529.6 L819.0 529.6 L819.0 528.6 L820.0 528.6 L820.0 528.9 L821.0 528.9 L821.0 529.6 L822.0 529.6 L822.0 529.7 L823.0 529.7 L823.0 527.1 L824.0 527.1 L824.0 528.1 L825.0 528.1 L825.0 527.7 L826.0 527.7 L826.0 529.4 L827.0 529.4 L827.0 529.7 L828.0 529.7 L828.0 529.6 L829.0 529.6 L829.0 528.5 L830.0 528.5 L830.0 529.3 L831.0 529.3 L831.0 529.8 L832.0 529.8 L832.0 529.5 L833.0 529.5 L833.0 529.7 L834.0 529.7 L834.0 529.4 L835.0 529.4 L835.0 528.8 L836.0 528.8 L836.0 530.0 L837.0 530.0 L837.0 528.3 L838.0 528.3 L838.0 530.0 L839.0 530.0 L839.0 529.9 L840.0 529.9 L840.0 529.6 L841.0 529.6 L841.0 529.4 L842.0 529.4 L842.0 530.2 L843.0 530.2 L843.0 529.8 L844.0 529.8 L844.0 529.9 L845.0 529.9 L845.0 530.0 L846.0 530.0 L846.0 530.1 L847.0 530.1 L847.0 529.9 L848.0 529.9 L848.0 527.8 L849.0 527.8 L849.0 529.5 L850.0 529.5 L850.0 529.7 L851.0 529.7 L851.0 528.9 L852.0 528.9 L852.0 530.0 L853.0 530.0 L853.0 529.2 L854.0 529.2 L854.0 529.8 L855.0 529.8 L855.0 527.4 L856.0 527.4 L856.0 529.9 L857.0 529.9 L857.0 527.7 L858.0 527.7 L858.0 528.9 L859.0 528.9 L859.0 528.4 L860.0 528.4 L860.0 529.3 L861.0 529.3 L861.0 530.2 L862.0 530.2 L862.0 530.0 L863.0 530.0 L863.0 530.1 L864.0 530.1 L864.0 530.3 L865.0 530.3 L865.0 528.0 L866.0 528.0 L866.0 530.0 L867.0 530.0 L867.0 530.0 L868.0 530.0 L868.0 529.9 L869.0 529.9 L869.0 527.7 L870.0 527.7 L870.0 529.5 L871.0 529.5 L871.0 529.6 L872.0 529.6 L872.0 527.6 L873.0 527.6 L873.0 529.9 L874.0 529.9 L874.0 529.6 L875.0 529.6 L875.0 528.0 L876.0 528.0 L876.0 530.0 L877.0 530.0 L877.0 528.8 L878.0 528.8 L878.0 529.5 L879.0 529.5 L879.0 530.2 L880.0 530.2 L880.0 528.1 L881.0 528.1 L881.0 529.2 L882.0 529.2 L882.0 527.4 L883.0 527.4 L883.0 529.8 L884.0 529.8 L884.0 530.3 L885.0 530.3 L885.0 529.4 L886.0 529.4 L886.0 529.7 L887.0 529.7 L887.0 528.9 L888.0 528.9 L888.0 529.0 L889.0 529.0 L889.0 528.6 L890.0 528.6 L890.0 529.2 L891.0 529.2 L891.0 529.5 L892.0 529.5 L892.0 528.1 L893.0 528.1 L893.0 535.6 L892.0 535.6 L892.0 537.3 L891.0 537.3 L891.0 536.6 L890.0 536.6 L890.0 535.9 L889.0 535.9 L889.0 537.3 L888.0 537.3 L888.0 536.1 L887.0 536.1 L887.0 535.8 L886.0 535.8 L886.0 535.4 L885.0 535.4 L885.0 536.6 L884.0 536.6 L884.0 537.7 L883.0 537.7 L883.0 535.6 L882.0 535.6 L882.0 537.6 L881.0 537.6 L881.0 537.8 L880.0 537.8 L880.0 536.9 L879.0 536.9 L879.0 537.6 L878.0 537.6 L878.0 535.6 L877.0 535.6 L877.0 535.5 L876.0 535.5 L876.0 535.5 L875.0 535.5 L875.0 535.6 L874.0 535.6 L874.0 535.3 L873.0 535.3 L873.0 537.7 L872.0 537.7 L872.0 535.7 L871.0 535.7 L871.0 536.8 L870.0 536.8 L870.0 536.3 L869.0 536.3 L869.0 536.2 L868.0 536.2 L868.0 535.8 L867.0 535.8 L867.0 536.4 L866.0 536.4 L866.0 538.8 L865.0 538.8 L865.0 536.1 L864.0 536.1 L864.0 535.5 L863.0 535.5 L863.0 536.2 L862.0 536.2 L862.0 536.6 L861.0 536.6 L861.0 535.7 L860.0 535.7 L860.0 536.1 L859.0 536.1 L859.0 535.9 L858.0 535.9 L858.0 535.9 L857.0 535.9 L857.0 535.9 L856.0 535.9 L856.0 536.7 L855.0 536.7 L855.0 535.6 L854.0 535.6 L854.0 538.3 L853.0 538.3 L853.0 536.8 L852.0 536.8 L852.0 537.6 L851.0 537.6 L851.0 537.9 L850.0 537.9 L850.0 536.7 L849.0 536.7 L849.0 535.4 L848.0 535.4 L848.0 535.5 L847.0 535.5 L847.0 535.4 L846.0 535.4 L846.0 537.8 L845.0 537.8 L845.0 535.6 L844.0 535.6 L844.0 535.6 L843.0 535.6 L843.0 536.0 L842.0 536.0 L842.0 538.6 L841.0 538.6 L841.0 535.7 L840.0 535.7 L840.0 536.3 L839.0 536.3 L839.0 537.8 L838.0 537.8 L838.0 536.4 L837.0 536.4 L837.0 536.1 L836.0 536.1 L836.0 535.6 L835.0 535.6 L835.0 536.4 L834.0 536.4 L834.0 535.8 L833.0 535.8 L833.0 535.6 L832.0 535.6 L832.0 535.9 L831.0 535.9 L831.0 535.8 L830.0 535.8 L830.0 535.2 L829.0 535.2 L829.0 535.4 L828.0 535.4 L828.0 535.3 L827.0 535.3 L827.0 535.2 L826.0 535.2 L826.0 537.3 L825.0 537.3 L825.0 535.3 L824.0 535.3 L824.0 535.3 L823.0 535.3 L823.0 535.7 L822.0 535.7 L822.0 536.9 L821.0 536.9 L821.0 535.6 L820.0 535.6 L820.0 535.7 L819.0 535.7 L819.0 535.4 L818.0 535.4 L818.0 537.7 L817.0 537.7 L817.0 536.5 L816.0 536.5 L816.0 534.9 L815.0 534.9 L815.0 534.5 L814.0 534.5 L814.0 534.5 L813.0 534.5 L813.0 535.5 L812.0 535.5 L812.0 536.8 L811.0 536.8 L811.0 535.9 L810.0 535.9 L810.0 536.7 L809.0 536.7 L809.0 534.8 L808.0 534.8 L808.0 535.5 L807.0 535.5 L807.0 535.5 L806.0 535.5 L806.0 537.2 L805.0 537.2 L805.0 537.8 L804.0 537.8 L804.0 536.1 L803.0 536.1 L803.0 535.3 L802.0 535.3 L802.0 537.0 L801.0 537.0 L801.0 535.3 L800.0 535.3 L800.0 535.3 L799.0 535.3 L799.0 535.6 L798.0 535.6 L798.0 535.0 L797.0 535.0 L797.0 535.9 L796.0 535.9 L796.0 534.9 L795.0 534.9 L795.0 536.0 L794.0 536.0 L794.0 534.6 L793.0 534.6 L793.0 534.4 L792.0 534.4 L792.0 534.3 L791.0 534.3 L791.0 535.0 L790.0 535.0 L790.0 534.7 L789.0 534.7 L789.0 535.7 L788.0 535.7 L788.0 536.0 L787.0 536.0 L787.0 533.9 L786.0 533.9 L786.0 534.8 L785.0 534.8 L785.0 534.3 L784.0 534.3 L784.0 534.6 L783.0 534.6 L783.0 534.7 L782.0 534.7 L782.0 535.7 L781.0 535.7 L781.0 536.3 L780.0 536.3 L780.0 535.2 L779.0 535.2 L779.0 534.7 L778.0 534.7 L778.0 534.9 L777.0 534.9 L777.0 534.8 L776.0 534.8 L776.0 534.8 L775.0 534.8 L775.0 535.5 L774.0 535.5 L774.0 535.3 L773.0 535.3 L773.0 534.7 L772.0 534.7 L772.0 535.8 L771.0 535.8 L771.0 534.7 L770.0 534.7 L770.0 535.2 L769.0 535.2 L769.0 535.0 L768.0 535.0 L768.0 535.4 L767.0 535.4 L767.0 534.4 L766.0 534.4 L766.0 535.0 L765.0 535.0 L765.0 536.5 L764.0 536.5 L764.0 534.7 L763.0 534.7 L763.0 534.7 L762.0 534.7 L762.0 534.4 L761.0 534.4 L761.0 535.0 L760.0 535.0 L760.0 535.8 L759.0 535.8 L759.0 536.8 L758.0 536.8 L758.0 536.8 L757.0 536.8 L757.0 535.6 L756.0 535.6 L756.0 535.8 L755.0 535.8 L755.0 536.7 L754.0 536.7 L754.0 535.9 L753.0 535.9 L753.0 536.1 L752.0 536.1 L752.0 535.9 L751.0 535.9 L751.0 536.5 L750.0 536.5 L750.0 538.0 L749.0 538.0 L749.0 536.8 L748.0 536.8 L748.0 536.1 L747.0 536.1 L747.0 536.2 L746.0 536.2 L746.0 537.1 L745.0 537.1 L745.0 539.3 L744.0 539.3 L744.0 536.1 L743.0 536.1 L743.0 538.1 L742.0 538.1 L742.0 536.8 L741.0 536.8 L741.0 535.7 L740.0 535.7 L740.0 535.3 L739.0 535.3 L739.0 536.3 L738.0 536.3 L738.0 537.5 L737.0 537.5 L737.0 535.9 L736.0 535.9 L736.0 536.0 L735.0 536.0 L735.0 537.9 L734.0 537.9 L734.0 536.0 L733.0 536.0 L733.0 536.3 L732.0 536.3 L732.0 536.5 L731.0 536.5 L731.0 537.3 L730.0 537.3 L730.0 536.5 L729.0 536.5 L729.0 536.0 L728.0 536.0 L728.0 538.2 L727.0 538.2 L727.0 535.6 L726.0 535.6 L726.0 538.0 L725.0 538.0 L725.0 537.7 L724.0 537.7 L724.0 535.4 L723.0 535.4 L723.0 535.7 L722.0 535.7 L722.0 536.2 L721.0 536.2 L721.0 535.7 L720.0 535.7 L720.0 535.4 L719.0 535.4 L719.0 535.6 L718.0 535.6 L718.0 535.1 L717.0 535.1 L717.0 535.1 L716.0 535.1 L716.0 534.9 L715.0 534.9 L715.0 535.1 L714.0 535.1 L714.0 535.1 L713.0 535.1 L713.0 536.9 L712.0 536.9 L712.0 535.2 L711.0 535.2 L711.0 535.8 L710.0 535.8 L710.0 535.8 L709.0 535.8 L709.0 535.2 L708.0 535.2 L708.0 535.7 L707.0 535.7 L707.0 535.5 L706.0 535.5 L706.0 536.1 L705.0 536.1 L705.0 535.6 L704.0 535.6 L704.0 535.7 L703.0 535.7 L703.0 537.0 L702.0 537.0 L702.0 538.5 L701.0 538.5 L701.0 537.1 L700.0 537.1 L700.0 535.5 L699.0 535.5 L699.0 535.1 L698.0 535.1 L698.0 535.6 L697.0 535.6 L697.0 535.7 L696.0 535.7 L696.0 535.8 L695.0 535.8 L695.0 535.5 L694.0 535.5 L694.0 535.7 L693.0 535.7 L693.0 535.2 L692.0 535.2 L692.0 535.2 L691.0 535.2 L691.0 534.7 L690.0 534.7 L690.0 534.8 L689.0 534.8 L689.0 535.1 L688.0 535.1 L688.0 537.2 L687.0 537.2 L687.0 536.1 L686.0 536.1 L686.0 535.4 L685.0 535.4 L685.0 535.7 L684.0 535.7 L684.0 538.6 L683.0 538.6 L683.0 538.3 L682.0 538.3 L682.0 535.8 L681.0 535.8 L681.0 535.9 L680.0 535.9 L680.0 535.3 L679.0 535.3 L679.0 536.5 L678.0 536.5 L678.0 535.2 L677.0 535.2 L677.0 536.1 L676.0 536.1 L676.0 537.3 L675.0 537.3 L675.0 537.4 L674.0 537.4 L674.0 535.3 L673.0 535.3 L673.0 536.7 L672.0 536.7 L672.0 537.4 L671.0 537.4 L671.0 535.8 L670.0 535.8 L670.0 536.2 L669.0 536.2 L669.0 535.8 L668.0 535.8 L668.0 535.6 L667.0 535.6 L667.0 536.0 L666.0 536.0 L666.0 538.0 L665.0 538.0 L665.0 535.3 L664.0 535.3 L664.0 535.3 L663.0 535.3 L663.0 535.4 L662.0 535.4 L662.0 537.5 L661.0 537.5 L661.0 535.2 L660.0 535.2 L660.0 534.9 L659.0 534.9 L659.0 535.2 L658.0 535.2 L658.0 536.5 L657.0 536.5 L657.0 535.3 L656.0 535.3 L656.0 535.0 L655.0 535.0 L655.0 535.1 L654.0 535.1 L654.0 536.5 L653.0 536.5 L653.0 534.8 L652.0 534.8 L652.0 535.3 L651.0 535.3 L651.0 535.8 L650.0 535.8 L650.0 536.7 L649.0 536.7 L649.0 535.3 L648.0 535.3 L648.0 535.6 L647.0 535.6 L647.0 535.8 L646.0 535.8 L646.0 535.8 L645.0 535.8 L645.0 535.0 L644.0 535.0 L644.0 535.6 L643.0 535.6 L643.0 535.1 L642.0 535.1 L642.0 535.3 L641.0 535.3 L641.0 535.0 L640.0 535.0 L640.0 536.0 L639.0 536.0 L639.0 535.8 L638.0 535.8 L638.0 535.3 L637.0 535.3 L637.0 534.9 L636.0 534.9 L636.0 535.3 L635.0 535.3 L635.0 535.3 L634.0 535.3 L634.0 536.4 L633.0 536.4 L633.0 535.0 L632.0 535.0 L632.0 536.7 L631.0 536.7 L631.0 537.5 L630.0 537.5 L630.0 536.0 L629.0 536.0 L629.0 536.0 L628.0 536.0 L628.0 535.1 L627.0 535.1 L627.0 535.2 L626.0 535.2 L626.0 536.4 L625.0 536.4 L625.0 534.8 L624.0 534.8 L624.0 534.8 L623.0 534.8 L623.0 535.3 L622.0 535.3 L622.0 535.2 L621.0 535.2 L621.0 534.9 L620.0 534.9 L620.0 535.1 L619.0 535.1 L619.0 534.5 L618.0 534.5 L618.0 536.3 L617.0 536.3 L617.0 534.9 L616.0 534.9 L616.0 536.0 L615.0 536.0 L615.0 535.7 L614.0 535.7 L614.0 536.1 L613.0 536.1 L613.0 535.7 L612.0 535.7 L612.0 535.7 L611.0 535.7 L611.0 535.5 L610.0 535.5 L610.0 535.0 L609.0 535.0 L609.0 537.3 L608.0 537.3 L608.0 535.5 L607.0 535.5 L607.0 537.0 L606.0 537.0 L606.0 536.0 L605.0 536.0 L605.0 537.9 L604.0 537.9 L604.0 535.4 L603.0 535.4 L603.0 535.9 L602.0 535.9 L602.0 535.1 L601.0 535.1 L601.0 535.7 L600.0 535.7 L600.0 534.9 L599.0 534.9 L599.0 537.2 L598.0 537.2 L598.0 534.8 L597.0 534.8 L597.0 534.9 L596.0 534.9 L596.0 536.3 L595.0 536.3 L595.0 535.5 L594.0 535.5 L594.0 535.9 L593.0 535.9 L593.0 534.9 L592.0 534.9 L592.0 535.8 L591.0 535.8 L591.0 534.7 L590.0 534.7 L590.0 534.8 L589.0 534.8 L589.0 534.5 L588.0 534.5 L588.0 537.4 L587.0 537.4 L587.0 537.8 L586.0 537.8 L586.0 535.2 L585.0 535.2 L585.0 535.6 L584.0 535.6 L584.0 535.6 L583.0 535.6 L583.0 535.7 L582.0 535.7 L582.0 538.7 L581.0 538.7 L581.0 535.5 L580.0 535.5 L580.0 535.5 L579.0 535.5 L579.0 536.0 L578.0 536.0 L578.0 536.2 L577.0 536.2 L577.0 537.1 L576.0 537.1 L576.0 535.4 L575.0 535.4 L575.0 536.4 L574.0 536.4 L574.0 535.8 L573.0 535.8 L573.0 536.1 L572.0 536.1 L572.0 536.9 L571.0 536.9 L571.0 536.2 L570.0 536.2 L570.0 535.7 L569.0 535.7 L569.0 535.1 L568.0 535.1 L568.0 535.6 L567.0 535.6 L567.0 535.6 L566.0 535.6 L566.0 538.9 L565.0 538.9 L565.0 536.6 L564.0 536.6 L564.0 535.3 L563.0 535.3 L563.0 536.2 L562.0 536.2 L562.0 535.2 L561.0 535.2 L561.0 536.0 L560.0 536.0 L560.0 536.9 L559.0 536.9 L559.0 535.2 L558.0 535.2 L558.0 534.6 L557.0 534.6 L557.0 535.4 L556.0 535.4 L556.0 534.9 L555.0 534.9 L555.0 535.3 L554.0 535.3 L554.0 537.0 L553.0 537.0 L553.0 535.3 L552.0 535.3 L552.0 534.9 L551.0 534.9 L551.0 536.5 L550.0 536.5 L550.0 535.2 L549.0 535.2 L549.0 534.9 L548.0 534.9 L548.0 535.8 L547.0 535.8 L547.0 537.2 L546.0 537.2 L546.0 535.2 L545.0 535.2 L545.0 535.6 L544.0 535.6 L544.0 535.4 L543.0 535.4 L543.0 536.6 L542.0 536.6 L542.0 536.5 L541.0 536.5 L541.0 535.3 L540.0 535.3 L540.0 535.3 L539.0 535.3 L539.0 536.3 L538.0 536.3 L538.0 535.6 L537.0 535.6 L537.0 536.5 L536.0 536.5 L536.0 535.4 L535.0 535.4 L535.0 535.3 L534.0 535.3 L534.0 535.8 L533.0 535.8 L533.0 535.9 L532.0 535.9 L532.0 536.4 L531.0 536.4 L531.0 535.4 L530.0 535.4 L530.0 535.6 L529.0 535.6 L529.0 536.0 L528.0 536.0 L528.0 535.9 L527.0 535.9 L527.0 535.7 L526.0 535.7 L526.0 536.4 L525.0 536.4 L525.0 538.5 L524.0 538.5 L524.0 536.7 L523.0 536.7 L523.0 536.6 L522.0 536.6 L522.0 535.9 L521.0 535.9 L521.0 538.0 L520.0 538.0 L520.0 536.2 L519.0 536.2 L519.0 537.5 L518.0 537.5 L518.0 535.6 L517.0 535.6 L517.0 535.2 L516.0 535.2 L516.0 534.5 L515.0 534.5 L515.0 536.3 L514.0 536.3 L514.0 535.2 L513.0 535.2 L513.0 534.8 L512.0 534.8 L512.0 536.6 L511.0 536.6 L511.0 535.6 L510.0 535.6 L510.0 537.0 L509.0 537.0 L509.0 535.4 L508.0 535.4 L508.0 535.5 L507.0 535.5 L507.0 536.9 L506.0 536.9 L506.0 536.4 L505.0 536.4 L505.0 535.5 L504.0 535.5 L504.0 538.7 L503.0 538.7 L503.0 536.5 L502.0 536.5 L502.0 537.2 L501.0 537.2 L501.0 536.8 L500.0 536.8 L500.0 536.1 L499.0 536.1 L499.0 535.9 L498.0 535.9 L498.0 535.3 L497.0 535.3 L497.0 536.2 L496.0 536.2 L496.0 536.6 L495.0 536.6 L495.0 535.4 L494.0 535.4 L494.0 535.4 L493.0 535.4 L493.0 535.8 L492.0 535.8 L492.0 535.6 L491.0 535.6 L491.0 535.4 L490.0 535.4 L490.0 537.2 L489.0 537.2 L489.0 536.4 L488.0 536.4 L488.0 536.1 L487.0 536.1 L487.0 535.8 L486.0 535.8 L486.0 535.9 L485.0 535.9 L485.0 536.0 L484.0 536.0 L484.0 535.9 L483.0 535.9 L483.0 537.8 L482.0 537.8 L482.0 535.2 L481.0 535.2 L481.0 535.5 L480.0 535.5 L480.0 535.7 L479.0 535.7 L479.0 535.4 L478.0 535.4 L478.0 536.1 L477.0 536.1 L477.0 537.0 L476.0 537.0 L476.0 536.6 L475.0 536.6 L475.0 536.0 L474.0 536.0 L474.0 536.6 L473.0 536.6 L473.0 536.7 L472.0 536.7 L472.0 536.1 L471.0 536.1 L471.0 535.7 L470.0 535.7 L470.0 536.5 L469.0 536.5 L469.0 536.2 L468.0 536.2 L468.0 536.2 L467.0 536.2 L467.0 535.9 L466.0 535.9 L466.0 536.4 L465.0 536.4 L465.0 536.3 L464.0 536.3 L464.0 538.2 L463.0 538.2 L463.0 535.5 L462.0 535.5 L462.0 536.1 L461.0 536.1 L461.0 537.4 L460.0 537.4 L460.0 535.1 L459.0 535.1 L459.0 535.4 L458.0 535.4 L458.0 535.3 L457.0 535.3 L457.0 535.3 L456.0 535.3 L456.0 537.1 L455.0 537.1 L455.0 535.8 L454.0 535.8 L454.0 535.4 L453.0 535.4 L453.0 535.1 L452.0 535.1 L452.0 535.7 L451.0 535.7 L451.0 535.0 L450.0 535.0 L450.0 534.7 L449.0 534.7 L449.0 536.4 L448.0 536.4 L448.0 534.6 L447.0 534.6 L447.0 534.8 L446.0 534.8 L446.0 535.2 L445.0 535.2 L445.0 534.8 L444.0 534.8 L444.0 534.9 L443.0 534.9 L443.0 534.7 L442.0 534.7 L442.0 536.4 L441.0 536.4 L441.0 537.7 L440.0 537.7 L440.0 535.9 L439.0 535.9 L439.0 535.1 L438.0 535.1 L438.0 536.0 L437.0 536.0 L437.0 535.2 L436.0 535.2 L436.0 538.2 L435.0 538.2 L435.0 535.2 L434.0 535.2 L434.0 535.9 L433.0 535.9 L433.0 535.1 L432.0 535.1 L432.0 535.6 L431.0 535.6 L431.0 538.1 L430.0 538.1 L430.0 535.8 L429.0 535.8 L429.0 538.5 L428.0 538.5 L428.0 536.4 L427.0 536.4 L427.0 535.7 L426.0 535.7 L426.0 535.4 L425.0 535.4 L425.0 535.7 L424.0 535.7 L424.0 535.1 L423.0 535.1 L423.0 534.8 L422.0 534.8 L422.0 535.7 L421.0 535.7 L421.0 536.0 L420.0 536.0 L420.0 535.5 L419.0 535.5 L419.0 535.4 L418.0 535.4 L418.0 535.0 L417.0 535.0 L417.0 535.7 L416.0 535.7 L416.0 536.3 L415.0 536.3 L415.0 536.3 L414.0 536.3 L414.0 535.9 L413.0 535.9 L413.0 535.8 L412.0 535.8 L412.0 535.7 L411.0 535.7 L411.0 535.8 L410.0 535.8 L410.0 535.9 L409.0 535.9 L409.0 537.6 L408.0 537.6 L408.0 535.1 L407.0 535.1 L407.0 536.4 L406.0 536.4 L406.0 538.0 L405.0 538.0 L405.0 538.5 L404.0 538.5 L404.0 536.7 L403.0 536.7 L403.0 538.4 L402.0 538.4 L402.0 536.6 L401.0 536.6 L401.0 536.3 L400.0 536.3 L400.0 536.3 L399.0 536.3 L399.0 537.0 L398.0 537.0 L398.0 535.8 L397.0 535.8 L397.0 535.8 L396.0 535.8 L396.0 535.9 L395.0 535.9 L395.0 536.5 L394.0 536.5 L394.0 535.3 L393.0 535.3 L393.0 535.4 L392.0 535.4 L392.0 535.1 L391.0 535.1 L391.0 536.2 L390.0 536.2 L390.0 535.7 L389.0 535.7 L389.0 537.8 L388.0 537.8 L388.0 537.1 L387.0 537.1 L387.0 534.9 L386.0 534.9 L386.0 534.9 L385.0 534.9 L385.0 537.2 L384.0 537.2 L384.0 535.6 L383.0 535.6 L383.0 535.2 L382.0 535.2 L382.0 535.4 L381.0 535.4 L381.0 535.7 L380.0 535.7 L380.0 535.7 L379.0 535.7 L379.0 535.7 L378.0 535.7 L378.0 537.3 L377.0 537.3 L377.0 534.8 L376.0 534.8 L376.0 535.1 L375.0 535.1 L375.0 535.9 L374.0 535.9 L374.0 537.7 L373.0 537.7 L373.0 535.4 L372.0 535.4 L372.0 535.7 L371.0 535.7 L371.0 535.7 L370.0 535.7 L370.0 536.9 L369.0 536.9 L369.0 535.4 L368.0 535.4 L368.0 536.5 L367.0 536.5 L367.0 535.6 L366.0 535.6 L366.0 535.7 L365.0 535.7 L365.0 535.6 L364.0 535.6 L364.0 535.3 L363.0 535.3 L363.0 536.4 L362.0 536.4 L362.0 536.8 L361.0 536.8 L361.0 535.1 L360.0 535.1 L360.0 535.1 L359.0 535.1 L359.0 535.1 L358.0 535.1 L358.0 535.5 L357.0 535.5 L357.0 535.3 L356.0 535.3 L356.0 537.3 L355.0 537.3 L355.0 535.1 L354.0 535.1 L354.0 536.4 L353.0 536.4 L353.0 535.9 L352.0 535.9 L352.0 535.7 L351.0 535.7 L351.0 535.8 L350.0 535.8 L350.0 535.7 L349.0 535.7 L349.0 537.4 L348.0 537.4 L348.0 535.2 L347.0 535.2 L347.0 537.6 L346.0 537.6 L346.0 535.4 L345.0 535.4 L345.0 535.5 L344.0 535.5 L344.0 536.1 L343.0 536.1 L343.0 535.0 L342.0 535.0 L342.0 535.1 L341.0 535.1 L341.0 536.2 L340.0 536.2 L340.0 537.1 L339.0 537.1 L339.0 535.8 L338.0 535.8 L338.0 535.5 L337.0 535.5 L337.0 536.2 L336.0 536.2 L336.0 534.9 L335.0 534.9 L335.0 535.1 L334.0 535.1 L334.0 535.6 L333.0 535.6 L333.0 535.7 L332.0 535.7 L332.0 536.2 L331.0 536.2 L331.0 535.5 L330.0 535.5 L330.0 537.6 L329.0 537.6 L329.0 536.1 L328.0 536.1 L328.0 536.3 L327.0 536.3 L327.0 535.7 L326.0 535.7 L326.0 536.4 L325.0 536.4 L325.0 536.4 L324.0 536.4 L324.0 536.4 L323.0 536.4 L323.0 536.1 L322.0 536.1 L322.0 536.2 L321.0 536.2 L321.0 536.0 L320.0 536.0 L320.0 535.9 L319.0 535.9 L319.0 536.0 L318.0 536.0 L318.0 535.9 L317.0 535.9 L317.0 535.4 L316.0 535.4 L316.0 535.4 L315.0 535.4 L315.0 535.4 L314.0 535.4 L314.0 535.4 L313.0 535.4 L313.0 537.5 L312.0 537.5 L312.0 536.7 L311.0 536.7 L311.0 538.9 L310.0 538.9 L310.0 536.4 L309.0 536.4 L309.0 536.3 L308.0 536.3 L308.0 535.3 L307.0 535.3 L307.0 536.0 L306.0 536.0 L306.0 536.8 L305.0 536.8 L305.0 536.0 L304.0 536.0 L304.0 535.8 L303.0 535.8 L303.0 536.6 L302.0 536.6 L302.0 535.9 L301.0 535.9 L301.0 536.0 L300.0 536.0 L300.0 536.3 L299.0 536.3 L299.0 536.3 L298.0 536.3 L298.0 536.3 L297.0 536.3 L297.0 536.0 L296.0 536.0 L296.0 536.1 L295.0 536.1 L295.0 537.8 L294.0 537.8 L294.0 537.2 L293.0 537.2 L293.0 535.2 L292.0 535.2 L292.0 535.2 L291.0 535.2 L291.0 535.3 L290.0 535.3 L290.0 535.2 L289.0 535.2 L289.0 536.9 L288.0 536.9 L288.0 535.2 L287.0 535.2 L287.0 534.8 L286.0 534.8 L286.0 534.9 L285.0 534.9 L285.0 534.7 L284.0 534.7 L284.0 534.7 L283.0 534.7 L283.0 537.3 L282.0 537.3 L282.0 535.5 L281.0 535.5 L281.0 535.2 L280.0 535.2 L280.0 536.1 L279.0 536.1 L279.0 537.1 L278.0 537.1 L278.0 537.5 L277.0 537.5 L277.0 536.3 L276.0 536.3 L276.0 536.1 L275.0 536.1 L275.0 537.7 L274.0 537.7 L274.0 535.7 L273.0 535.7 L273.0 536.1 L272.0 536.1 L272.0 535.3 L271.0 535.3 L271.0 535.5 L270.0 535.5 L270.0 535.0 L269.0 535.0 L269.0 536.7 L268.0 536.7 L268.0 536.5 L267.0 536.5 L267.0 534.8 L266.0 534.8 L266.0 536.8 L265.0 536.8 L265.0 536.7 L264.0 536.7 L264.0 536.2 L263.0 536.2 L263.0 534.6 L262.0 534.6 L262.0 536.5 L261.0 536.5 L261.0 535.0 L260.0 535.0 L260.0 534.8 L259.0 534.8 L259.0 537.2 L258.0 537.2 L258.0 536.4 L257.0 536.4 L257.0 536.3 L256.0 536.3 L256.0 534.6 L255.0 534.6 L255.0 535.0 L254.0 535.0 L254.0 534.4 L253.0 534.4 L253.0 535.5 L252.0 535.5 L252.0 535.2 L251.0 535.2 L251.0 535.1 L250.0 535.1 L250.0 535.0 L249.0 535.0 L249.0 536.2 L248.0 536.2 L248.0 537.4 L247.0 537.4 L247.0 536.2 L246.0 536.2 L246.0 534.9 L245.0 534.9 L245.0 534.9 L244.0 534.9 L244.0 535.9 L243.0 535.9 L243.0 536.7 L242.0 536.7 L242.0 534.8 L241.0 534.8 L241.0 535.4 L240.0 535.4 L240.0 536.8 L239.0 536.8 L239.0 534.9 L238.0 534.9 L238.0 534.6 L237.0 534.6 L237.0 535.1 L236.0 535.1 L236.0 536.2 L235.0 536.2 L235.0 537.0 L234.0 537.0 L234.0 535.9 L233.0 535.9 L233.0 535.7 L232.0 535.7 L232.0 535.1 L231.0 535.1 L231.0 535.2 L230.0 535.2 L230.0 535.6 L229.0 535.6 L229.0 535.7 L228.0 535.7 L228.0 536.0 L227.0 536.0 L227.0 537.0 L226.0 537.0 L226.0 537.2 L225.0 537.2 L225.0 536.8 L224.0 536.8 L224.0 538.4 L223.0 538.4 L223.0 537.2 L222.0 537.2 L222.0 537.5 L221.0 537.5 L221.0 539.5 L220.0 539.5 L220.0 536.6 L219.0 536.6 L219.0 538.9 L218.0 538.9 L218.0 537.0 L217.0 537.0 L217.0 536.7 L216.0 536.7 L216.0 535.9 L215.0 535.9 L215.0 536.0 L214.0 536.0 L214.0 537.9 L213.0 537.9 L213.0 537.3 L212.0 537.3 L212.0 536.7 L211.0 536.7 L211.0 536.0 L210.0 536.0 L210.0 536.3 L209.0 536.3 L209.0 536.1 L208.0 536.1 L208.0 536.7 L207.0 536.7 L207.0 536.2 L206.0 536.2 L206.0 536.6 L205.0 536.6 L205.0 536.4 L204.0 536.4 L204.0 536.4 L203.0 536.4 L203.0 538.3 L202.0 538.3 L202.0 535.7 L201.0 535.7 L201.0 537.3 L200.0 537.3 L200.0 537.0 L199.0 537.0 L199.0 536.9 L198.0 536.9 L198.0 535.8 L197.0 535.8 L197.0 535.6 L196.0 535.6 L196.0 538.8 L195.0 538.8 L195.0 535.6 L194.0 535.6 L194.0 535.3 L193.0 535.3 L193.0 535.9 L192.0 535.9 L192.0 535.7 L191.0 535.7 L191.0 535.8 L190.0 535.8 L190.0 536.3 L189.0 536.3 L189.0 536.9 L188.0 536.9 L188.0 535.3 L187.0 535.3 L187.0 535.9 L186.0 535.9 L186.0 535.8 L185.0 535.8 L185.0 535.4 L184.0 535.4 L184.0 536.1 L183.0 536.1 L183.0 536.3 L182.0 536.3 L182.0 536.4 L181.0 536.4 L181.0 535.7 L180.0 535.7 L180.0 535.8 L179.0 535.8 L179.0 536.6 L178.0 536.6 L178.0 537.7 L177.0 537.7 L177.0 536.3 L176.0 536.3 L176.0 537.6 L175.0 537.6 L175.0 537.7 L174.0 537.7 L174.0 535.5 L173.0 535.5 L173.0 537.8 L172.0 537.8 L172.0 536.2 L171.0 536.2 L171.0 536.2 L170.0 536.2 L170.0 536.7 L169.0 536.7 L169.0 536.3 L168.0 536.3 L168.0 536.1 L167.0 536.1 L167.0 536.1 L166.0 536.1 L166.0 536.3 L165.0 536.3 L165.0 536.2 L164.0 536.2 L164.0 536.5 L163.0 536.5 L163.0 535.8 L162.0 535.8 L162.0 536.2 L161.0 536.2 L161.0 536.2 L160.0 536.2 L160.0 536.4 L159.0 536.4 L159.0 535.9 L158.0 535.9 L158.0 536.4 L157.0 536.4 L157.0 536.1 L156.0 536.1 L156.0 536.4 L155.0 536.4 L155.0 537.0 L154.0 537.0 L154.0 536.1 L153.0 536.1 L153.0 536.7 L152.0 536.7 L152.0 535.7 L151.0 535.7 L151.0 535.5 L150.0 535.5 L150.0 535.6 L149.0 535.6 L149.0 535.6 L148.0 535.6 L148.0 536.2 L147.0 536.2 L147.0 535.6 L146.0 535.6 L146.0 536.0 L145.0 536.0 L145.0 536.1 L144.0 536.1 L144.0 536.8 L143.0 536.8 L143.0 535.6 L142.0 535.6 L142.0 535.6 L141.0 535.6 L141.0 536.8 L140.0 536.8 L140.0 538.4 L139.0 538.4 L139.0 536.2 L138.0 536.2 L138.0 535.7 L137.0 535.7 L137.0 538.4 L136.0 538.4 L136.0 535.6 L135.0 535.6 L135.0 535.8 L134.0 535.8 L134.0 535.6 L133.0 535.6 L133.0 536.3 L132.0 536.3 L132.0 536.8 L131.0 536.8 L131.0 536.9 L130.0 536.9 L130.0 535.7 L129.0 535.7 L129.0 535.8 L128.0 535.8 L128.0 535.9 L127.0 535.9 L127.0 536.0 L126.0 536.0 L126.0 535.2 L125.0 535.2 L125.0 535.2 L124.0 535.2 L124.0 535.4 L123.0 535.4 L123.0 536.9 L122.0 536.9 L122.0 538.3 L121.0 538.3 L121.0 536.1 L120.0 536.1 L120.0 535.7 L119.0 535.7 L119.0 536.0 L118.0 536.0 L118.0 535.5 L117.0 535.5 L117.0 535.5 L116.0 535.5 L116.0 535.2 L115.0 535.2 L115.0 535.1 L114.0 535.1 L114.0 536.0 L113.0 536.0 L113.0 537.7 L112.0 537.7 L112.0 536.1 L111.0 536.1 L111.0 535.1 L110.0 535.1 L110.0 536.6 L109.0 536.6 L109.0 537.6 L108.0 537.6 L108.0 537.0 L107.0 537.0 L107.0 535.6 L106.0 535.6 L106.0 538.4 L105.0 538.4 L105.0 535.2 L104.0 535.2 L104.0 535.8 L103.0 535.8 L103.0 535.2 L102.0 535.2 L102.0 535.1 L101.0 535.1 L101.0 537.0 L100.0 537.0 L100.0 536.2 L99.0 536.2 L99.0 535.9 L98.0 535.9 L98.0 535.4 L97.0 535.4 L97.0 535.0 L96.0 535.0 L96.0 535.2 L95.0 535.2 L95.0 536.2 L94.0 536.2 L94.0 537.2 L93.0 537.2 L93.0 536.3 L92.0 536.3 L92.0 536.5 L91.0 536.5 L91.0 535.7 L90.0 535.7 L90.0 537.1 L89.0 537.1 L89.0 538.3 L88.0 538.3 L88.0 535.1 L87.0 535.1 L87.0 535.2 L86.0 535.2 L86.0 535.1 L85.0 535.1 L85.0 535.4 L84.0 535.4 L84.0 535.7 L83.0 535.7 L83.0 534.8 L82.0 534.8 L82.0 536.9 L81.0 536.9 L81.0 536.1 L80.0 536.1 L80.0 535.1 L79.0 535.1 L79.0 537.2 L78.0 537.2 L78.0 536.2 L77.0 536.2 L77.0 536.0 L76.0 536.0 L76.0 535.9 L75.0 535.9 L75.0 535.5 L74.0 535.5 L74.0 535.8 L73.0 535.8 L73.0 535.8 L72.0 535.8 L72.0 535.3 L71.0 535.3 L71.0 537.2 L70.0 537.2 L70.0 536.7 L69.0 536.7 L69.0 537.5 L68.0 537.5 L68.0 535.2 L67.0 535.2 L67.0 535.6 L66.0 535.6 L66.0 536.7 L65.0 536.7 L65.0 537.4 L64.0 537.4 L64.0 536.6 L63.0 536.6 L63.0 536.8 L62.0 536.8 L62.0 535.9 L61.0 535.9 L61.0 537.0 L60.0 537.0 L60.0 536.8 L59.0 536.8 L59.0 535.9 L58.0 535.9 L58.0 536.9 L57.0 536.9 L57.0 536.4 L56.0 536.4 L56.0 536.0 L55.0 536.0 L55.0 535.6 L54.0 535.6 L54.0 535.4 L53.0 535.4 L53.0 537.2 L52.0 537.2 L52.0 538.9 L51.0 538.9 L51.0 537.3 L50.0 537.3 L50.0 538.1 L49.0 538.1 L49.0 535.8 L48.0 535.8 L48.0 536.4 L47.0 536.4 L47.0 536.1 L46.0 536.1 L46.0 535.6 L45.0 535.6 L45.0 537.2 L44.0 537.2 L44.0 535.6 L43.0 535.6 L43.0 535.3 L42.0 535.3 L42.0 535.5 L41.0 535.5 L41.0 535.5 L40.0 535.5 L40.0 537.3 L39.0 537.3 L39.0 535.4 L38.0 535.4 L38.0 537.7 L37.0 537.7 L37.0 535.8 L36.0 535.8 L36.0 535.4 L35.0 535.4 L35.0 536.9 L34.0 536.9 L34.0 535.2 L33.0 535.2 L33.0 535.2 L32.0 535.2 L32.0 535.4 L31.0 535.4 L31.0 535.2 L30.0 535.2 L30.0 535.7 L29.0 535.7 L29.0 535.5 L28.0 535.5 L28.0 534.9 L27.0 534.9 L27.0 535.5 L26.0 535.5 L26.0 536.8 L25.0 536.8 L25.0 536.5 L24.0 536.5 L24.0 536.9 L23.0 536.9Z" fill="#1ea6b2"/>
<rect x="23" y="530.3" width="870" height="4.4" fill="#2cc4cc"/>
<path d="M23.5 532.9 L24.5 532.4 L25.5 534.1 L26.5 532.9 L27.5 532.7 L28.5 532.9 L29.5 532.1 L30.5 531.9 L31.5 532.9 L32.5 532.1 L33.5 533.2 L34.5 532.3 L35.5 531.0 L36.5 531.4 L37.5 531.8 L38.5 530.9 L39.5 532.4 L40.5 532.3 L41.5 533.3 L42.5 531.8 L43.5 532.3 L44.5 533.0 L45.5 533.1 L46.5 531.6 L47.5 533.8 L48.5 532.0 L49.5 533.5 L50.5 532.3 L51.5 532.1 L52.5 531.5 L53.5 532.4 L54.5 534.1 L55.5 532.0 L56.5 533.8 L57.5 533.6 L58.5 532.2 L59.5 533.4 L60.5 533.7 L61.5 532.2 L62.5 532.1 L63.5 533.4 L64.5 532.8 L65.5 534.1 L66.5 532.9 L67.5 531.5 L68.5 532.5 L69.5 531.5 L70.5 533.1 L71.5 533.1 L72.5 532.2 L73.5 531.8 L74.5 533.3 L75.5 532.2 L76.5 533.5 L77.5 531.7 L78.5 532.3 L79.5 532.0 L80.5 531.6 L81.5 534.1 L82.5 533.9 L83.5 532.0 L84.5 533.2 L85.5 531.0 L86.5 533.6 L87.5 533.4 L88.5 532.2 L89.5 532.2 L90.5 532.7 L91.5 532.9 L92.5 532.2 L93.5 531.8 L94.5 532.3 L95.5 532.1 L96.5 533.2 L97.5 532.6 L98.5 532.7 L99.5 531.1 L100.5 532.2 L101.5 532.2 L102.5 532.1 L103.5 532.4 L104.5 532.3 L105.5 531.2 L106.5 533.3 L107.5 533.3 L108.5 532.1 L109.5 533.0 L110.5 531.7 L111.5 531.5 L112.5 532.3 L113.5 533.8 L114.5 532.4 L115.5 531.2 L116.5 532.7 L117.5 532.0 L118.5 531.9 L119.5 532.8 L120.5 531.1 L121.5 531.0 L122.5 531.3 L123.5 533.4 L124.5 532.6 L125.5 532.0 L126.5 532.0 L127.5 533.1 L128.5 533.6 L129.5 531.9 L130.5 532.8 L131.5 534.1 L132.5 533.0 L133.5 532.3 L134.5 532.8 L135.5 532.6 L136.5 533.1 L137.5 532.8 L138.5 532.1 L139.5 532.4 L140.5 532.9 L141.5 532.0 L142.5 532.6 L143.5 531.8 L144.5 533.6 L145.5 533.9 L146.5 531.8 L147.5 533.3 L148.5 532.7 L149.5 532.6 L150.5 532.3 L151.5 532.8 L152.5 533.4 L153.5 531.5 L154.5 533.4 L155.5 532.3 L156.5 531.6 L157.5 532.5 L158.5 533.1 L159.5 532.5 L160.5 532.8 L161.5 532.3 L162.5 532.1 L163.5 533.4 L164.5 531.8 L165.5 533.4 L166.5 532.8 L167.5 532.3 L168.5 532.4 L169.5 532.3 L170.5 532.5 L171.5 532.5 L172.5 532.4 L173.5 530.9 L174.5 530.9 L175.5 532.8 L176.5 532.0 L177.5 532.1 L178.5 532.4 L179.5 531.6 L180.5 533.8 L181.5 532.5 L182.5 532.4 L183.5 531.7 L184.5 533.3 L185.5 533.2 L186.5 533.8 L187.5 533.3 L188.5 531.9 L189.5 531.5 L190.5 533.7 L191.5 532.0 L192.5 532.5 L193.5 532.4 L194.5 533.0 L195.5 533.0 L196.5 531.7 L197.5 532.0 L198.5 531.1 L199.5 533.0 L200.5 532.4 L201.5 531.1 L202.5 533.4 L203.5 532.6 L204.5 531.7 L205.5 532.2 L206.5 532.1 L207.5 532.6 L208.5 532.7 L209.5 532.1 L210.5 532.9 L211.5 530.9 L212.5 532.3 L213.5 533.1 L214.5 533.3 L215.5 533.2 L216.5 531.7 L217.5 531.2 L218.5 532.3 L219.5 534.1 L220.5 532.8 L221.5 531.9 L222.5 531.2 L223.5 532.7 L224.5 532.2 L225.5 533.0 L226.5 532.7 L227.5 530.9 L228.5 532.4 L229.5 533.2 L230.5 532.1 L231.5 531.6 L232.5 531.6 L233.5 531.4 L234.5 534.1 L235.5 533.7 L236.5 532.0 L237.5 533.7 L238.5 531.7 L239.5 532.1 L240.5 531.9 L241.5 532.4 L242.5 533.1 L243.5 534.1 L244.5 533.1 L245.5 532.4 L246.5 532.7 L247.5 532.3 L248.5 532.8 L249.5 531.8 L250.5 532.7 L251.5 532.9 L252.5 533.3 L253.5 531.9 L254.5 532.9 L255.5 532.8 L256.5 531.9 L257.5 530.9 L258.5 532.1 L259.5 533.2 L260.5 532.3 L261.5 534.1 L262.5 533.0 L263.5 531.9 L264.5 532.5 L265.5 532.9 L266.5 532.9 L267.5 532.3 L268.5 532.9 L269.5 534.1 L270.5 533.3 L271.5 532.7 L272.5 532.1 L273.5 531.1 L274.5 532.7 L275.5 532.2 L276.5 532.5 L277.5 532.1 L278.5 533.2 L279.5 533.4 L280.5 532.0 L281.5 531.4 L282.5 532.8 L283.5 533.7 L284.5 532.9 L285.5 532.9 L286.5 531.4 L287.5 532.1 L288.5 533.0 L289.5 532.8 L290.5 532.5 L291.5 533.0 L292.5 533.2 L293.5 532.6 L294.5 531.9 L295.5 531.4 L296.5 532.7 L297.5 532.4 L298.5 532.4 L299.5 533.4 L300.5 532.0 L301.5 532.3 L302.5 533.1 L303.5 531.8 L304.5 530.9 L305.5 532.1 L306.5 533.2 L307.5 532.0 L308.5 532.3 L309.5 531.0 L310.5 533.5 L311.5 531.1 L312.5 532.0 L313.5 532.4 L314.5 534.1 L315.5 532.6 L316.5 531.9 L317.5 531.3 L318.5 532.3 L319.5 531.5 L320.5 532.0 L321.5 532.6 L322.5 533.5 L323.5 531.6 L324.5 533.6 L325.5 530.9 L326.5 534.1 L327.5 532.0 L328.5 532.2 L329.5 532.1 L330.5 532.7 L331.5 532.5 L332.5 532.3 L333.5 532.0 L334.5 532.1 L335.5 532.6 L336.5 532.1 L337.5 532.0 L338.5 531.4 L339.5 532.5 L340.5 532.9 L341.5 531.7 L342.5 533.3 L343.5 532.5 L344.5 532.6 L345.5 531.1 L346.5 533.0 L347.5 533.5 L348.5 534.1 L349.5 532.0 L350.5 532.5 L351.5 533.1 L352.5 533.0 L353.5 532.0 L354.5 532.6 L355.5 533.3 L356.5 533.0 L357.5 532.5 L358.5 533.4 L359.5 531.3 L360.5 532.9 L361.5 532.0 L362.5 532.2 L363.5 533.2 L364.5 533.9 L365.5 532.9 L366.5 532.6 L367.5 533.9 L368.5 533.1 L369.5 530.9 L370.5 532.0 L371.5 532.0 L372.5 532.0 L373.5 531.3 L374.5 533.0 L375.5 532.7 L376.5 533.9 L377.5 532.3 L378.5 532.6 L379.5 531.9 L380.5 533.4 L381.5 533.6 L382.5 533.9 L383.5 533.4 L384.5 532.1 L385.5 533.5 L386.5 531.8 L387.5 532.0 L388.5 532.4 L389.5 534.1 L390.5 532.0 L391.5 531.7 L392.5 532.7 L393.5 533.5 L394.5 533.0 L395.5 533.0 L396.5 531.9 L397.5 532.2 L398.5 533.6 L399.5 532.6 L400.5 532.0 L401.5 532.3 L402.5 533.6 L403.5 533.9 L404.5 532.9 L405.5 531.9 L406.5 533.9 L407.5 532.0 L408.5 532.6 L409.5 532.9 L410.5 532.5 L411.5 532.4 L412.5 533.8 L413.5 532.8 L414.5 531.4 L415.5 532.1 L416.5 533.6 L417.5 532.4 L418.5 531.7 L419.5 533.3 L420.5 532.9 L421.5 532.6 L422.5 533.0 L423.5 532.3 L424.5 532.7 L425.5 533.0 L426.5 532.1 L427.5 533.6 L428.5 531.7 L429.5 534.1 L430.5 532.6 L431.5 532.9 L432.5 531.6 L433.5 533.2 L434.5 531.9 L435.5 533.0 L436.5 532.6 L437.5 531.9 L438.5 534.0 L439.5 532.7 L440.5 532.1 L441.5 532.3 L442.5 532.8 L443.5 532.6 L444.5 533.2 L445.5 532.1 L446.5 532.7 L447.5 532.2 L448.5 532.0 L449.5 533.2 L450.5 531.9 L451.5 531.3 L452.5 533.1 L453.5 532.2 L454.5 533.0 L455.5 533.0 L456.5 533.0 L457.5 532.6 L458.5 533.8 L459.5 531.7 L460.5 533.5 L461.5 532.5 L462.5 532.8 L463.5 532.2 L464.5 533.3 L465.5 533.0 L466.5 532.2 L467.5 532.6 L468.5 533.0 L469.5 532.5 L470.5 534.1 L471.5 533.0 L472.5 532.3 L473.5 533.4 L474.5 532.8 L475.5 532.2 L476.5 532.3 L477.5 531.3 L478.5 533.2 L479.5 533.8 L480.5 532.5 L481.5 531.9 L482.5 531.2 L483.5 531.6 L484.5 532.6 L485.5 532.1 L486.5 532.4 L487.5 531.9 L488.5 532.4 L489.5 532.4 L490.5 532.7 L491.5 532.6 L492.5 532.7 L493.5 531.9 L494.5 532.4 L495.5 531.6 L496.5 532.2 L497.5 532.5 L498.5 532.9 L499.5 531.5 L500.5 531.8 L501.5 532.2 L502.5 531.6 L503.5 532.3 L504.5 532.4 L505.5 532.0 L506.5 533.8 L507.5 532.2 L508.5 532.8 L509.5 531.2 L510.5 533.2 L511.5 532.8 L512.5 532.7 L513.5 530.9 L514.5 532.5 L515.5 532.0 L516.5 532.9 L517.5 532.5 L518.5 532.1 L519.5 532.2 L520.5 533.5 L521.5 533.4 L522.5 531.2 L523.5 532.2 L524.5 533.1 L525.5 532.2 L526.5 532.8 L527.5 532.3 L528.5 533.9 L529.5 533.1 L530.5 532.4 L531.5 533.7 L532.5 533.1 L533.5 533.9 L534.5 532.2 L535.5 531.4 L536.5 533.2 L537.5 532.6 L538.5 531.2 L539.5 530.9 L540.5 532.6 L541.5 532.6 L542.5 531.9 L543.5 532.2 L544.5 532.6 L545.5 531.5 L546.5 533.5 L547.5 531.5 L548.5 532.6 L549.5 532.6 L550.5 532.2 L551.5 531.9 L552.5 533.2 L553.5 531.3 L554.5 532.5 L555.5 533.8 L556.5 531.9 L557.5 531.3 L558.5 532.2 L559.5 530.9 L560.5 531.9 L561.5 531.6 L562.5 531.9 L563.5 531.8 L564.5 533.0 L565.5 532.6 L566.5 531.7 L567.5 533.6 L568.5 531.8 L569.5 533.7 L570.5 532.2 L571.5 531.8 L572.5 532.2 L573.5 533.7 L574.5 532.6 L575.5 532.5 L576.5 531.2 L577.5 532.5 L578.5 532.3 L579.5 532.2 L580.5 531.9 L581.5 531.3 L582.5 533.5 L583.5 531.8 L584.5 533.0 L585.5 533.0 L586.5 532.7 L587.5 532.6 L588.5 533.0 L589.5 532.3 L590.5 532.5 L591.5 532.8 L592.5 532.7 L593.5 532.3 L594.5 530.9 L595.5 532.5 L596.5 531.5 L597.5 533.5 L598.5 533.5 L599.5 532.7 L600.5 532.7 L601.5 530.9 L602.5 532.4 L603.5 531.9 L604.5 534.0 L605.5 531.5 L606.5 534.1 L607.5 532.4 L608.5 530.9 L609.5 534.0 L610.5 532.4 L611.5 532.8 L612.5 533.4 L613.5 531.3 L614.5 532.1 L615.5 532.6 L616.5 533.5 L617.5 532.4 L618.5 533.0 L619.5 531.1 L620.5 532.9 L621.5 531.8 L622.5 532.3 L623.5 532.6 L624.5 533.2 L625.5 532.0 L626.5 532.9 L627.5 532.3 L628.5 533.0 L629.5 532.2 L630.5 533.7 L631.5 531.7 L632.5 531.7 L633.5 533.6 L634.5 532.0 L635.5 533.1 L636.5 533.1 L637.5 531.2 L638.5 532.3 L639.5 532.2 L640.5 532.4 L641.5 531.3 L642.5 532.7 L643.5 532.7 L644.5 531.7 L645.5 532.5 L646.5 532.7 L647.5 531.2 L648.5 532.5 L649.5 533.2 L650.5 533.1 L651.5 531.7 L652.5 531.9 L653.5 532.5 L654.5 532.8 L655.5 533.2 L656.5 532.6 L657.5 533.2 L658.5 532.0 L659.5 534.0 L660.5 532.4 L661.5 531.8 L662.5 532.1 L663.5 531.1 L664.5 531.9 L665.5 532.3 L666.5 532.9 L667.5 533.4 L668.5 531.8 L669.5 531.9 L670.5 533.1 L671.5 533.3 L672.5 533.1 L673.5 532.7 L674.5 531.6 L675.5 532.1 L676.5 531.3 L677.5 531.9 L678.5 533.5 L679.5 533.7 L680.5 532.3 L681.5 533.0 L682.5 533.6 L683.5 531.6 L684.5 531.4 L685.5 532.0 L686.5 530.9 L687.5 533.0 L688.5 532.4 L689.5 532.3 L690.5 532.5 L691.5 532.9 L692.5 532.5 L693.5 531.5 L694.5 533.0 L695.5 532.1 L696.5 532.7 L697.5 531.9 L698.5 532.5 L699.5 531.2 L700.5 532.6 L701.5 532.2 L702.5 533.3 L703.5 531.8 L704.5 531.8 L705.5 533.0 L706.5 530.9 L707.5 533.0 L708.5 532.4 L709.5 532.1 L710.5 532.5 L711.5 532.2 L712.5 531.7 L713.5 533.0 L714.5 531.8 L715.5 532.6 L716.5 532.3 L717.5 531.9 L718.5 532.0 L719.5 532.7 L720.5 532.2 L721.5 533.5 L722.5 533.1 L723.5 532.1 L724.5 533.3 L725.5 530.9 L726.5 533.8 L727.5 531.4 L728.5 531.4 L729.5 533.3 L730.5 531.2 L731.5 531.9 L732.5 532.7 L733.5 530.9 L734.5 532.3 L735.5 533.2 L736.5 531.9 L737.5 533.6 L738.5 531.8 L739.5 533.6 L740.5 532.8 L741.5 532.6 L742.5 532.3 L743.5 531.7 L744.5 533.3 L745.5 531.5 L746.5 532.5 L747.5 533.0 L748.5 532.8 L749.5 533.0 L750.5 532.0 L751.5 531.4 L752.5 532.6 L753.5 532.3 L754.5 533.3 L755.5 530.9 L756.5 532.4 L757.5 532.8 L758.5 532.1 L759.5 531.2 L760.5 532.5 L761.5 533.3 L762.5 531.9 L763.5 531.7 L764.5 531.7 L765.5 531.7 L766.5 531.0 L767.5 534.1 L768.5 532.3 L769.5 533.4 L770.5 533.4 L771.5 532.0 L772.5 532.9 L773.5 533.9 L774.5 533.5 L775.5 533.3 L776.5 531.9 L777.5 532.0 L778.5 532.5 L779.5 533.7 L780.5 531.9 L781.5 533.0 L782.5 533.4 L783.5 533.1 L784.5 532.5 L785.5 532.0 L786.5 533.0 L787.5 532.2 L788.5 532.8 L789.5 532.1 L790.5 532.1 L791.5 532.1 L792.5 531.7 L793.5 533.2 L794.5 531.4 L795.5 532.8 L796.5 532.1 L797.5 532.9 L798.5 531.2 L799.5 532.5 L800.5 532.5 L801.5 533.6 L802.5 533.3 L803.5 532.8 L804.5 532.4 L805.5 532.5 L806.5 533.3 L807.5 533.5 L808.5 533.0 L809.5 533.5 L810.5 531.3 L811.5 533.3 L812.5 534.1 L813.5 532.6 L814.5 532.0 L815.5 533.6 L816.5 531.0 L817.5 533.5 L818.5 531.6 L819.5 532.9 L820.5 531.6 L821.5 533.7 L822.5 532.6 L823.5 532.0 L824.5 532.5 L825.5 533.6 L826.5 533.7 L827.5 532.7 L828.5 532.4 L829.5 533.7 L830.5 532.6 L831.5 532.1 L832.5 534.1 L833.5 531.3 L834.5 532.8 L835.5 533.8 L836.5 532.9 L837.5 532.8 L838.5 533.3 L839.5 531.8 L840.5 532.6 L841.5 532.5 L842.5 533.4 L843.5 532.9 L844.5 532.6 L845.5 533.6 L846.5 533.6 L847.5 531.6 L848.5 534.1 L849.5 532.9 L850.5 532.2 L851.5 534.0 L852.5 530.9 L853.5 531.6 L854.5 532.8 L855.5 532.1 L856.5 531.7 L857.5 532.4 L858.5 533.8 L859.5 532.6 L860.5 533.3 L861.5 533.2 L862.5 532.6 L863.5 532.7 L864.5 532.1 L865.5 532.8 L866.5 533.2 L867.5 532.5 L868.5 532.6 L869.5 533.0 L870.5 532.7 L871.5 532.9 L872.5 531.2 L873.5 532.9 L874.5 531.3 L875.5 533.1 L876.5 532.5 L877.5 532.3 L878.5 531.7 L879.5 533.3 L880.5 532.3 L881.5 532.3 L882.5 531.1 L883.5 533.8 L884.5 532.2 L885.5 532.0 L886.5 533.5 L887.5 533.0 L888.5 530.9 L889.5 532.5 L890.5 533.8 L891.5 532.4 L892.5 532.0" fill="none" stroke="#44e4e8" stroke-width="2.0" stroke-linejoin="round"/>
<path d="M22.6 587V19.2H893.4" fill="none" stroke="#b8c0ea" stroke-width="1.5"/>
<path d="M22 586.4H894" fill="none" stroke="#a8b2e2" stroke-width="1.4"/>
<path d="M893 20V586" fill="none" stroke="#8494d4" stroke-width="1.6"/>
<rect x="251" y="10.6" width="415.5" height="2.2" fill="#2f7d5c"/>
<path d="M252 6.3H250.2V17H252" stroke="#c4c4cc" stroke-width="1.3" fill="none"/>
<path d="M665.6 6.3H667.4V17H665.6" stroke="#c4c4cc" stroke-width="1.3" fill="none"/>
<rect x="323.3" y="8.8" width="8" height="10" rx="1.5" fill="#eaa224"/>
<rect x="326.4" y="10.6" width="1.9" height="7.2" fill="#2a1204"/>
<polygon points="455,5 461.6,5 458.3,9.2" fill="#f0a428"/>
<polygon points="453.3,19.6 463.2,19.6 458.3,24.8" fill="#f0a428"/>
<path d="M181.6 25.4H191.2Q192.2 25.4 192.2 26.4V35.2L186.4 39.2L180.6 35.2V26.4Q180.6 25.4 181.6 25.4Z" fill="#f0a428"/>
<path d="M182.6 28.4H190.2M186.4 28.4V36" stroke="#2a1204" stroke-width="2.2" fill="none"/>
<polygon points="882.8,484.5 888.6,479.8 888.6,489.2" fill="#ecec28"/>
<rect x="888" y="483.5" width="4.6" height="2" fill="#ecec28"/>
<clipPath id="cl"><rect x="5" y="500" width="30" height="60"/></clipPath>
<g clip-path="url(#cl)"><path d="M4 523.2H14.2L21 529.8L14.2 536.4H4Z" fill="#dcd438" stroke="#0c0c0c" stroke-width="2.3" stroke-linejoin="round"/>
<text x="9.2" y="534" font-family="'Liberation Sans',sans-serif" font-weight="bold" font-size="12" fill="#0c0c0c">1</text></g>
<path d="M5 528.9H15.2L21.6 535.6L15.2 542.4H5Z" fill="#3ccad2"/>
<path d="M5 542.6H15.2L21.6 535.8" stroke="#2a5a9a" stroke-width="1" fill="none"/>
<text x="7.4" y="539.6" font-family="'DejaVu Sans','Liberation Sans',sans-serif" font-size="12.4" fill="#083c44" stroke="#083c44" stroke-width="0.7">2</text>
<rect x="517.2" y="606.4" width="8.8" height="11" rx="1.5" fill="#f0a428"/>
<path d="M519 608.8H524.2M521.6 608.8V615.6" stroke="#2a1204" stroke-width="1.7" fill="none"/>
<path d="M527.2 611.8H534.2M531.4 609L534.4 611.8L531.4 614.6" stroke="#f0a428" stroke-width="1.5" fill="none"/>
<polygon points="536,608.6 546,608.6 541,613.6" fill="#f0a428"/>
</svg>
<div style="position:absolute;left:0;top:0;width:900px;height:678px;will-change:transform;">
<div class="t" style="left:6.7px;top:3.8px;font-size:15.5px;letter-spacing:-0.57px;color:#12163e;-webkit-text-stroke-width:0px;font-weight:bold;font-family:'Liberation Sans',sans-serif">Tek</div>
<div class="t" style="left:35.1px;top:5.5px;font-size:12.6px;letter-spacing:0.69px;color:#ffffff;-webkit-text-stroke-width:0.6px;font-weight:normal;font-family:'DejaVu Sans','Liberation Sans',sans-serif">Stop</div>
<div class="t" style="left:35.6px;top:591.2px;font-size:12px;letter-spacing:0.00px;color:#111100;-webkit-text-stroke-width:0px;font-weight:bold;font-family:'Liberation Sans',sans-serif">1</div>
<div class="t" style="left:64.5px;top:590.8px;font-size:12.3px;letter-spacing:0.68px;color:#e6dc32;-webkit-text-stroke-width:0.6px;font-weight:normal;font-family:'DejaVu Sans','Liberation Sans',sans-serif">2.00 V</div>
<div class="t" style="left:155.8px;top:591.6px;font-size:11.5px;letter-spacing:0.00px;color:#083038;-webkit-text-stroke-width:0.5px;font-weight:normal;font-family:'DejaVu Sans','Liberation Sans',sans-serif">2</div>
<div class="t" style="left:185.5px;top:590.8px;font-size:12.3px;letter-spacing:0.64px;color:#3cc8d0;-webkit-text-stroke-width:0.6px;font-weight:normal;font-family:'DejaVu Sans','Liberation Sans',sans-serif">2.00 V</div>
<div class="t" style="left:517.8px;top:590.5px;font-size:12px;letter-spacing:1.34px;color:#ffffff;-webkit-text-stroke-width:0.6px;font-weight:normal;font-family:'DejaVu Sans','Liberation Sans',sans-serif">400µs</div>
<div class="t" style="left:548.3px;top:605.5px;font-size:12px;letter-spacing:0.85px;color:#f0a428;-webkit-text-stroke-width:0.6px;font-weight:normal;font-family:'DejaVu Sans','Liberation Sans',sans-serif">1.25000ms</div>
<div class="t" style="left:654.8px;top:591.0px;font-size:12px;letter-spacing:1.51px;color:#ffffff;-webkit-text-stroke-width:0.6px;font-weight:normal;font-family:'DejaVu Sans','Liberation Sans',sans-serif">2.50MS/s</div>
<div class="t" style="left:654.4px;top:605.8px;font-size:12px;letter-spacing:1.27px;color:#ffffff;-webkit-text-stroke-width:0.6px;font-weight:normal;font-family:'DejaVu Sans','Liberation Sans',sans-serif">10k points</div>
<div class="t" style="left:786.0px;top:591.5px;font-size:12px;letter-spacing:0.00px;color:#111100;-webkit-text-stroke-width:0px;font-weight:bold;font-family:'Liberation Sans',sans-serif">1</div>
<div class="t" style="left:842.0px;top:590.9px;font-size:12.3px;letter-spacing:0.54px;color:#ffffff;-webkit-text-stroke-width:0.6px;font-weight:normal;font-family:'DejaVu Sans','Liberation Sans',sans-serif">1.60 V</div>
<div class="t" style="left:801.0px;top:642.7px;font-size:12.3px;letter-spacing:0.78px;color:#ffffff;-webkit-text-stroke-width:0.6px;font-weight:normal;font-family:'DejaVu Sans','Liberation Sans',sans-serif">21 May 2025</div>
<div class="t" style="left:800.6px;top:656.7px;font-size:12.3px;letter-spacing:0.81px;color:#ffffff;-webkit-text-stroke-width:0.6px;font-weight:normal;font-family:'DejaVu Sans','Liberation Sans',sans-serif">16:10:14</div>
<div class="t" style="left:8.3px;top:644.6px;font-size:13px;letter-spacing:0.00px;color:#0a3a4a;-webkit-text-stroke-width:0.5px;font-weight:normal;font-family:'DejaVu Sans','Liberation Sans',sans-serif">2</div>
<div class="t" style="left:41.2px;top:631.4px;font-size:13.7px;letter-spacing:0.35px;color:#16256e;-webkit-text-stroke-width:0.55px;font-weight:normal;font-family:'DejaVu Sans','Liberation Sans',sans-serif">Coupling</div>
<div class="t" style="left:29.6px;top:651.6px;font-size:13.7px;letter-spacing:-0.84px;color:#0c1430;-webkit-text-stroke-width:0.5px;font-weight:normal;font-family:'DejaVu Sans','Liberation Sans',sans-serif">DC</div>
<div class="t" style="left:63.3px;top:651.6px;font-size:13.7px;letter-spacing:-0.32px;color:#16256e;-webkit-text-stroke-width:0.55px;font-weight:normal;font-family:'DejaVu Sans','Liberation Sans',sans-serif">AC</div>
<div class="t" style="left:136.5px;top:631.4px;font-size:13.7px;letter-spacing:0.03px;color:#16256e;-webkit-text-stroke-width:0.55px;font-weight:normal;font-family:'DejaVu Sans','Liberation Sans',sans-serif">Impedance</div>
<div class="t" style="left:133.5px;top:651.6px;font-size:13.7px;letter-spacing:0.49px;color:#16256e;-webkit-text-stroke-width:0.55px;font-weight:normal;font-family:'DejaVu Sans','Liberation Sans',sans-serif">1MΩ</div>
<div class="t" style="left:184.0px;top:651.6px;font-size:13.7px;letter-spacing:0.54px;color:#16256e;-webkit-text-stroke-width:0.55px;font-weight:normal;font-family:'DejaVu Sans','Liberation Sans',sans-serif">50Ω</div>
<div class="t" style="left:255.5px;top:631.4px;font-size:13.7px;letter-spacing:0.13px;color:#16256e;-webkit-text-stroke-width:0.55px;font-weight:normal;font-family:'DejaVu Sans','Liberation Sans',sans-serif">Invert</div>
<div class="t" style="left:242.0px;top:651.6px;font-size:13.7px;letter-spacing:0.73px;color:#16256e;-webkit-text-stroke-width:0.55px;font-weight:normal;font-family:'DejaVu Sans','Liberation Sans',sans-serif">On</div>
<div class="t" style="left:291.5px;top:651.6px;font-size:13.7px;letter-spacing:-0.14px;color:#16256e;-webkit-text-stroke-width:0.55px;font-weight:normal;font-family:'DejaVu Sans','Liberation Sans',sans-serif">Off</div>
<div class="t" style="left:343.0px;top:635.2px;font-size:13.3px;letter-spacing:0.30px;color:#16256e;-webkit-text-stroke-width:0.55px;font-weight:normal;font-family:'DejaVu Sans','Liberation Sans',sans-serif">Bandwidth</div>
<div class="t" style="left:366.8px;top:650.2px;font-size:13.3px;letter-spacing:1.05px;color:#16256e;-webkit-text-stroke-width:0.55px;font-weight:normal;font-family:'DejaVu Sans','Liberation Sans',sans-serif">Full</div>
<div class="t" style="left:458.7px;top:643.1px;font-size:12px;letter-spacing:0.00px;color:#083038;-webkit-text-stroke-width:0.5px;font-weight:normal;font-family:'DejaVu Sans','Liberation Sans',sans-serif">2</div>
<div class="t" style="left:479.0px;top:641.7px;font-size:13.7px;letter-spacing:-0.41px;color:#16256e;-webkit-text-stroke-width:0.55px;font-weight:normal;font-family:'DejaVu Sans','Liberation Sans',sans-serif">Label</div>
<div class="t" style="left:670.3px;top:649.1px;font-size:13.7px;letter-spacing:0.30px;color:#16256e;-webkit-text-stroke-width:0.55px;font-weight:normal;font-family:'DejaVu Sans','Liberation Sans',sans-serif">More</div>
</div>
</body></html>
